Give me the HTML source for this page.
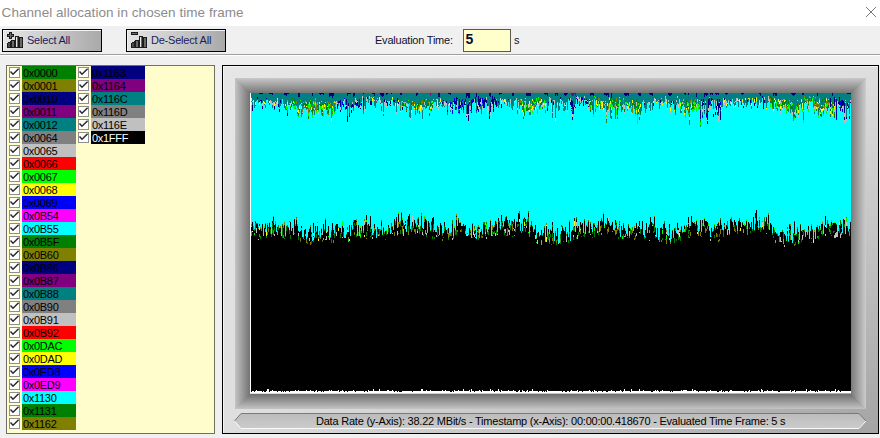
<!DOCTYPE html>
<html><head><meta charset="utf-8"><style>
*{margin:0;padding:0;box-sizing:border-box}
html,body{width:880px;height:438px;overflow:hidden;background:#f0f0f0;font-family:"Liberation Sans",sans-serif}
.abs{position:absolute}
#title{position:absolute;left:0;top:0;width:880px;height:26px;background:#fff}
#title span{position:absolute;left:1.6px;top:4.6px;font-size:13.5px;color:#8c8c8c;letter-spacing:0.05px;white-space:nowrap}
#sep{position:absolute;left:0;top:54px;width:880px;height:1px;background:#a0a0a0}
#sep2{position:absolute;left:0;top:55px;width:880px;height:1px;background:#fff}
.btn{position:absolute;top:29px;height:23px;border:1px solid #000;background:linear-gradient(90deg,#e4e4e4 0%,#d0d0d0 40%,#a9a9a9 100%);box-shadow:inset 1px 1px 0 #f4f4f4}
.btn span{position:absolute;top:4px;font-size:11px;color:#1c1c5c;letter-spacing:-0.22px;white-space:nowrap}
.lbl{position:absolute;font-size:11px;color:#101030;letter-spacing:-0.22px;white-space:nowrap}
#inp{position:absolute;left:463px;top:29px;width:48px;height:23px;border:1px solid #5a5a50;background:#ffffcc}
#inp span{position:absolute;left:1.5px;top:1px;font-size:14px;font-weight:bold;color:#0a0a30}
#list{position:absolute;left:6px;top:65px;width:209px;height:369px;background:#fffdcc;border:1px solid #707064}
.it{position:absolute;width:69px;height:13px}
.ck{position:absolute;left:2px;top:1px}
.cl{position:absolute;left:15px;top:0;width:54px;height:13px;font-size:11px;line-height:13px;letter-spacing:-0.3px;padding-left:1px;padding-top:1px;white-space:nowrap}
#panel{position:absolute;left:222px;top:65px;width:657px;height:369px;border:1px solid #000;box-shadow:inset 1px 1px 0 #f4f4f4;background:linear-gradient(to bottom right,#e6e6e6 0%,#dedede 50%,#a4a4a4 100%)}
#frame{position:absolute;left:235px;top:78px;width:631px;height:331px;border-style:solid;border-width:15px;border-color:#a0a0a0}
#status{position:absolute;left:234px;top:413px;width:633px;height:16px}
#status span{position:absolute;left:82px;top:2px;font-size:11px;color:#000;letter-spacing:-0.22px;white-space:nowrap}
</style></head><body>
<div id="title"><span>Channel allocation in chosen time frame</span>
<svg class="abs" style="left:866px;top:7px" width="10" height="10"><path d="M0 0L10 10M10 0L0 10" stroke="#777" stroke-width="1"/></svg></div>
<div id="sep"></div><div id="sep2"></div>
<div class="btn" style="left:2px;width:100px"><svg width="16" height="16" shape-rendering="crispEdges" style="position:absolute;left:4px;top:2px"><rect x="2" y="0" width="1" height="1" fill="#1c1c1c"/><rect x="3" y="0" width="1" height="1" fill="#1c1c1c"/><rect x="4" y="0" width="1" height="1" fill="#1c1c1c"/><rect x="2" y="1" width="1" height="1" fill="#1c1c1c"/><rect x="3" y="1" width="1" height="1" fill="#6a6a6a"/><rect x="4" y="1" width="1" height="1" fill="#1c1c1c"/><rect x="0" y="2" width="1" height="1" fill="#1c1c1c"/><rect x="1" y="2" width="1" height="1" fill="#1c1c1c"/><rect x="2" y="2" width="1" height="1" fill="#1c1c1c"/><rect x="3" y="2" width="1" height="1" fill="#6a6a6a"/><rect x="4" y="2" width="1" height="1" fill="#1c1c1c"/><rect x="5" y="2" width="1" height="1" fill="#1c1c1c"/><rect x="6" y="2" width="1" height="1" fill="#1c1c1c"/><rect x="0" y="3" width="1" height="1" fill="#1c1c1c"/><rect x="1" y="3" width="1" height="1" fill="#6a6a6a"/><rect x="2" y="3" width="1" height="1" fill="#6a6a6a"/><rect x="3" y="3" width="1" height="1" fill="#6a6a6a"/><rect x="4" y="3" width="1" height="1" fill="#6a6a6a"/><rect x="5" y="3" width="1" height="1" fill="#6a6a6a"/><rect x="6" y="3" width="1" height="1" fill="#1c1c1c"/><rect x="0" y="4" width="1" height="1" fill="#1c1c1c"/><rect x="1" y="4" width="1" height="1" fill="#1c1c1c"/><rect x="2" y="4" width="1" height="1" fill="#1c1c1c"/><rect x="3" y="4" width="1" height="1" fill="#6a6a6a"/><rect x="4" y="4" width="1" height="1" fill="#1c1c1c"/><rect x="5" y="4" width="1" height="1" fill="#1c1c1c"/><rect x="6" y="4" width="1" height="1" fill="#1c1c1c"/><rect x="2" y="5" width="1" height="1" fill="#1c1c1c"/><rect x="3" y="5" width="1" height="1" fill="#6a6a6a"/><rect x="4" y="5" width="1" height="1" fill="#1c1c1c"/><rect x="2" y="6" width="1" height="1" fill="#1c1c1c"/><rect x="3" y="6" width="1" height="1" fill="#1c1c1c"/><rect x="4" y="6" width="1" height="1" fill="#1c1c1c"/><rect x="0" y="11" width="1" height="1" fill="#1c1c1c"/><rect x="0" y="12" width="1" height="1" fill="#1c1c1c"/><rect x="0" y="13" width="1" height="1" fill="#1c1c1c"/><rect x="0" y="14" width="1" height="1" fill="#1c1c1c"/><rect x="0" y="15" width="1" height="1" fill="#1c1c1c"/><rect x="1" y="10" width="1" height="1" fill="#1c1c1c"/><rect x="1" y="11" width="1" height="1" fill="#4a4a4a"/><rect x="1" y="12" width="1" height="1" fill="#4a4a4a"/><rect x="1" y="13" width="1" height="1" fill="#4a4a4a"/><rect x="1" y="14" width="1" height="1" fill="#4a4a4a"/><rect x="1" y="15" width="1" height="1" fill="#1c1c1c"/><rect x="2" y="10" width="1" height="1" fill="#1c1c1c"/><rect x="2" y="11" width="1" height="1" fill="#4a4a4a"/><rect x="2" y="12" width="1" height="1" fill="#4a4a4a"/><rect x="2" y="13" width="1" height="1" fill="#4a4a4a"/><rect x="2" y="14" width="1" height="1" fill="#4a4a4a"/><rect x="2" y="15" width="1" height="1" fill="#1c1c1c"/><rect x="3" y="9" width="1" height="1" fill="#1c1c1c"/><rect x="3" y="10" width="1" height="1" fill="#1c1c1c"/><rect x="3" y="11" width="1" height="1" fill="#1c1c1c"/><rect x="3" y="12" width="1" height="1" fill="#1c1c1c"/><rect x="3" y="13" width="1" height="1" fill="#1c1c1c"/><rect x="3" y="14" width="1" height="1" fill="#1c1c1c"/><rect x="3" y="15" width="1" height="1" fill="#1c1c1c"/><rect x="4" y="8" width="1" height="1" fill="#1c1c1c"/><rect x="4" y="9" width="1" height="1" fill="#1c1c1c"/><rect x="4" y="10" width="1" height="1" fill="#1c1c1c"/><rect x="4" y="11" width="1" height="1" fill="#1c1c1c"/><rect x="4" y="12" width="1" height="1" fill="#1c1c1c"/><rect x="4" y="13" width="1" height="1" fill="#1c1c1c"/><rect x="4" y="14" width="1" height="1" fill="#1c1c1c"/><rect x="4" y="15" width="1" height="1" fill="#1c1c1c"/><rect x="5" y="8" width="1" height="1" fill="#1c1c1c"/><rect x="5" y="9" width="1" height="1" fill="#6a6a6a"/><rect x="5" y="10" width="1" height="1" fill="#6a6a6a"/><rect x="5" y="11" width="1" height="1" fill="#6a6a6a"/><rect x="5" y="12" width="1" height="1" fill="#6a6a6a"/><rect x="5" y="13" width="1" height="1" fill="#6a6a6a"/><rect x="5" y="14" width="1" height="1" fill="#6a6a6a"/><rect x="5" y="15" width="1" height="1" fill="#1c1c1c"/><rect x="6" y="8" width="1" height="1" fill="#1c1c1c"/><rect x="6" y="9" width="1" height="1" fill="#6a6a6a"/><rect x="6" y="10" width="1" height="1" fill="#6a6a6a"/><rect x="6" y="11" width="1" height="1" fill="#6a6a6a"/><rect x="6" y="12" width="1" height="1" fill="#6a6a6a"/><rect x="6" y="13" width="1" height="1" fill="#6a6a6a"/><rect x="6" y="14" width="1" height="1" fill="#6a6a6a"/><rect x="6" y="15" width="1" height="1" fill="#1c1c1c"/><rect x="7" y="8" width="1" height="1" fill="#1c1c1c"/><rect x="7" y="9" width="1" height="1" fill="#1c1c1c"/><rect x="7" y="10" width="1" height="1" fill="#1c1c1c"/><rect x="7" y="11" width="1" height="1" fill="#1c1c1c"/><rect x="7" y="12" width="1" height="1" fill="#1c1c1c"/><rect x="7" y="13" width="1" height="1" fill="#1c1c1c"/><rect x="7" y="14" width="1" height="1" fill="#1c1c1c"/><rect x="7" y="15" width="1" height="1" fill="#1c1c1c"/><rect x="8" y="4" width="1" height="1" fill="#1c1c1c"/><rect x="8" y="5" width="1" height="1" fill="#1c1c1c"/><rect x="8" y="6" width="1" height="1" fill="#1c1c1c"/><rect x="8" y="7" width="1" height="1" fill="#1c1c1c"/><rect x="8" y="8" width="1" height="1" fill="#1c1c1c"/><rect x="8" y="9" width="1" height="1" fill="#1c1c1c"/><rect x="8" y="10" width="1" height="1" fill="#1c1c1c"/><rect x="8" y="11" width="1" height="1" fill="#1c1c1c"/><rect x="8" y="12" width="1" height="1" fill="#1c1c1c"/><rect x="8" y="13" width="1" height="1" fill="#1c1c1c"/><rect x="8" y="14" width="1" height="1" fill="#1c1c1c"/><rect x="8" y="15" width="1" height="1" fill="#1c1c1c"/><rect x="9" y="4" width="1" height="1" fill="#1c1c1c"/><rect x="9" y="5" width="1" height="1" fill="#e8e8e8"/><rect x="9" y="6" width="1" height="1" fill="#e8e8e8"/><rect x="9" y="7" width="1" height="1" fill="#e8e8e8"/><rect x="9" y="8" width="1" height="1" fill="#e8e8e8"/><rect x="9" y="9" width="1" height="1" fill="#e8e8e8"/><rect x="9" y="10" width="1" height="1" fill="#e8e8e8"/><rect x="9" y="11" width="1" height="1" fill="#e8e8e8"/><rect x="9" y="12" width="1" height="1" fill="#e8e8e8"/><rect x="9" y="13" width="1" height="1" fill="#e8e8e8"/><rect x="9" y="14" width="1" height="1" fill="#e8e8e8"/><rect x="9" y="15" width="1" height="1" fill="#1c1c1c"/><rect x="10" y="4" width="1" height="1" fill="#1c1c1c"/><rect x="10" y="5" width="1" height="1" fill="#6a6a6a"/><rect x="10" y="6" width="1" height="1" fill="#6a6a6a"/><rect x="10" y="7" width="1" height="1" fill="#6a6a6a"/><rect x="10" y="8" width="1" height="1" fill="#6a6a6a"/><rect x="10" y="9" width="1" height="1" fill="#6a6a6a"/><rect x="10" y="10" width="1" height="1" fill="#6a6a6a"/><rect x="10" y="11" width="1" height="1" fill="#6a6a6a"/><rect x="10" y="12" width="1" height="1" fill="#6a6a6a"/><rect x="10" y="13" width="1" height="1" fill="#6a6a6a"/><rect x="10" y="14" width="1" height="1" fill="#6a6a6a"/><rect x="10" y="15" width="1" height="1" fill="#1c1c1c"/><rect x="11" y="4" width="1" height="1" fill="#1c1c1c"/><rect x="11" y="5" width="1" height="1" fill="#1c1c1c"/><rect x="11" y="6" width="1" height="1" fill="#1c1c1c"/><rect x="11" y="7" width="1" height="1" fill="#1c1c1c"/><rect x="11" y="8" width="1" height="1" fill="#1c1c1c"/><rect x="11" y="9" width="1" height="1" fill="#1c1c1c"/><rect x="11" y="10" width="1" height="1" fill="#1c1c1c"/><rect x="11" y="11" width="1" height="1" fill="#1c1c1c"/><rect x="11" y="12" width="1" height="1" fill="#1c1c1c"/><rect x="11" y="13" width="1" height="1" fill="#1c1c1c"/><rect x="11" y="14" width="1" height="1" fill="#1c1c1c"/><rect x="11" y="15" width="1" height="1" fill="#1c1c1c"/><rect x="12" y="5" width="1" height="1" fill="#1c1c1c"/><rect x="12" y="6" width="1" height="1" fill="#1c1c1c"/><rect x="12" y="7" width="1" height="1" fill="#1c1c1c"/><rect x="12" y="8" width="1" height="1" fill="#1c1c1c"/><rect x="12" y="9" width="1" height="1" fill="#1c1c1c"/><rect x="12" y="10" width="1" height="1" fill="#1c1c1c"/><rect x="12" y="11" width="1" height="1" fill="#1c1c1c"/><rect x="12" y="12" width="1" height="1" fill="#1c1c1c"/><rect x="12" y="13" width="1" height="1" fill="#1c1c1c"/><rect x="12" y="14" width="1" height="1" fill="#1c1c1c"/><rect x="12" y="15" width="1" height="1" fill="#1c1c1c"/><rect x="13" y="5" width="1" height="1" fill="#1c1c1c"/><rect x="13" y="6" width="1" height="1" fill="#6a6a6a"/><rect x="13" y="7" width="1" height="1" fill="#6a6a6a"/><rect x="13" y="8" width="1" height="1" fill="#6a6a6a"/><rect x="13" y="9" width="1" height="1" fill="#6a6a6a"/><rect x="13" y="10" width="1" height="1" fill="#6a6a6a"/><rect x="13" y="11" width="1" height="1" fill="#6a6a6a"/><rect x="13" y="12" width="1" height="1" fill="#6a6a6a"/><rect x="13" y="13" width="1" height="1" fill="#6a6a6a"/><rect x="13" y="14" width="1" height="1" fill="#6a6a6a"/><rect x="13" y="15" width="1" height="1" fill="#1c1c1c"/><rect x="14" y="5" width="1" height="1" fill="#1c1c1c"/><rect x="14" y="6" width="1" height="1" fill="#6a6a6a"/><rect x="14" y="7" width="1" height="1" fill="#6a6a6a"/><rect x="14" y="8" width="1" height="1" fill="#6a6a6a"/><rect x="14" y="9" width="1" height="1" fill="#6a6a6a"/><rect x="14" y="10" width="1" height="1" fill="#6a6a6a"/><rect x="14" y="11" width="1" height="1" fill="#6a6a6a"/><rect x="14" y="12" width="1" height="1" fill="#6a6a6a"/><rect x="14" y="13" width="1" height="1" fill="#6a6a6a"/><rect x="14" y="14" width="1" height="1" fill="#6a6a6a"/><rect x="14" y="15" width="1" height="1" fill="#1c1c1c"/><rect x="15" y="5" width="1" height="1" fill="#1c1c1c"/><rect x="15" y="6" width="1" height="1" fill="#1c1c1c"/><rect x="15" y="7" width="1" height="1" fill="#1c1c1c"/><rect x="15" y="8" width="1" height="1" fill="#1c1c1c"/><rect x="15" y="9" width="1" height="1" fill="#1c1c1c"/><rect x="15" y="10" width="1" height="1" fill="#1c1c1c"/><rect x="15" y="11" width="1" height="1" fill="#1c1c1c"/><rect x="15" y="12" width="1" height="1" fill="#1c1c1c"/><rect x="15" y="13" width="1" height="1" fill="#1c1c1c"/><rect x="15" y="14" width="1" height="1" fill="#1c1c1c"/><rect x="15" y="15" width="1" height="1" fill="#1c1c1c"/></svg><span style="left:24px">Select All</span></div>
<div class="btn" style="left:126px;width:100px"><svg width="16" height="16" shape-rendering="crispEdges" style="position:absolute;left:4px;top:2px"><rect x="0" y="0" width="1" height="1" fill="#1c1c1c"/><rect x="1" y="0" width="1" height="1" fill="#1c1c1c"/><rect x="2" y="0" width="1" height="1" fill="#1c1c1c"/><rect x="3" y="0" width="1" height="1" fill="#1c1c1c"/><rect x="4" y="0" width="1" height="1" fill="#1c1c1c"/><rect x="5" y="0" width="1" height="1" fill="#1c1c1c"/><rect x="6" y="0" width="1" height="1" fill="#1c1c1c"/><rect x="0" y="1" width="1" height="1" fill="#1c1c1c"/><rect x="1" y="1" width="1" height="1" fill="#6a6a6a"/><rect x="2" y="1" width="1" height="1" fill="#6a6a6a"/><rect x="3" y="1" width="1" height="1" fill="#6a6a6a"/><rect x="4" y="1" width="1" height="1" fill="#6a6a6a"/><rect x="5" y="1" width="1" height="1" fill="#6a6a6a"/><rect x="6" y="1" width="1" height="1" fill="#1c1c1c"/><rect x="0" y="2" width="1" height="1" fill="#1c1c1c"/><rect x="1" y="2" width="1" height="1" fill="#1c1c1c"/><rect x="2" y="2" width="1" height="1" fill="#1c1c1c"/><rect x="3" y="2" width="1" height="1" fill="#1c1c1c"/><rect x="4" y="2" width="1" height="1" fill="#1c1c1c"/><rect x="5" y="2" width="1" height="1" fill="#1c1c1c"/><rect x="6" y="2" width="1" height="1" fill="#1c1c1c"/><rect x="0" y="11" width="1" height="1" fill="#1c1c1c"/><rect x="0" y="12" width="1" height="1" fill="#1c1c1c"/><rect x="0" y="13" width="1" height="1" fill="#1c1c1c"/><rect x="0" y="14" width="1" height="1" fill="#1c1c1c"/><rect x="0" y="15" width="1" height="1" fill="#1c1c1c"/><rect x="1" y="10" width="1" height="1" fill="#1c1c1c"/><rect x="1" y="11" width="1" height="1" fill="#4a4a4a"/><rect x="1" y="12" width="1" height="1" fill="#4a4a4a"/><rect x="1" y="13" width="1" height="1" fill="#4a4a4a"/><rect x="1" y="14" width="1" height="1" fill="#4a4a4a"/><rect x="1" y="15" width="1" height="1" fill="#1c1c1c"/><rect x="2" y="10" width="1" height="1" fill="#1c1c1c"/><rect x="2" y="11" width="1" height="1" fill="#4a4a4a"/><rect x="2" y="12" width="1" height="1" fill="#4a4a4a"/><rect x="2" y="13" width="1" height="1" fill="#4a4a4a"/><rect x="2" y="14" width="1" height="1" fill="#4a4a4a"/><rect x="2" y="15" width="1" height="1" fill="#1c1c1c"/><rect x="3" y="9" width="1" height="1" fill="#1c1c1c"/><rect x="3" y="10" width="1" height="1" fill="#1c1c1c"/><rect x="3" y="11" width="1" height="1" fill="#1c1c1c"/><rect x="3" y="12" width="1" height="1" fill="#1c1c1c"/><rect x="3" y="13" width="1" height="1" fill="#1c1c1c"/><rect x="3" y="14" width="1" height="1" fill="#1c1c1c"/><rect x="3" y="15" width="1" height="1" fill="#1c1c1c"/><rect x="4" y="8" width="1" height="1" fill="#1c1c1c"/><rect x="4" y="9" width="1" height="1" fill="#1c1c1c"/><rect x="4" y="10" width="1" height="1" fill="#1c1c1c"/><rect x="4" y="11" width="1" height="1" fill="#1c1c1c"/><rect x="4" y="12" width="1" height="1" fill="#1c1c1c"/><rect x="4" y="13" width="1" height="1" fill="#1c1c1c"/><rect x="4" y="14" width="1" height="1" fill="#1c1c1c"/><rect x="4" y="15" width="1" height="1" fill="#1c1c1c"/><rect x="5" y="8" width="1" height="1" fill="#1c1c1c"/><rect x="5" y="9" width="1" height="1" fill="#6a6a6a"/><rect x="5" y="10" width="1" height="1" fill="#6a6a6a"/><rect x="5" y="11" width="1" height="1" fill="#6a6a6a"/><rect x="5" y="12" width="1" height="1" fill="#6a6a6a"/><rect x="5" y="13" width="1" height="1" fill="#6a6a6a"/><rect x="5" y="14" width="1" height="1" fill="#6a6a6a"/><rect x="5" y="15" width="1" height="1" fill="#1c1c1c"/><rect x="6" y="8" width="1" height="1" fill="#1c1c1c"/><rect x="6" y="9" width="1" height="1" fill="#6a6a6a"/><rect x="6" y="10" width="1" height="1" fill="#6a6a6a"/><rect x="6" y="11" width="1" height="1" fill="#6a6a6a"/><rect x="6" y="12" width="1" height="1" fill="#6a6a6a"/><rect x="6" y="13" width="1" height="1" fill="#6a6a6a"/><rect x="6" y="14" width="1" height="1" fill="#6a6a6a"/><rect x="6" y="15" width="1" height="1" fill="#1c1c1c"/><rect x="7" y="8" width="1" height="1" fill="#1c1c1c"/><rect x="7" y="9" width="1" height="1" fill="#1c1c1c"/><rect x="7" y="10" width="1" height="1" fill="#1c1c1c"/><rect x="7" y="11" width="1" height="1" fill="#1c1c1c"/><rect x="7" y="12" width="1" height="1" fill="#1c1c1c"/><rect x="7" y="13" width="1" height="1" fill="#1c1c1c"/><rect x="7" y="14" width="1" height="1" fill="#1c1c1c"/><rect x="7" y="15" width="1" height="1" fill="#1c1c1c"/><rect x="8" y="4" width="1" height="1" fill="#1c1c1c"/><rect x="8" y="5" width="1" height="1" fill="#1c1c1c"/><rect x="8" y="6" width="1" height="1" fill="#1c1c1c"/><rect x="8" y="7" width="1" height="1" fill="#1c1c1c"/><rect x="8" y="8" width="1" height="1" fill="#1c1c1c"/><rect x="8" y="9" width="1" height="1" fill="#1c1c1c"/><rect x="8" y="10" width="1" height="1" fill="#1c1c1c"/><rect x="8" y="11" width="1" height="1" fill="#1c1c1c"/><rect x="8" y="12" width="1" height="1" fill="#1c1c1c"/><rect x="8" y="13" width="1" height="1" fill="#1c1c1c"/><rect x="8" y="14" width="1" height="1" fill="#1c1c1c"/><rect x="8" y="15" width="1" height="1" fill="#1c1c1c"/><rect x="9" y="4" width="1" height="1" fill="#1c1c1c"/><rect x="9" y="5" width="1" height="1" fill="#e8e8e8"/><rect x="9" y="6" width="1" height="1" fill="#e8e8e8"/><rect x="9" y="7" width="1" height="1" fill="#e8e8e8"/><rect x="9" y="8" width="1" height="1" fill="#e8e8e8"/><rect x="9" y="9" width="1" height="1" fill="#e8e8e8"/><rect x="9" y="10" width="1" height="1" fill="#e8e8e8"/><rect x="9" y="11" width="1" height="1" fill="#e8e8e8"/><rect x="9" y="12" width="1" height="1" fill="#e8e8e8"/><rect x="9" y="13" width="1" height="1" fill="#e8e8e8"/><rect x="9" y="14" width="1" height="1" fill="#e8e8e8"/><rect x="9" y="15" width="1" height="1" fill="#1c1c1c"/><rect x="10" y="4" width="1" height="1" fill="#1c1c1c"/><rect x="10" y="5" width="1" height="1" fill="#6a6a6a"/><rect x="10" y="6" width="1" height="1" fill="#6a6a6a"/><rect x="10" y="7" width="1" height="1" fill="#6a6a6a"/><rect x="10" y="8" width="1" height="1" fill="#6a6a6a"/><rect x="10" y="9" width="1" height="1" fill="#6a6a6a"/><rect x="10" y="10" width="1" height="1" fill="#6a6a6a"/><rect x="10" y="11" width="1" height="1" fill="#6a6a6a"/><rect x="10" y="12" width="1" height="1" fill="#6a6a6a"/><rect x="10" y="13" width="1" height="1" fill="#6a6a6a"/><rect x="10" y="14" width="1" height="1" fill="#6a6a6a"/><rect x="10" y="15" width="1" height="1" fill="#1c1c1c"/><rect x="11" y="4" width="1" height="1" fill="#1c1c1c"/><rect x="11" y="5" width="1" height="1" fill="#1c1c1c"/><rect x="11" y="6" width="1" height="1" fill="#1c1c1c"/><rect x="11" y="7" width="1" height="1" fill="#1c1c1c"/><rect x="11" y="8" width="1" height="1" fill="#1c1c1c"/><rect x="11" y="9" width="1" height="1" fill="#1c1c1c"/><rect x="11" y="10" width="1" height="1" fill="#1c1c1c"/><rect x="11" y="11" width="1" height="1" fill="#1c1c1c"/><rect x="11" y="12" width="1" height="1" fill="#1c1c1c"/><rect x="11" y="13" width="1" height="1" fill="#1c1c1c"/><rect x="11" y="14" width="1" height="1" fill="#1c1c1c"/><rect x="11" y="15" width="1" height="1" fill="#1c1c1c"/><rect x="12" y="5" width="1" height="1" fill="#1c1c1c"/><rect x="12" y="6" width="1" height="1" fill="#1c1c1c"/><rect x="12" y="7" width="1" height="1" fill="#1c1c1c"/><rect x="12" y="8" width="1" height="1" fill="#1c1c1c"/><rect x="12" y="9" width="1" height="1" fill="#1c1c1c"/><rect x="12" y="10" width="1" height="1" fill="#1c1c1c"/><rect x="12" y="11" width="1" height="1" fill="#1c1c1c"/><rect x="12" y="12" width="1" height="1" fill="#1c1c1c"/><rect x="12" y="13" width="1" height="1" fill="#1c1c1c"/><rect x="12" y="14" width="1" height="1" fill="#1c1c1c"/><rect x="12" y="15" width="1" height="1" fill="#1c1c1c"/><rect x="13" y="5" width="1" height="1" fill="#1c1c1c"/><rect x="13" y="6" width="1" height="1" fill="#6a6a6a"/><rect x="13" y="7" width="1" height="1" fill="#6a6a6a"/><rect x="13" y="8" width="1" height="1" fill="#6a6a6a"/><rect x="13" y="9" width="1" height="1" fill="#6a6a6a"/><rect x="13" y="10" width="1" height="1" fill="#6a6a6a"/><rect x="13" y="11" width="1" height="1" fill="#6a6a6a"/><rect x="13" y="12" width="1" height="1" fill="#6a6a6a"/><rect x="13" y="13" width="1" height="1" fill="#6a6a6a"/><rect x="13" y="14" width="1" height="1" fill="#6a6a6a"/><rect x="13" y="15" width="1" height="1" fill="#1c1c1c"/><rect x="14" y="5" width="1" height="1" fill="#1c1c1c"/><rect x="14" y="6" width="1" height="1" fill="#6a6a6a"/><rect x="14" y="7" width="1" height="1" fill="#6a6a6a"/><rect x="14" y="8" width="1" height="1" fill="#6a6a6a"/><rect x="14" y="9" width="1" height="1" fill="#6a6a6a"/><rect x="14" y="10" width="1" height="1" fill="#6a6a6a"/><rect x="14" y="11" width="1" height="1" fill="#6a6a6a"/><rect x="14" y="12" width="1" height="1" fill="#6a6a6a"/><rect x="14" y="13" width="1" height="1" fill="#6a6a6a"/><rect x="14" y="14" width="1" height="1" fill="#6a6a6a"/><rect x="14" y="15" width="1" height="1" fill="#1c1c1c"/><rect x="15" y="5" width="1" height="1" fill="#1c1c1c"/><rect x="15" y="6" width="1" height="1" fill="#1c1c1c"/><rect x="15" y="7" width="1" height="1" fill="#1c1c1c"/><rect x="15" y="8" width="1" height="1" fill="#1c1c1c"/><rect x="15" y="9" width="1" height="1" fill="#1c1c1c"/><rect x="15" y="10" width="1" height="1" fill="#1c1c1c"/><rect x="15" y="11" width="1" height="1" fill="#1c1c1c"/><rect x="15" y="12" width="1" height="1" fill="#1c1c1c"/><rect x="15" y="13" width="1" height="1" fill="#1c1c1c"/><rect x="15" y="14" width="1" height="1" fill="#1c1c1c"/><rect x="15" y="15" width="1" height="1" fill="#1c1c1c"/></svg><span style="left:24px">De-Select All</span></div>
<div class="lbl" style="left:375px;top:34px">Evaluation Time:</div>
<div id="inp"><span>5</span></div>
<div class="lbl" style="left:514px;top:34px">s</div>
<div id="list"><div class="it" style="left:0px;top:0px"><svg class="ck" width="11" height="11" viewBox="0 0 11 11"><rect x="0.5" y="0.5" width="10" height="10" fill="#fff" stroke="#8f8f8f"/><path d="M1.5 4.5L4 7.2L9.6 1.8" fill="none" stroke="#2a2a2a" stroke-width="1.5"/></svg><div class="cl" style="background:#008000;color:#000">0x0000</div></div><div class="it" style="left:0px;top:13px"><svg class="ck" width="11" height="11" viewBox="0 0 11 11"><rect x="0.5" y="0.5" width="10" height="10" fill="#fff" stroke="#8f8f8f"/><path d="M1.5 4.5L4 7.2L9.6 1.8" fill="none" stroke="#2a2a2a" stroke-width="1.5"/></svg><div class="cl" style="background:#808000;color:#000">0x0001</div></div><div class="it" style="left:0px;top:26px"><svg class="ck" width="11" height="11" viewBox="0 0 11 11"><rect x="0.5" y="0.5" width="10" height="10" fill="#fff" stroke="#8f8f8f"/><path d="M1.5 4.5L4 7.2L9.6 1.8" fill="none" stroke="#2a2a2a" stroke-width="1.5"/></svg><div class="cl" style="background:#000080;color:#000">0x0010</div></div><div class="it" style="left:0px;top:39px"><svg class="ck" width="11" height="11" viewBox="0 0 11 11"><rect x="0.5" y="0.5" width="10" height="10" fill="#fff" stroke="#8f8f8f"/><path d="M1.5 4.5L4 7.2L9.6 1.8" fill="none" stroke="#2a2a2a" stroke-width="1.5"/></svg><div class="cl" style="background:#800080;color:#000">0x0011</div></div><div class="it" style="left:0px;top:52px"><svg class="ck" width="11" height="11" viewBox="0 0 11 11"><rect x="0.5" y="0.5" width="10" height="10" fill="#fff" stroke="#8f8f8f"/><path d="M1.5 4.5L4 7.2L9.6 1.8" fill="none" stroke="#2a2a2a" stroke-width="1.5"/></svg><div class="cl" style="background:#008080;color:#000">0x0012</div></div><div class="it" style="left:0px;top:65px"><svg class="ck" width="11" height="11" viewBox="0 0 11 11"><rect x="0.5" y="0.5" width="10" height="10" fill="#fff" stroke="#8f8f8f"/><path d="M1.5 4.5L4 7.2L9.6 1.8" fill="none" stroke="#2a2a2a" stroke-width="1.5"/></svg><div class="cl" style="background:#808080;color:#000">0x0064</div></div><div class="it" style="left:0px;top:78px"><svg class="ck" width="11" height="11" viewBox="0 0 11 11"><rect x="0.5" y="0.5" width="10" height="10" fill="#fff" stroke="#8f8f8f"/><path d="M1.5 4.5L4 7.2L9.6 1.8" fill="none" stroke="#2a2a2a" stroke-width="1.5"/></svg><div class="cl" style="background:#c0c0c0;color:#000">0x0065</div></div><div class="it" style="left:0px;top:91px"><svg class="ck" width="11" height="11" viewBox="0 0 11 11"><rect x="0.5" y="0.5" width="10" height="10" fill="#fff" stroke="#8f8f8f"/><path d="M1.5 4.5L4 7.2L9.6 1.8" fill="none" stroke="#2a2a2a" stroke-width="1.5"/></svg><div class="cl" style="background:#ff0000;color:#000">0x0066</div></div><div class="it" style="left:0px;top:104px"><svg class="ck" width="11" height="11" viewBox="0 0 11 11"><rect x="0.5" y="0.5" width="10" height="10" fill="#fff" stroke="#8f8f8f"/><path d="M1.5 4.5L4 7.2L9.6 1.8" fill="none" stroke="#2a2a2a" stroke-width="1.5"/></svg><div class="cl" style="background:#00ff00;color:#000">0x0067</div></div><div class="it" style="left:0px;top:117px"><svg class="ck" width="11" height="11" viewBox="0 0 11 11"><rect x="0.5" y="0.5" width="10" height="10" fill="#fff" stroke="#8f8f8f"/><path d="M1.5 4.5L4 7.2L9.6 1.8" fill="none" stroke="#2a2a2a" stroke-width="1.5"/></svg><div class="cl" style="background:#ffff00;color:#000">0x0068</div></div><div class="it" style="left:0px;top:130px"><svg class="ck" width="11" height="11" viewBox="0 0 11 11"><rect x="0.5" y="0.5" width="10" height="10" fill="#fff" stroke="#8f8f8f"/><path d="M1.5 4.5L4 7.2L9.6 1.8" fill="none" stroke="#2a2a2a" stroke-width="1.5"/></svg><div class="cl" style="background:#0000ff;color:#000">0x0069</div></div><div class="it" style="left:0px;top:143px"><svg class="ck" width="11" height="11" viewBox="0 0 11 11"><rect x="0.5" y="0.5" width="10" height="10" fill="#fff" stroke="#8f8f8f"/><path d="M1.5 4.5L4 7.2L9.6 1.8" fill="none" stroke="#2a2a2a" stroke-width="1.5"/></svg><div class="cl" style="background:#ff00ff;color:#000">0x0B54</div></div><div class="it" style="left:0px;top:156px"><svg class="ck" width="11" height="11" viewBox="0 0 11 11"><rect x="0.5" y="0.5" width="10" height="10" fill="#fff" stroke="#8f8f8f"/><path d="M1.5 4.5L4 7.2L9.6 1.8" fill="none" stroke="#2a2a2a" stroke-width="1.5"/></svg><div class="cl" style="background:#00ffff;color:#000">0x0B55</div></div><div class="it" style="left:0px;top:169px"><svg class="ck" width="11" height="11" viewBox="0 0 11 11"><rect x="0.5" y="0.5" width="10" height="10" fill="#fff" stroke="#8f8f8f"/><path d="M1.5 4.5L4 7.2L9.6 1.8" fill="none" stroke="#2a2a2a" stroke-width="1.5"/></svg><div class="cl" style="background:#008000;color:#000">0x0B5F</div></div><div class="it" style="left:0px;top:182px"><svg class="ck" width="11" height="11" viewBox="0 0 11 11"><rect x="0.5" y="0.5" width="10" height="10" fill="#fff" stroke="#8f8f8f"/><path d="M1.5 4.5L4 7.2L9.6 1.8" fill="none" stroke="#2a2a2a" stroke-width="1.5"/></svg><div class="cl" style="background:#808000;color:#000">0x0B60</div></div><div class="it" style="left:0px;top:195px"><svg class="ck" width="11" height="11" viewBox="0 0 11 11"><rect x="0.5" y="0.5" width="10" height="10" fill="#fff" stroke="#8f8f8f"/><path d="M1.5 4.5L4 7.2L9.6 1.8" fill="none" stroke="#2a2a2a" stroke-width="1.5"/></svg><div class="cl" style="background:#000080;color:#000">0x0B86</div></div><div class="it" style="left:0px;top:208px"><svg class="ck" width="11" height="11" viewBox="0 0 11 11"><rect x="0.5" y="0.5" width="10" height="10" fill="#fff" stroke="#8f8f8f"/><path d="M1.5 4.5L4 7.2L9.6 1.8" fill="none" stroke="#2a2a2a" stroke-width="1.5"/></svg><div class="cl" style="background:#800080;color:#000">0x0B87</div></div><div class="it" style="left:0px;top:221px"><svg class="ck" width="11" height="11" viewBox="0 0 11 11"><rect x="0.5" y="0.5" width="10" height="10" fill="#fff" stroke="#8f8f8f"/><path d="M1.5 4.5L4 7.2L9.6 1.8" fill="none" stroke="#2a2a2a" stroke-width="1.5"/></svg><div class="cl" style="background:#008080;color:#000">0x0B88</div></div><div class="it" style="left:0px;top:234px"><svg class="ck" width="11" height="11" viewBox="0 0 11 11"><rect x="0.5" y="0.5" width="10" height="10" fill="#fff" stroke="#8f8f8f"/><path d="M1.5 4.5L4 7.2L9.6 1.8" fill="none" stroke="#2a2a2a" stroke-width="1.5"/></svg><div class="cl" style="background:#808080;color:#000">0x0B90</div></div><div class="it" style="left:0px;top:247px"><svg class="ck" width="11" height="11" viewBox="0 0 11 11"><rect x="0.5" y="0.5" width="10" height="10" fill="#fff" stroke="#8f8f8f"/><path d="M1.5 4.5L4 7.2L9.6 1.8" fill="none" stroke="#2a2a2a" stroke-width="1.5"/></svg><div class="cl" style="background:#c0c0c0;color:#000">0x0B91</div></div><div class="it" style="left:0px;top:260px"><svg class="ck" width="11" height="11" viewBox="0 0 11 11"><rect x="0.5" y="0.5" width="10" height="10" fill="#fff" stroke="#8f8f8f"/><path d="M1.5 4.5L4 7.2L9.6 1.8" fill="none" stroke="#2a2a2a" stroke-width="1.5"/></svg><div class="cl" style="background:#ff0000;color:#000">0x0B92</div></div><div class="it" style="left:0px;top:273px"><svg class="ck" width="11" height="11" viewBox="0 0 11 11"><rect x="0.5" y="0.5" width="10" height="10" fill="#fff" stroke="#8f8f8f"/><path d="M1.5 4.5L4 7.2L9.6 1.8" fill="none" stroke="#2a2a2a" stroke-width="1.5"/></svg><div class="cl" style="background:#00ff00;color:#000">0x0DAC</div></div><div class="it" style="left:0px;top:286px"><svg class="ck" width="11" height="11" viewBox="0 0 11 11"><rect x="0.5" y="0.5" width="10" height="10" fill="#fff" stroke="#8f8f8f"/><path d="M1.5 4.5L4 7.2L9.6 1.8" fill="none" stroke="#2a2a2a" stroke-width="1.5"/></svg><div class="cl" style="background:#ffff00;color:#000">0x0DAD</div></div><div class="it" style="left:0px;top:299px"><svg class="ck" width="11" height="11" viewBox="0 0 11 11"><rect x="0.5" y="0.5" width="10" height="10" fill="#fff" stroke="#8f8f8f"/><path d="M1.5 4.5L4 7.2L9.6 1.8" fill="none" stroke="#2a2a2a" stroke-width="1.5"/></svg><div class="cl" style="background:#0000ff;color:#000">0x0ED8</div></div><div class="it" style="left:0px;top:312px"><svg class="ck" width="11" height="11" viewBox="0 0 11 11"><rect x="0.5" y="0.5" width="10" height="10" fill="#fff" stroke="#8f8f8f"/><path d="M1.5 4.5L4 7.2L9.6 1.8" fill="none" stroke="#2a2a2a" stroke-width="1.5"/></svg><div class="cl" style="background:#ff00ff;color:#000">0x0ED9</div></div><div class="it" style="left:0px;top:325px"><svg class="ck" width="11" height="11" viewBox="0 0 11 11"><rect x="0.5" y="0.5" width="10" height="10" fill="#fff" stroke="#8f8f8f"/><path d="M1.5 4.5L4 7.2L9.6 1.8" fill="none" stroke="#2a2a2a" stroke-width="1.5"/></svg><div class="cl" style="background:#00ffff;color:#000">0x1130</div></div><div class="it" style="left:0px;top:338px"><svg class="ck" width="11" height="11" viewBox="0 0 11 11"><rect x="0.5" y="0.5" width="10" height="10" fill="#fff" stroke="#8f8f8f"/><path d="M1.5 4.5L4 7.2L9.6 1.8" fill="none" stroke="#2a2a2a" stroke-width="1.5"/></svg><div class="cl" style="background:#008000;color:#000">0x1131</div></div><div class="it" style="left:0px;top:351px"><svg class="ck" width="11" height="11" viewBox="0 0 11 11"><rect x="0.5" y="0.5" width="10" height="10" fill="#fff" stroke="#8f8f8f"/><path d="M1.5 4.5L4 7.2L9.6 1.8" fill="none" stroke="#2a2a2a" stroke-width="1.5"/></svg><div class="cl" style="background:#808000;color:#000">0x1162</div></div><div class="it" style="left:69px;top:0px"><svg class="ck" width="11" height="11" viewBox="0 0 11 11"><rect x="0.5" y="0.5" width="10" height="10" fill="#fff" stroke="#8f8f8f"/><path d="M1.5 4.5L4 7.2L9.6 1.8" fill="none" stroke="#2a2a2a" stroke-width="1.5"/></svg><div class="cl" style="background:#000080;color:#000">0x1163</div></div><div class="it" style="left:69px;top:13px"><svg class="ck" width="11" height="11" viewBox="0 0 11 11"><rect x="0.5" y="0.5" width="10" height="10" fill="#fff" stroke="#8f8f8f"/><path d="M1.5 4.5L4 7.2L9.6 1.8" fill="none" stroke="#2a2a2a" stroke-width="1.5"/></svg><div class="cl" style="background:#800080;color:#000">0x1164</div></div><div class="it" style="left:69px;top:26px"><svg class="ck" width="11" height="11" viewBox="0 0 11 11"><rect x="0.5" y="0.5" width="10" height="10" fill="#fff" stroke="#8f8f8f"/><path d="M1.5 4.5L4 7.2L9.6 1.8" fill="none" stroke="#2a2a2a" stroke-width="1.5"/></svg><div class="cl" style="background:#008080;color:#000">0x116C</div></div><div class="it" style="left:69px;top:39px"><svg class="ck" width="11" height="11" viewBox="0 0 11 11"><rect x="0.5" y="0.5" width="10" height="10" fill="#fff" stroke="#8f8f8f"/><path d="M1.5 4.5L4 7.2L9.6 1.8" fill="none" stroke="#2a2a2a" stroke-width="1.5"/></svg><div class="cl" style="background:#808080;color:#000">0x116D</div></div><div class="it" style="left:69px;top:52px"><svg class="ck" width="11" height="11" viewBox="0 0 11 11"><rect x="0.5" y="0.5" width="10" height="10" fill="#fff" stroke="#8f8f8f"/><path d="M1.5 4.5L4 7.2L9.6 1.8" fill="none" stroke="#2a2a2a" stroke-width="1.5"/></svg><div class="cl" style="background:#c0c0c0;color:#000">0x116E</div></div><div class="it" style="left:69px;top:65px"><svg class="ck" width="11" height="11" viewBox="0 0 11 11"><rect x="0.5" y="0.5" width="10" height="10" fill="#fff" stroke="#8f8f8f"/><path d="M1.5 4.5L4 7.2L9.6 1.8" fill="none" stroke="#2a2a2a" stroke-width="1.5"/></svg><div class="cl" style="background:#000000;color:#fff">0x1FFF</div></div></div>
<div id="panel"></div>
<svg class="abs" style="left:235px;top:78px" width="631" height="331" shape-rendering="crispEdges">
<defs>
<linearGradient id="gt" x1="0" y1="0" x2="0" y2="1"><stop offset="0" stop-color="#c8c8c8"/><stop offset="1" stop-color="#767676"/></linearGradient>
<linearGradient id="gb" x1="0" y1="0" x2="0" y2="1"><stop offset="0" stop-color="#6e6e6e"/><stop offset="1" stop-color="#c4c4c4"/></linearGradient>
<linearGradient id="gl" x1="0" y1="0" x2="1" y2="0"><stop offset="0" stop-color="#c4c4c4"/><stop offset="1" stop-color="#727272"/></linearGradient>
<linearGradient id="gr" x1="0" y1="0" x2="1" y2="0"><stop offset="0" stop-color="#7a7a7a"/><stop offset="1" stop-color="#cccccc"/></linearGradient>
</defs>
<path d="M0 0H631L616 15H15Z" fill="url(#gt)"/>
<path d="M0 331H631L616 316H15Z" fill="url(#gb)"/>
<path d="M0 0L15 15V316L0 331Z" fill="url(#gl)"/>
<path d="M631 0L616 15V316L631 331Z" fill="url(#gr)"/>
</svg>
<svg width="880" height="438" style="position:absolute;left:0;top:0" shape-rendering="crispEdges"><rect x="251" y="93" width="600" height="300" fill="#00ffff"/><path fill="#000" d="M251 393V237H252V234H253V237H254V237H255V235H256V237H257V236H258V240H259V237H260V239H261V237H262V238H263V236H264V237H265V237H266V238H267V235H268V235H269V237H270V238H271V237H272V239H273V236H274V236H275V238H276V237H277V237H278V238H279V240H280V233H281V242H282V240H283V238H284V241H285V237H286V239H287V238H288V239H289V238H290V240H291V238H292V235H293V237H294V239H295V240H296V241H297V237H298V241H299V239H300V242H301V243H302V245H303V242H304V240H305V240H306V243H307V244H308V242H309V243H310V246H311V246H312V243H313V243H314V244H315V240H316V242H317V240H318V241H319V243H320V240H321V242H322V242H323V240H324V241H325V240H326V241H327V243H328V239H329V243H330V242H331V243H332V241H333V243H334V241H335V241H336V242H337V241H338V239H339V240H340V238H341V241H342V242H343V241H344V239H345V239H346V239H347V240H348V242H349V241H350V239H351V238H352V238H353V241H354V237H355V237H356V238H357V238H358V236H359V237H360V238H361V238H362V237H363V237H364V237H365V238H366V239H367V240H368V239H369V237H370V239H371V239H372V239H373V239H374V235H375V240H376V239H377V239H378V240H379V236H380V239H381V240H382V236H383V238H384V237H385V240H386V235H387V239H388V237H389V236H390V235H391V237H392V237H393V235H394V237H395V233H396V235H397V236H398V235H399V236H400V234H401V233H402V234H403V236H404V235H405V233H406V233H407V233H408V235H409V234H410V232H411V232H412V230H413V232H414V234H415V234H416V231H417V236H418V233H419V234H420V231H421V234H422V235H423V236H424V234H425V237H426V239H427V240H428V237H429V239H430V236H431V239H432V239H433V236H434V240H435V236H436V237H437V237H438V236H439V236H440V239H441V239H442V241H443V240H444V239H445V241H446V236H447V237H448V240H449V239H450V238H451V239H452V240H453V240H454V238H455V235H456V238H457V236H458V235H459V237H460V236H461V234H462V234H463V236H464V239H465V238H466V237H467V240H468V238H469V239H470V240H471V245H472V241H473V242H474V241H475V244H476V241H477V241H478V243H479V242H480V241H481V240H482V241H483V240H484V237H485V239H486V239H487V238H488V238H489V237H490V239H491V238H492V236H493V236H494V234H495V237H496V236H497V238H498V234H499V238H500V234H501V235H502V234H503V240H504V236H505V235H506V236H507V236H508V234H509V238H510V236H511V232H512V237H513V236H514V236H515V234H516V236H517V235H518V236H519V231H520V233H521V235H522V232H523V233H524V233H525V232H526V233H527V234H528V234H529V237H530V234H531V235H532V235H533V238H534V239H535V242H536V243H537V244H538V241H539V245H540V246H541V246H542V246H543V244H544V244H545V243H546V243H547V245H548V244H549V244H550V248H551V245H552V247H553V245H554V245H555V246H556V247H557V243H558V246H559V243H560V247H561V245H562V246H563V244H564V244H565V242H566V245H567V244H568V243H569V244H570V245H571V243H572V239H573V240H574V238H575V241H576V240H577V239H578V239H579V239H580V241H581V237H582V240H583V237H584V237H585V234H586V236H587V234H588V235H589V237H590V236H591V235H592V238H593V237H594V237H595V238H596V236H597V233H598V235H599V234H600V235H601V235H602V234H603V235H604V234H605V231H606V234H607V237H608V232H609V236H610V233H611V232H612V234H613V235H614V238H615V235H616V237H617V234H618V239H619V240H620V241H621V238H622V240H623V240H624V238H625V239H626V241H627V238H628V240H629V238H630V238H631V239H632V240H633V239H634V240H635V239H636V239H637V238H638V242H639V240H640V241H641V242H642V237H643V236H644V239H645V239H646V235H647V238H648V236H649V242H650V235H651V237H652V239H653V233H654V241H655V238H656V241H657V242H658V240H659V243H660V243H661V244H662V245H663V244H664V243H665V246H666V244H667V244H668V247H669V246H670V244H671V245H672V242H673V245H674V244H675V242H676V241H677V242H678V241H679V239H680V241H681V242H682V238H683V239H684V241H685V239H686V239H687V238H688V238H689V238H690V239H691V235H692V236H693V236H694V236H695V238H696V238H697V234H698V238H699V240H700V236H701V237H702V238H703V235H704V236H705V234H706V236H707V237H708V236H709V236H710V241H711V237H712V239H713V238H714V238H715V238H716V241H717V241H718V242H719V241H720V238H721V240H722V237H723V237H724V236H725V237H726V236H727V235H728V232H729V235H730V230H731V232H732V232H733V231H734V231H735V232H736V232H737V234H738V235H739V233H740V235H741V233H742V233H743V235H744V234H745V235H746V231H747V235H748V234H749V234H750V233H751V235H752V235H753V232H754V233H755V233H756V231H757V233H758V233H759V234H760V232H761V231H762V234H763V237H764V236H765V234H766V234H767V237H768V235H769V232H770V236H771V237H772V236H773V238H774V242H775V243H776V242H777V244H778V243H779V245H780V246H781V247H782V247H783V246H784V247H785V244H786V244H787V242H788V242H789V243H790V243H791V244H792V246H793V244H794V246H795V245H796V244H797V245H798V244H799V243H800V244H801V242H802V242H803V241H804V239H805V243H806V241H807V242H808V242H809V239H810V242H811V243H812V243H813V243H814V240H815V239H816V241H817V240H818V239H819V237H820V240H821V238H822V237H823V238H824V237H825V236H826V236H827V236H828V237H829V237H830V238H831V239H832V238H833V236H834V238H835V238H836V238H837V237H838V236H839V236H840V238H841V236H842V234H843V238H844V235H845V236H846V237H847V236H848V238H849V237H850V240H851V393Z"/><path fill="#008080" d="M251 93h1v5h-1zM251 101h1v1h-1zM252 93h1v8h-1zM252 102h1v3h-1zM253 93h1v7h-1zM254 93h1v7h-1zM254 100h1v2h-1zM254 102h1v6h-1zM255 93h1v9h-1zM255 105h1v1h-1zM256 93h1v3h-1zM256 96h1v3h-1zM256 99h1v2h-1zM257 93h1v4h-1zM257 99h1v1h-1zM258 93h1v9h-1zM258 102h1v1h-1zM259 94h1v7h-1zM260 94h1v5h-1zM260 99h1v1h-1zM261 94h1v6h-1zM261 103h1v1h-1zM262 94h1v9h-1zM263 93h1v8h-1zM264 93h1v8h-1zM264 101h1v1h-1zM264 104h1v1h-1zM265 93h1v10h-1zM265 105h1v3h-1zM266 93h1v5h-1zM266 99h1v1h-1zM267 93h1v7h-1zM268 93h1v9h-1zM268 102h1v1h-1zM269 94h1v7h-1zM269 103h1v2h-1zM270 94h1v6h-1zM271 94h1v6h-1zM271 100h1v1h-1zM272 95h1v8h-1zM272 105h1v3h-1zM273 93h1v8h-1zM273 101h1v1h-1zM274 93h1v9h-1zM274 109h1v1h-1zM275 93h1v8h-1zM275 102h1v2h-1zM276 93h1v8h-1zM276 101h1v1h-1zM277 93h1v5h-1zM278 93h1v9h-1zM278 102h1v2h-1zM279 93h1v15h-1zM280 93h1v7h-1zM280 103h1v3h-1zM281 93h1v7h-1zM281 100h1v3h-1zM281 103h1v1h-1zM282 93h1v6h-1zM283 93h1v8h-1zM283 101h1v3h-1zM284 95h1v7h-1zM284 102h1v2h-1zM284 104h1v1h-1zM284 105h1v3h-1zM285 95h1v8h-1zM285 107h1v3h-1zM286 96h1v9h-1zM286 105h1v1h-1zM287 94h1v6h-1zM287 110h1v3h-1zM288 94h1v8h-1zM288 102h1v1h-1zM288 103h1v1h-1zM288 104h1v1h-1zM289 93h1v9h-1zM289 104h1v1h-1zM290 93h1v10h-1zM290 108h1v1h-1zM291 93h1v6h-1zM291 99h1v2h-1zM292 93h1v5h-1zM292 99h1v3h-1zM293 93h1v8h-1zM293 104h1v2h-1zM294 93h1v6h-1zM294 104h1v2h-1zM295 93h1v6h-1zM295 99h1v3h-1zM295 102h1v3h-1zM295 108h1v1h-1zM296 93h1v8h-1zM296 104h1v1h-1zM296 105h1v1h-1zM297 93h1v15h-1zM297 112h1v2h-1zM298 97h1v10h-1zM298 113h1v3h-1zM299 97h1v8h-1zM300 93h1v5h-1zM300 98h1v2h-1zM300 101h1v2h-1zM301 93h1v10h-1zM301 104h1v2h-1zM301 109h1v2h-1zM301 114h1v3h-1zM302 93h1v15h-1zM302 108h1v1h-1zM303 93h1v8h-1zM304 93h1v10h-1zM305 93h1v8h-1zM305 103h1v1h-1zM306 93h1v9h-1zM306 107h1v2h-1zM307 93h1v9h-1zM307 104h1v2h-1zM307 107h1v2h-1zM308 93h1v11h-1zM309 93h1v7h-1zM309 100h1v2h-1zM309 110h1v2h-1zM310 93h1v6h-1zM310 99h1v1h-1zM311 93h1v8h-1zM311 101h1v3h-1zM311 104h1v3h-1zM311 110h1v2h-1zM312 96h1v9h-1zM312 113h1v2h-1zM313 93h1v8h-1zM313 106h1v2h-1zM313 109h1v2h-1zM314 93h1v8h-1zM314 105h1v3h-1zM314 110h1v3h-1zM314 113h1v2h-1zM315 93h1v5h-1zM315 109h1v1h-1zM316 93h1v10h-1zM317 93h1v9h-1zM317 105h1v3h-1zM318 93h1v14h-1zM318 107h1v2h-1zM319 94h1v8h-1zM319 104h1v1h-1zM320 95h1v9h-1zM321 94h1v7h-1zM321 102h1v3h-1zM322 94h1v9h-1zM323 95h1v10h-1zM324 93h1v10h-1zM325 93h1v8h-1zM326 93h1v9h-1zM326 102h1v3h-1zM326 105h1v1h-1zM327 93h1v8h-1zM327 107h1v3h-1zM328 93h1v9h-1zM328 107h1v1h-1zM329 97h1v6h-1zM329 103h1v1h-1zM329 106h1v3h-1zM330 96h1v7h-1zM331 96h1v21h-1zM331 117h1v1h-1zM332 98h1v8h-1zM333 96h1v6h-1zM333 106h1v1h-1zM334 93h1v8h-1zM334 103h1v1h-1zM334 104h1v3h-1zM334 107h1v2h-1zM334 109h1v3h-1zM335 93h1v9h-1zM336 93h1v8h-1zM337 93h1v10h-1zM338 93h1v8h-1zM338 103h1v3h-1zM339 93h1v8h-1zM340 93h1v7h-1zM341 93h1v7h-1zM341 100h1v8h-1zM341 108h1v2h-1zM342 93h1v9h-1zM343 93h1v8h-1zM344 93h1v5h-1zM345 93h1v12h-1zM345 109h1v1h-1zM346 93h1v6h-1zM347 96h1v20h-1zM348 94h1v9h-1zM349 94h1v9h-1zM349 103h1v10h-1zM350 94h1v7h-1zM350 101h1v3h-1zM350 104h1v3h-1zM351 93h1v12h-1zM352 93h1v9h-1zM353 97h1v7h-1zM353 104h1v1h-1zM353 107h1v3h-1zM353 110h1v1h-1zM354 96h1v9h-1zM355 93h1v5h-1zM356 93h1v7h-1zM357 93h1v7h-1zM358 93h1v6h-1zM358 99h1v3h-1zM358 102h1v3h-1zM359 93h1v6h-1zM360 93h1v5h-1zM360 98h1v6h-1zM361 93h1v9h-1zM362 93h1v3h-1zM363 94h1v4h-1zM363 110h1v1h-1zM363 111h1v3h-1zM364 93h1v5h-1zM364 98h1v8h-1zM365 93h1v8h-1zM365 101h1v5h-1zM365 106h1v3h-1zM366 93h1v4h-1zM366 101h1v1h-1zM367 93h1v4h-1zM368 93h1v6h-1zM368 99h1v3h-1zM368 102h1v1h-1zM369 93h1v3h-1zM369 99h1v1h-1zM370 93h1v5h-1zM370 98h1v3h-1zM371 93h1v4h-1zM371 98h1v3h-1zM372 94h1v4h-1zM373 94h1v3h-1zM373 98h1v1h-1zM374 96h1v4h-1zM374 101h1v3h-1zM374 104h1v2h-1zM375 93h1v12h-1zM375 105h1v3h-1zM376 93h1v7h-1zM376 101h1v2h-1zM377 93h1v5h-1zM377 99h1v2h-1zM378 93h1v5h-1zM378 98h1v2h-1zM379 93h1v4h-1zM380 95h1v5h-1zM380 103h1v1h-1zM381 96h1v7h-1zM381 106h1v3h-1zM381 109h1v2h-1zM382 97h1v3h-1zM382 100h1v3h-1zM383 96h1v16h-1zM383 114h1v2h-1zM384 93h1v6h-1zM385 93h1v5h-1zM385 98h1v2h-1zM386 95h1v6h-1zM387 94h1v7h-1zM388 93h1v5h-1zM388 98h1v3h-1zM389 93h1v6h-1zM389 99h1v2h-1zM390 93h1v8h-1zM391 94h1v6h-1zM392 93h1v4h-1zM393 93h1v7h-1zM393 102h1v3h-1zM394 93h1v7h-1zM394 102h1v2h-1zM394 104h1v2h-1zM395 93h1v8h-1zM395 101h1v2h-1zM396 93h1v19h-1zM397 93h1v5h-1zM397 101h1v2h-1zM398 93h1v7h-1zM399 93h1v7h-1zM399 100h1v1h-1zM399 101h1v1h-1zM400 95h1v10h-1zM400 108h1v3h-1zM401 95h1v6h-1zM402 93h1v8h-1zM402 102h1v1h-1zM403 93h1v8h-1zM404 93h1v9h-1zM405 93h1v9h-1zM405 103h1v1h-1zM406 93h1v10h-1zM406 106h1v3h-1zM407 93h1v10h-1zM408 93h1v7h-1zM408 101h1v1h-1zM408 102h1v2h-1zM409 93h1v10h-1zM409 109h1v2h-1zM409 112h1v3h-1zM410 93h1v19h-1zM410 112h1v3h-1zM410 115h1v3h-1zM411 93h1v10h-1zM411 106h1v1h-1zM411 107h1v3h-1zM412 93h1v8h-1zM412 103h1v1h-1zM413 93h1v9h-1zM414 93h1v9h-1zM414 106h1v1h-1zM414 107h1v1h-1zM415 93h1v9h-1zM415 102h1v3h-1zM415 105h1v2h-1zM415 107h1v3h-1zM415 112h1v3h-1zM416 96h1v9h-1zM417 95h1v9h-1zM417 107h1v1h-1zM417 110h1v3h-1zM418 93h1v10h-1zM419 93h1v9h-1zM419 102h1v2h-1zM420 93h1v9h-1zM421 93h1v9h-1zM421 103h1v2h-1zM422 93h1v7h-1zM422 103h1v3h-1zM422 106h1v1h-1zM422 110h1v9h-1zM423 93h1v7h-1zM423 100h1v3h-1zM423 103h1v3h-1zM423 106h1v1h-1zM424 93h1v6h-1zM424 105h1v2h-1zM425 93h1v6h-1zM426 93h1v6h-1zM426 100h1v3h-1zM426 103h1v2h-1zM427 93h1v7h-1zM427 102h1v2h-1zM428 93h1v6h-1zM428 105h1v1h-1zM429 93h1v9h-1zM430 95h1v8h-1zM430 105h1v2h-1zM431 93h1v8h-1zM431 103h1v2h-1zM432 93h1v8h-1zM433 93h1v6h-1zM433 100h1v3h-1zM434 93h1v7h-1zM434 100h1v2h-1zM435 93h1v8h-1zM435 101h1v1h-1zM436 93h1v6h-1zM436 100h1v3h-1zM436 103h1v3h-1zM437 93h1v6h-1zM438 97h1v8h-1zM438 106h1v1h-1zM439 97h1v5h-1zM439 103h1v3h-1zM440 93h1v5h-1zM440 102h1v2h-1zM441 93h1v9h-1zM441 105h1v1h-1zM442 93h1v9h-1zM442 104h1v3h-1zM443 93h1v7h-1zM443 101h1v3h-1zM443 104h1v2h-1zM444 93h1v8h-1zM444 106h1v1h-1zM445 93h1v8h-1zM445 101h1v1h-1zM446 93h1v8h-1zM447 93h1v15h-1zM447 108h1v2h-1zM447 112h1v3h-1zM448 94h1v10h-1zM449 94h1v9h-1zM450 95h1v7h-1zM450 110h1v2h-1zM451 93h1v6h-1zM451 99h1v3h-1zM452 93h1v11h-1zM452 104h1v3h-1zM453 93h1v8h-1zM453 105h1v1h-1zM454 93h1v5h-1zM455 93h1v8h-1zM455 104h1v3h-1zM456 93h1v4h-1zM456 108h1v2h-1zM457 93h1v5h-1zM457 99h1v2h-1zM458 93h1v8h-1zM458 101h1v5h-1zM458 109h1v3h-1zM459 93h1v6h-1zM459 113h1v1h-1zM460 93h1v9h-1zM461 93h1v8h-1zM461 105h1v3h-1zM461 108h1v2h-1zM462 93h1v6h-1zM462 101h1v2h-1zM463 93h1v6h-1zM463 99h1v8h-1zM463 110h1v3h-1zM464 93h1v7h-1zM464 100h1v1h-1zM465 93h1v6h-1zM466 98h1v6h-1zM466 104h1v10h-1zM467 96h1v9h-1zM468 98h1v6h-1zM469 98h1v3h-1zM469 104h1v2h-1zM470 93h1v13h-1zM471 93h1v7h-1zM471 110h1v2h-1zM472 93h1v6h-1zM473 93h1v4h-1zM473 97h1v2h-1zM474 93h1v3h-1zM474 96h1v3h-1zM475 93h1v4h-1zM476 97h1v5h-1zM476 102h1v8h-1zM476 111h1v2h-1zM477 93h1v6h-1zM477 99h1v3h-1zM478 93h1v3h-1zM479 93h1v6h-1zM480 93h1v5h-1zM480 106h1v3h-1zM481 93h1v6h-1zM481 105h1v9h-1zM482 93h1v5h-1zM482 103h1v3h-1zM483 93h1v7h-1zM484 93h1v6h-1zM485 93h1v5h-1zM486 93h1v4h-1zM487 93h1v11h-1zM488 93h1v7h-1zM488 100h1v5h-1zM488 105h1v1h-1zM489 96h1v7h-1zM489 103h1v6h-1zM489 109h1v2h-1zM489 114h1v2h-1zM490 97h1v6h-1zM491 93h1v7h-1zM491 106h1v1h-1zM492 93h1v3h-1zM493 93h1v6h-1zM493 108h1v1h-1zM494 93h1v4h-1zM494 100h1v1h-1zM494 101h1v1h-1zM495 93h1v6h-1zM496 93h1v6h-1zM496 100h1v1h-1zM497 93h1v6h-1zM497 99h1v3h-1zM497 102h1v2h-1zM497 104h1v2h-1zM498 93h1v8h-1zM498 103h1v2h-1zM498 105h1v3h-1zM499 95h1v7h-1zM499 102h1v3h-1zM500 94h1v4h-1zM501 94h1v6h-1zM502 93h1v6h-1zM503 93h1v4h-1zM503 97h1v2h-1zM503 99h1v1h-1zM504 93h1v4h-1zM504 97h1v2h-1zM504 102h1v2h-1zM505 93h1v6h-1zM506 93h1v7h-1zM506 100h1v2h-1zM507 93h1v7h-1zM507 100h1v3h-1zM507 103h1v3h-1zM508 93h1v3h-1zM508 96h1v3h-1zM508 100h1v2h-1zM509 93h1v12h-1zM509 105h1v2h-1zM510 93h1v6h-1zM511 93h1v7h-1zM511 100h1v3h-1zM511 103h1v3h-1zM511 106h1v2h-1zM512 96h1v12h-1zM512 108h1v1h-1zM512 109h1v1h-1zM513 96h1v7h-1zM513 103h1v3h-1zM514 93h1v8h-1zM515 93h1v6h-1zM515 99h1v1h-1zM516 93h1v5h-1zM517 93h1v15h-1zM517 110h1v2h-1zM517 112h1v2h-1zM518 93h1v7h-1zM518 101h1v1h-1zM519 93h1v16h-1zM520 93h1v4h-1zM520 97h1v2h-1zM521 93h1v6h-1zM521 102h1v3h-1zM522 93h1v5h-1zM522 98h1v3h-1zM522 106h1v1h-1zM522 107h1v3h-1zM523 93h1v18h-1zM524 93h1v8h-1zM524 102h1v3h-1zM525 93h1v5h-1zM525 99h1v1h-1zM525 100h1v1h-1zM526 96h1v7h-1zM527 96h1v6h-1zM527 102h1v3h-1zM527 106h1v2h-1zM527 108h1v2h-1zM527 110h1v1h-1zM528 96h1v8h-1zM529 96h1v5h-1zM530 96h1v7h-1zM530 112h1v3h-1zM531 93h1v8h-1zM532 93h1v6h-1zM532 103h1v3h-1zM533 93h1v8h-1zM534 93h1v6h-1zM534 104h1v1h-1zM534 108h1v2h-1zM535 93h1v9h-1zM535 103h1v1h-1zM535 105h1v2h-1zM536 93h1v5h-1zM536 102h1v3h-1zM537 93h1v8h-1zM538 93h1v4h-1zM539 93h1v8h-1zM539 106h1v3h-1zM540 93h1v5h-1zM540 103h1v2h-1zM540 105h1v2h-1zM541 93h1v5h-1zM542 93h1v9h-1zM542 102h1v1h-1zM542 107h1v2h-1zM543 93h1v7h-1zM544 94h1v6h-1zM545 95h1v6h-1zM546 94h1v8h-1zM546 102h1v1h-1zM547 96h1v8h-1zM547 104h1v1h-1zM547 105h1v3h-1zM548 93h1v8h-1zM548 101h1v1h-1zM548 103h1v3h-1zM549 93h1v4h-1zM550 93h1v5h-1zM551 93h1v7h-1zM552 93h1v19h-1zM552 113h1v3h-1zM552 116h1v2h-1zM553 93h1v7h-1zM553 101h1v1h-1zM554 93h1v7h-1zM555 96h1v17h-1zM555 113h1v2h-1zM555 115h1v3h-1zM556 94h1v7h-1zM556 101h1v1h-1zM556 102h1v3h-1zM556 105h1v3h-1zM557 96h1v5h-1zM557 101h1v1h-1zM558 93h1v15h-1zM558 108h1v3h-1zM559 93h1v10h-1zM559 106h1v3h-1zM559 109h1v1h-1zM560 93h1v4h-1zM561 93h1v7h-1zM561 101h1v3h-1zM562 93h1v8h-1zM563 93h1v14h-1zM563 108h1v1h-1zM563 109h1v2h-1zM564 95h1v8h-1zM564 106h1v3h-1zM564 109h1v2h-1zM565 96h1v9h-1zM565 106h1v2h-1zM565 108h1v2h-1zM566 95h1v3h-1zM566 98h1v1h-1zM566 99h1v3h-1zM567 94h1v16h-1zM568 93h1v4h-1zM568 97h1v2h-1zM569 93h1v5h-1zM569 100h1v1h-1zM570 93h1v5h-1zM571 95h1v5h-1zM572 96h1v5h-1zM572 109h1v2h-1zM573 96h1v4h-1zM573 100h1v7h-1zM574 94h1v11h-1zM575 96h1v8h-1zM576 93h1v3h-1zM577 93h1v3h-1zM578 93h1v4h-1zM579 93h1v6h-1zM579 101h1v3h-1zM580 93h1v4h-1zM580 103h1v1h-1zM581 93h1v4h-1zM581 101h1v2h-1zM582 93h1v4h-1zM583 93h1v5h-1zM583 98h1v3h-1zM584 93h1v3h-1zM584 98h1v1h-1zM585 93h1v7h-1zM585 103h1v2h-1zM586 93h1v6h-1zM587 93h1v7h-1zM588 93h1v11h-1zM589 93h1v6h-1zM589 104h1v3h-1zM590 96h1v5h-1zM591 95h1v3h-1zM591 98h1v3h-1zM591 101h1v1h-1zM591 102h1v2h-1zM592 95h1v5h-1zM592 102h1v3h-1zM592 107h1v2h-1zM593 96h1v13h-1zM594 93h1v3h-1zM594 97h1v2h-1zM595 93h1v4h-1zM595 99h1v2h-1zM595 109h1v3h-1zM596 93h1v7h-1zM597 93h1v4h-1zM598 93h1v5h-1zM598 100h1v1h-1zM599 93h1v5h-1zM600 93h1v8h-1zM601 93h1v6h-1zM602 93h1v8h-1zM603 93h1v8h-1zM603 103h1v3h-1zM604 95h1v6h-1zM604 101h1v3h-1zM604 106h1v2h-1zM605 95h1v6h-1zM605 102h1v1h-1zM606 96h1v16h-1zM606 120h1v2h-1zM607 95h1v7h-1zM607 102h1v1h-1zM608 97h1v6h-1zM609 93h1v4h-1zM610 93h1v5h-1zM610 107h1v1h-1zM610 108h1v3h-1zM610 111h1v7h-1zM611 98h1v5h-1zM611 110h1v3h-1zM612 93h1v7h-1zM612 104h1v1h-1zM613 93h1v9h-1zM613 102h1v1h-1zM613 103h1v2h-1zM614 93h1v5h-1zM614 98h1v1h-1zM614 102h1v3h-1zM615 93h1v3h-1zM615 96h1v3h-1zM615 99h1v3h-1zM615 103h1v1h-1zM615 107h1v3h-1zM615 110h1v9h-1zM616 93h1v5h-1zM616 101h1v3h-1zM617 93h1v14h-1zM617 111h1v1h-1zM617 117h1v2h-1zM618 93h1v8h-1zM619 93h1v4h-1zM620 93h1v6h-1zM620 102h1v1h-1zM621 93h1v9h-1zM621 102h1v2h-1zM621 104h1v2h-1zM622 93h1v9h-1zM622 102h1v3h-1zM623 93h1v5h-1zM624 95h1v10h-1zM625 96h1v6h-1zM626 96h1v6h-1zM626 104h1v1h-1zM627 95h1v8h-1zM627 105h1v1h-1zM628 96h1v8h-1zM629 93h1v9h-1zM630 93h1v8h-1zM630 101h1v3h-1zM630 104h1v3h-1zM631 93h1v10h-1zM632 93h1v7h-1zM632 105h1v2h-1zM633 93h1v7h-1zM633 102h1v2h-1zM633 104h1v1h-1zM634 93h1v10h-1zM634 107h1v2h-1zM635 93h1v18h-1zM636 93h1v7h-1zM636 106h1v2h-1zM637 93h1v22h-1zM638 95h1v7h-1zM639 96h1v8h-1zM639 104h1v2h-1zM639 109h1v3h-1zM640 96h1v6h-1zM640 102h1v2h-1zM640 107h1v1h-1zM640 108h1v3h-1zM640 113h1v2h-1zM641 93h1v17h-1zM641 110h1v1h-1zM642 93h1v8h-1zM642 101h1v1h-1zM643 93h1v6h-1zM643 99h1v1h-1zM644 93h1v9h-1zM644 105h1v3h-1zM645 93h1v20h-1zM646 93h1v8h-1zM646 101h1v1h-1zM646 102h1v7h-1zM647 93h1v8h-1zM647 101h1v2h-1zM648 93h1v9h-1zM649 94h1v8h-1zM649 105h1v3h-1zM650 95h1v13h-1zM650 108h1v3h-1zM651 95h1v8h-1zM652 96h1v11h-1zM652 107h1v3h-1zM653 93h1v8h-1zM654 93h1v5h-1zM655 93h1v6h-1zM656 93h1v5h-1zM656 98h1v3h-1zM656 101h1v1h-1zM657 93h1v6h-1zM657 99h1v2h-1zM658 93h1v7h-1zM658 101h1v1h-1zM659 93h1v15h-1zM659 108h1v1h-1zM660 93h1v7h-1zM660 104h1v1h-1zM661 93h1v5h-1zM661 99h1v3h-1zM662 93h1v8h-1zM663 93h1v7h-1zM663 100h1v2h-1zM663 102h1v1h-1zM664 93h1v4h-1zM664 97h1v3h-1zM664 100h1v2h-1zM665 93h1v3h-1zM666 93h1v6h-1zM667 93h1v12h-1zM667 105h1v3h-1zM668 95h1v5h-1zM668 102h1v1h-1zM669 96h1v8h-1zM670 96h1v11h-1zM671 95h1v6h-1zM672 93h1v6h-1zM672 99h1v2h-1zM673 93h1v8h-1zM674 93h1v15h-1zM674 108h1v2h-1zM675 93h1v12h-1zM675 109h1v6h-1zM676 93h1v7h-1zM676 102h1v3h-1zM677 93h1v3h-1zM677 98h1v5h-1zM678 93h1v11h-1zM679 93h1v4h-1zM679 97h1v2h-1zM680 93h1v9h-1zM680 109h1v3h-1zM680 112h1v1h-1zM681 93h1v7h-1zM681 100h1v3h-1zM681 104h1v2h-1zM681 111h1v2h-1zM682 93h1v8h-1zM682 101h1v1h-1zM682 105h1v1h-1zM683 93h1v6h-1zM684 94h1v9h-1zM684 104h1v3h-1zM685 95h1v13h-1zM685 111h1v2h-1zM686 93h1v7h-1zM686 106h1v1h-1zM687 93h1v9h-1zM687 107h1v3h-1zM688 95h1v8h-1zM688 111h1v2h-1zM689 93h1v19h-1zM689 115h1v1h-1zM689 122h1v3h-1zM690 93h1v7h-1zM690 104h1v3h-1zM691 93h1v5h-1zM692 93h1v8h-1zM692 101h1v1h-1zM692 102h1v1h-1zM693 93h1v9h-1zM693 104h1v3h-1zM693 107h1v2h-1zM694 93h1v7h-1zM694 105h1v1h-1zM695 93h1v6h-1zM695 104h1v3h-1zM696 97h1v7h-1zM697 93h1v4h-1zM698 93h1v11h-1zM699 93h1v7h-1zM699 107h1v2h-1zM700 93h1v17h-1zM700 125h1v2h-1zM701 93h1v6h-1zM701 105h1v1h-1zM702 93h1v9h-1zM702 106h1v3h-1zM702 112h1v3h-1zM703 93h1v6h-1zM704 97h1v8h-1zM704 105h1v4h-1zM704 111h1v3h-1zM705 95h1v6h-1zM706 96h1v7h-1zM706 103h1v10h-1zM706 117h1v1h-1zM707 95h1v15h-1zM708 93h1v6h-1zM709 93h1v4h-1zM710 95h1v7h-1zM710 104h1v2h-1zM711 94h1v4h-1zM712 95h1v4h-1zM713 93h1v16h-1zM714 93h1v7h-1zM715 94h1v14h-1zM716 95h1v6h-1zM717 94h1v5h-1zM718 95h1v8h-1zM718 113h1v3h-1zM719 93h1v6h-1zM720 93h1v9h-1zM720 110h1v1h-1zM721 93h1v14h-1zM722 93h1v11h-1zM722 104h1v2h-1zM722 106h1v1h-1zM723 93h1v5h-1zM724 93h1v5h-1zM725 94h1v5h-1zM726 95h1v6h-1zM726 106h1v2h-1zM727 94h1v7h-1zM727 101h1v2h-1zM727 104h1v2h-1zM728 93h1v7h-1zM729 93h1v8h-1zM729 101h1v1h-1zM729 102h1v3h-1zM730 93h1v7h-1zM730 104h1v2h-1zM731 93h1v5h-1zM731 98h1v3h-1zM731 101h1v1h-1zM732 93h1v6h-1zM733 93h1v11h-1zM734 93h1v9h-1zM734 103h1v3h-1zM735 93h1v8h-1zM735 102h1v3h-1zM736 93h1v5h-1zM737 93h1v5h-1zM737 101h1v1h-1zM738 93h1v7h-1zM738 101h1v3h-1zM738 104h1v3h-1zM739 93h1v6h-1zM740 93h1v7h-1zM741 94h1v9h-1zM742 95h1v4h-1zM743 94h1v6h-1zM743 100h1v3h-1zM744 93h1v7h-1zM744 100h1v2h-1zM744 102h1v3h-1zM745 93h1v5h-1zM745 100h1v3h-1zM746 93h1v10h-1zM746 103h1v3h-1zM746 106h1v1h-1zM747 93h1v7h-1zM747 102h1v3h-1zM748 93h1v5h-1zM748 99h1v3h-1zM749 93h1v5h-1zM750 93h1v5h-1zM750 98h1v2h-1zM750 103h1v2h-1zM751 93h1v10h-1zM751 106h1v3h-1zM752 93h1v5h-1zM753 93h1v3h-1zM753 96h1v2h-1zM753 98h1v1h-1zM753 99h1v3h-1zM754 93h1v6h-1zM755 93h1v5h-1zM755 101h1v3h-1zM756 93h1v4h-1zM757 93h1v13h-1zM758 93h1v9h-1zM758 102h1v3h-1zM759 94h1v6h-1zM760 96h1v5h-1zM760 101h1v2h-1zM761 93h1v6h-1zM761 99h1v3h-1zM762 93h1v3h-1zM763 93h1v5h-1zM764 93h1v3h-1zM764 96h1v1h-1zM765 93h1v5h-1zM765 98h1v2h-1zM765 100h1v3h-1zM766 93h1v15h-1zM767 93h1v4h-1zM767 97h1v3h-1zM767 100h1v3h-1zM768 93h1v3h-1zM768 101h1v1h-1zM769 93h1v4h-1zM769 97h1v1h-1zM769 98h1v1h-1zM770 93h1v3h-1zM770 101h1v2h-1zM771 93h1v4h-1zM771 100h1v2h-1zM772 93h1v5h-1zM773 96h1v4h-1zM773 100h1v1h-1zM773 101h1v2h-1zM773 103h1v2h-1zM773 105h1v3h-1zM773 108h1v1h-1zM774 94h1v4h-1zM775 96h1v4h-1zM776 96h1v6h-1zM776 108h1v1h-1zM777 93h1v6h-1zM777 108h1v3h-1zM778 93h1v6h-1zM778 102h1v1h-1zM778 105h1v2h-1zM779 93h1v6h-1zM779 99h1v1h-1zM779 104h1v3h-1zM780 93h1v6h-1zM780 109h1v2h-1zM781 93h1v6h-1zM782 93h1v7h-1zM782 106h1v2h-1zM783 93h1v6h-1zM783 100h1v2h-1zM783 102h1v3h-1zM784 93h1v6h-1zM785 93h1v7h-1zM785 102h1v2h-1zM786 93h1v7h-1zM786 102h1v3h-1zM787 93h1v12h-1zM788 93h1v8h-1zM788 109h1v3h-1zM789 93h1v7h-1zM789 104h1v1h-1zM790 93h1v10h-1zM790 104h1v2h-1zM790 108h1v3h-1zM790 111h1v2h-1zM791 94h1v8h-1zM792 95h1v8h-1zM792 105h1v2h-1zM792 109h1v2h-1zM792 111h1v1h-1zM793 96h1v16h-1zM793 112h1v3h-1zM793 116h1v1h-1zM794 95h1v17h-1zM794 114h1v1h-1zM795 94h1v15h-1zM796 93h1v10h-1zM796 103h1v3h-1zM797 93h1v7h-1zM797 101h1v2h-1zM797 103h1v1h-1zM798 93h1v8h-1zM798 101h1v3h-1zM798 113h1v2h-1zM799 93h1v8h-1zM800 93h1v8h-1zM800 102h1v1h-1zM801 93h1v6h-1zM801 102h1v2h-1zM801 107h1v1h-1zM802 95h1v8h-1zM803 95h1v12h-1zM803 112h1v3h-1zM803 115h1v2h-1zM803 117h1v3h-1zM804 93h1v3h-1zM804 99h1v3h-1zM805 93h1v5h-1zM805 98h1v1h-1zM806 93h1v5h-1zM806 102h1v1h-1zM807 93h1v6h-1zM808 93h1v6h-1zM809 93h1v3h-1zM809 99h1v2h-1zM810 93h1v4h-1zM810 98h1v1h-1zM811 93h1v3h-1zM811 96h1v2h-1zM812 93h1v5h-1zM813 93h1v3h-1zM813 99h1v3h-1zM813 102h1v2h-1zM813 104h1v3h-1zM814 93h1v8h-1zM814 112h1v2h-1zM815 93h1v4h-1zM816 93h1v8h-1zM816 109h1v2h-1zM817 96h1v6h-1zM817 104h1v3h-1zM818 93h1v10h-1zM818 108h1v1h-1zM818 112h1v3h-1zM819 93h1v5h-1zM819 107h1v3h-1zM820 93h1v15h-1zM820 110h1v1h-1zM820 111h1v1h-1zM821 93h1v5h-1zM821 98h1v7h-1zM822 93h1v6h-1zM822 102h1v3h-1zM823 93h1v5h-1zM823 98h1v7h-1zM823 107h1v1h-1zM823 111h1v3h-1zM824 93h1v4h-1zM824 99h1v3h-1zM824 102h1v1h-1zM825 93h1v6h-1zM826 93h1v5h-1zM827 93h1v7h-1zM827 100h1v3h-1zM827 109h1v2h-1zM828 93h1v6h-1zM829 93h1v7h-1zM829 102h1v1h-1zM830 93h1v5h-1zM830 114h1v1h-1zM831 93h1v6h-1zM831 99h1v3h-1zM832 96h1v6h-1zM832 105h1v3h-1zM833 93h1v6h-1zM833 99h1v2h-1zM833 101h1v3h-1zM834 93h1v4h-1zM834 112h1v2h-1zM835 93h1v5h-1zM836 93h1v6h-1zM837 93h1v8h-1zM838 93h1v9h-1zM839 93h1v4h-1zM840 93h1v8h-1zM840 105h1v2h-1zM841 93h1v7h-1zM842 93h1v7h-1zM843 93h1v8h-1zM843 105h1v1h-1zM844 93h1v10h-1zM845 93h1v7h-1zM845 101h1v1h-1zM845 103h1v3h-1zM846 93h1v16h-1zM846 109h1v8h-1zM847 94h1v9h-1zM848 94h1v9h-1zM848 104h1v2h-1zM849 94h1v20h-1zM850 94h1v6h-1z"/><path fill="#ffff00" d="M251 98h1v3h-1zM251 102h1v3h-1zM252 231h1v1h-1zM253 100h1v2h-1zM255 102h1v3h-1zM259 102h1v2h-1zM259 104h1v1h-1zM259 226h1v4h-1zM263 101h1v2h-1zM264 102h1v2h-1zM266 231h1v5h-1zM267 100h1v1h-1zM269 101h1v2h-1zM274 103h1v3h-1zM277 98h1v1h-1zM277 101h1v3h-1zM283 104h1v1h-1zM285 104h1v2h-1zM287 102h1v2h-1zM291 107h1v2h-1zM293 102h1v1h-1zM297 110h1v2h-1zM298 110h1v1h-1zM298 111h1v2h-1zM299 106h1v3h-1zM301 103h1v1h-1zM301 106h1v3h-1zM306 106h1v1h-1zM311 107h1v3h-1zM318 239h1v2h-1zM319 102h1v2h-1zM322 105h1v3h-1zM324 104h1v3h-1zM324 109h1v1h-1zM326 231h1v2h-1zM327 106h1v1h-1zM331 118h1v3h-1zM332 106h1v2h-1zM334 102h1v1h-1zM338 228h1v3h-1zM347 230h1v2h-1zM349 239h1v2h-1zM364 235h1v2h-1zM372 98h1v3h-1zM379 97h1v2h-1zM379 99h1v2h-1zM392 97h1v2h-1zM395 103h1v3h-1zM397 103h1v3h-1zM398 100h1v2h-1zM400 111h1v1h-1zM405 223h1v1h-1zM411 110h1v3h-1zM414 104h1v2h-1zM414 108h1v1h-1zM416 107h1v2h-1zM417 231h1v2h-1zM420 105h1v1h-1zM420 106h1v3h-1zM420 109h1v3h-1zM421 105h1v3h-1zM430 107h1v2h-1zM437 101h1v3h-1zM437 104h1v3h-1zM440 99h1v3h-1zM449 103h1v2h-1zM467 234h1v2h-1zM473 232h1v3h-1zM500 99h1v1h-1zM501 101h1v3h-1zM504 99h1v3h-1zM505 100h1v3h-1zM514 101h1v1h-1zM517 108h1v2h-1zM519 109h1v3h-1zM519 219h1v3h-1zM522 104h1v2h-1zM522 110h1v2h-1zM523 113h1v3h-1zM524 222h1v4h-1zM529 101h1v3h-1zM529 110h1v2h-1zM531 104h1v1h-1zM531 109h1v1h-1zM532 99h1v2h-1zM532 106h1v3h-1zM535 107h1v3h-1zM537 102h1v2h-1zM539 110h1v1h-1zM540 101h1v2h-1zM541 99h1v3h-1zM543 103h1v2h-1zM545 103h1v3h-1zM546 225h1v1h-1zM546 237h1v5h-1zM551 103h1v3h-1zM551 106h1v3h-1zM555 118h1v3h-1zM557 103h1v2h-1zM560 99h1v1h-1zM565 105h1v1h-1zM574 221h1v5h-1zM580 229h1v1h-1zM590 101h1v1h-1zM596 100h1v3h-1zM596 103h1v2h-1zM597 104h1v2h-1zM599 104h1v3h-1zM599 107h1v3h-1zM601 101h1v3h-1zM602 102h1v3h-1zM602 105h1v3h-1zM603 108h1v2h-1zM603 111h1v1h-1zM607 103h1v3h-1zM609 98h1v1h-1zM609 99h1v1h-1zM610 101h1v3h-1zM611 107h1v3h-1zM627 103h1v2h-1zM627 106h1v3h-1zM628 106h1v2h-1zM631 106h1v1h-1zM632 100h1v3h-1zM636 110h1v3h-1zM638 109h1v3h-1zM640 104h1v3h-1zM649 108h1v1h-1zM653 101h1v2h-1zM655 99h1v1h-1zM656 102h1v1h-1zM661 102h1v1h-1zM662 104h1v1h-1zM666 102h1v2h-1zM667 108h1v2h-1zM670 108h1v3h-1zM674 110h1v1h-1zM679 233h1v4h-1zM680 103h1v3h-1zM681 109h1v2h-1zM684 113h1v2h-1zM686 108h1v1h-1zM688 107h1v2h-1zM689 117h1v3h-1zM691 105h1v3h-1zM694 106h1v1h-1zM697 232h1v2h-1zM699 100h1v1h-1zM721 110h1v1h-1zM723 101h1v2h-1zM724 100h1v2h-1zM726 104h1v2h-1zM727 103h1v1h-1zM731 102h1v3h-1zM733 105h1v3h-1zM735 105h1v2h-1zM737 99h1v2h-1zM739 99h1v1h-1zM739 100h1v2h-1zM740 228h1v3h-1zM742 100h1v2h-1zM745 98h1v2h-1zM748 98h1v1h-1zM751 103h1v3h-1zM752 98h1v1h-1zM754 99h1v3h-1zM756 98h1v1h-1zM756 99h1v2h-1zM759 103h1v2h-1zM762 226h1v1h-1zM766 108h1v1h-1zM773 109h1v3h-1zM774 99h1v1h-1zM775 100h1v3h-1zM778 99h1v3h-1zM779 101h1v3h-1zM780 106h1v3h-1zM783 105h1v1h-1zM784 100h1v2h-1zM787 111h1v1h-1zM798 110h1v3h-1zM799 105h1v1h-1zM801 100h1v2h-1zM802 103h1v2h-1zM802 105h1v1h-1zM802 106h1v3h-1zM805 102h1v1h-1zM813 240h1v3h-1zM816 107h1v2h-1zM817 102h1v1h-1zM819 100h1v3h-1zM820 113h1v1h-1zM821 105h1v1h-1zM821 109h1v3h-1zM822 109h1v2h-1zM823 108h1v2h-1zM825 225h1v2h-1zM826 99h1v2h-1zM830 111h1v3h-1zM831 109h1v2h-1zM832 114h1v2h-1zM834 106h1v3h-1zM839 222h1v3h-1z"/><path fill="#808000" d="M251 224h1v2h-1zM251 231h1v5h-1zM253 226h1v4h-1zM258 227h1v2h-1zM259 234h1v3h-1zM260 227h1v2h-1zM261 229h1v2h-1zM265 223h1v1h-1zM267 223h1v2h-1zM267 232h1v3h-1zM268 228h1v4h-1zM273 216h1v1h-1zM273 230h1v5h-1zM275 221h1v3h-1zM280 226h1v2h-1zM283 226h1v2h-1zM283 235h1v3h-1zM284 222h1v3h-1zM285 106h1v1h-1zM295 224h1v2h-1zM296 101h1v3h-1zM296 218h1v2h-1zM297 224h1v2h-1zM298 107h1v3h-1zM299 110h1v1h-1zM299 111h1v1h-1zM300 238h1v3h-1zM302 109h1v3h-1zM303 106h1v3h-1zM303 237h1v2h-1zM304 107h1v1h-1zM306 109h1v1h-1zM306 239h1v4h-1zM308 108h1v2h-1zM308 110h1v3h-1zM310 107h1v3h-1zM310 225h1v2h-1zM310 242h1v3h-1zM311 234h1v3h-1zM312 105h1v3h-1zM313 104h1v2h-1zM314 101h1v2h-1zM314 237h1v1h-1zM315 100h1v2h-1zM315 107h1v2h-1zM316 103h1v3h-1zM316 106h1v2h-1zM316 108h1v3h-1zM316 231h1v1h-1zM317 108h1v1h-1zM317 222h1v1h-1zM318 237h1v2h-1zM320 237h1v2h-1zM321 112h1v3h-1zM321 228h1v1h-1zM321 233h1v2h-1zM322 240h1v1h-1zM324 107h1v2h-1zM325 218h1v2h-1zM327 101h1v2h-1zM328 102h1v2h-1zM328 113h1v2h-1zM330 104h1v3h-1zM330 237h1v1h-1zM332 111h1v3h-1zM333 102h1v3h-1zM333 105h1v1h-1zM333 240h1v3h-1zM335 103h1v2h-1zM335 108h1v3h-1zM335 225h1v1h-1zM338 227h1v1h-1zM339 227h1v1h-1zM348 237h1v2h-1zM348 239h1v1h-1zM352 229h1v1h-1zM353 220h1v2h-1zM354 232h1v3h-1zM356 219h1v2h-1zM356 222h1v3h-1zM360 237h1v1h-1zM361 231h1v2h-1zM363 231h1v2h-1zM364 219h1v2h-1zM366 238h1v1h-1zM367 230h1v1h-1zM374 228h1v3h-1zM378 234h1v1h-1zM379 234h1v2h-1zM380 229h1v2h-1zM381 226h1v4h-1zM384 232h1v2h-1zM391 230h1v3h-1zM392 226h1v1h-1zM394 232h1v4h-1zM395 221h1v1h-1zM398 222h1v5h-1zM399 222h1v2h-1zM400 105h1v3h-1zM400 221h1v2h-1zM401 212h1v1h-1zM402 226h1v5h-1zM406 110h1v1h-1zM407 219h1v1h-1zM408 231h1v4h-1zM411 226h1v5h-1zM411 231h1v1h-1zM412 102h1v1h-1zM412 104h1v2h-1zM413 226h1v2h-1zM414 102h1v2h-1zM414 229h1v3h-1zM415 229h1v1h-1zM415 230h1v4h-1zM417 229h1v2h-1zM418 106h1v3h-1zM419 104h1v3h-1zM421 214h1v2h-1zM422 100h1v3h-1zM424 218h1v4h-1zM425 99h1v3h-1zM425 106h1v3h-1zM428 101h1v2h-1zM431 221h1v1h-1zM433 228h1v4h-1zM437 225h1v1h-1zM442 233h1v2h-1zM442 239h1v2h-1zM447 229h1v5h-1zM448 233h1v5h-1zM449 233h1v2h-1zM450 233h1v3h-1zM453 236h1v2h-1zM455 230h1v1h-1zM456 214h1v2h-1zM456 217h1v3h-1zM457 230h1v2h-1zM460 222h1v1h-1zM460 230h1v2h-1zM470 230h1v1h-1zM470 233h1v2h-1zM472 223h1v1h-1zM474 228h1v1h-1zM475 233h1v2h-1zM478 225h1v2h-1zM478 229h1v4h-1zM478 235h1v2h-1zM479 227h1v1h-1zM482 234h1v1h-1zM482 236h1v2h-1zM485 227h1v5h-1zM490 220h1v1h-1zM492 225h1v1h-1zM492 226h1v4h-1zM493 232h1v2h-1zM494 225h1v2h-1zM496 222h1v2h-1zM500 229h1v1h-1zM501 225h1v1h-1zM503 226h1v1h-1zM507 232h1v4h-1zM508 223h1v1h-1zM508 224h1v2h-1zM512 224h1v5h-1zM512 229h1v2h-1zM516 221h1v1h-1zM520 100h1v3h-1zM521 101h1v1h-1zM521 223h1v1h-1zM521 231h1v2h-1zM523 111h1v1h-1zM524 217h1v1h-1zM525 224h1v2h-1zM527 105h1v1h-1zM529 107h1v3h-1zM529 233h1v4h-1zM530 103h1v2h-1zM530 107h1v2h-1zM530 225h1v2h-1zM531 101h1v3h-1zM534 105h1v3h-1zM536 238h1v1h-1zM538 99h1v1h-1zM540 98h1v3h-1zM545 101h1v2h-1zM545 110h1v3h-1zM546 223h1v2h-1zM549 237h1v2h-1zM550 229h1v1h-1zM552 238h1v3h-1zM556 240h1v3h-1zM560 239h1v3h-1zM563 228h1v2h-1zM566 234h1v2h-1zM569 220h1v2h-1zM571 231h1v1h-1zM580 230h1v4h-1zM581 224h1v1h-1zM586 225h1v1h-1zM588 220h1v1h-1zM590 107h1v3h-1zM592 101h1v1h-1zM594 223h1v2h-1zM597 100h1v1h-1zM597 225h1v2h-1zM598 98h1v2h-1zM599 98h1v3h-1zM600 103h1v3h-1zM600 226h1v5h-1zM601 100h1v1h-1zM602 108h1v1h-1zM604 105h1v1h-1zM606 224h1v1h-1zM607 229h1v2h-1zM608 104h1v2h-1zM608 106h1v3h-1zM608 227h1v3h-1zM608 230h1v2h-1zM614 105h1v3h-1zM614 230h1v1h-1zM615 230h1v5h-1zM616 98h1v3h-1zM616 230h1v4h-1zM618 227h1v3h-1zM619 98h1v1h-1zM619 99h1v1h-1zM619 223h1v1h-1zM619 225h1v1h-1zM619 227h1v4h-1zM623 100h1v3h-1zM623 103h1v1h-1zM625 104h1v1h-1zM626 105h1v1h-1zM627 109h1v2h-1zM629 236h1v2h-1zM630 107h1v1h-1zM631 103h1v3h-1zM631 109h1v3h-1zM632 107h1v3h-1zM632 110h1v3h-1zM632 229h1v4h-1zM634 103h1v1h-1zM634 226h1v2h-1zM634 238h1v2h-1zM635 111h1v1h-1zM635 235h1v2h-1zM637 227h1v2h-1zM645 236h1v2h-1zM649 224h1v1h-1zM654 216h1v1h-1zM655 227h1v1h-1zM659 237h1v5h-1zM661 227h1v1h-1zM661 240h1v2h-1zM666 230h1v2h-1zM666 239h1v5h-1zM670 242h1v2h-1zM675 228h1v3h-1zM680 230h1v2h-1zM682 232h1v1h-1zM683 102h1v3h-1zM684 111h1v2h-1zM684 225h1v1h-1zM685 108h1v3h-1zM685 227h1v5h-1zM686 105h1v1h-1zM688 109h1v2h-1zM689 112h1v3h-1zM689 226h1v2h-1zM689 230h1v1h-1zM689 237h1v1h-1zM690 100h1v3h-1zM690 232h1v4h-1zM691 98h1v3h-1zM694 100h1v2h-1zM695 99h1v2h-1zM695 102h1v1h-1zM697 102h1v1h-1zM697 228h1v3h-1zM698 232h1v4h-1zM699 102h1v3h-1zM700 119h1v1h-1zM700 232h1v4h-1zM705 228h1v5h-1zM706 229h1v2h-1zM707 226h1v3h-1zM711 236h1v1h-1zM712 231h1v1h-1zM713 229h1v2h-1zM716 233h1v4h-1zM717 227h1v2h-1zM718 222h1v1h-1zM718 240h1v2h-1zM719 225h1v1h-1zM719 239h1v2h-1zM720 229h1v5h-1zM723 230h1v1h-1zM724 225h1v2h-1zM731 217h1v1h-1zM733 225h1v2h-1zM734 228h1v3h-1zM735 231h1v1h-1zM743 229h1v1h-1zM747 229h1v2h-1zM747 231h1v4h-1zM749 223h1v1h-1zM755 223h1v1h-1zM758 228h1v2h-1zM759 217h1v2h-1zM762 221h1v1h-1zM764 217h1v1h-1zM765 221h1v1h-1zM768 213h1v2h-1zM770 98h1v3h-1zM771 224h1v1h-1zM772 107h1v2h-1zM772 233h1v2h-1zM775 103h1v1h-1zM776 233h1v1h-1zM777 99h1v2h-1zM777 101h1v3h-1zM777 233h1v1h-1zM778 103h1v2h-1zM779 100h1v1h-1zM779 237h1v5h-1zM781 99h1v3h-1zM784 106h1v1h-1zM785 235h1v1h-1zM786 106h1v3h-1zM787 109h1v1h-1zM787 234h1v2h-1zM788 105h1v1h-1zM788 241h1v1h-1zM789 101h1v3h-1zM789 233h1v3h-1zM790 224h1v2h-1zM790 235h1v5h-1zM793 117h1v1h-1zM793 118h1v3h-1zM794 244h1v2h-1zM798 104h1v3h-1zM799 101h1v2h-1zM803 107h1v3h-1zM804 96h1v2h-1zM804 229h1v2h-1zM806 99h1v2h-1zM806 101h1v1h-1zM807 100h1v1h-1zM808 102h1v2h-1zM810 99h1v3h-1zM811 224h1v2h-1zM811 238h1v1h-1zM813 97h1v2h-1zM814 103h1v3h-1zM814 230h1v2h-1zM815 98h1v1h-1zM816 101h1v3h-1zM816 104h1v3h-1zM817 225h1v2h-1zM817 236h1v2h-1zM818 104h1v3h-1zM819 103h1v3h-1zM819 106h1v1h-1zM821 106h1v1h-1zM821 231h1v3h-1zM822 105h1v1h-1zM822 108h1v1h-1zM822 222h1v2h-1zM824 103h1v1h-1zM824 106h1v3h-1zM824 225h1v1h-1zM826 101h1v3h-1zM828 102h1v3h-1zM829 229h1v3h-1zM830 233h1v1h-1zM832 104h1v1h-1zM832 223h1v2h-1zM841 228h1v1h-1zM849 231h1v5h-1z"/><path fill="#c0c0c0" d="M251 226h1v1h-1zM252 101h1v1h-1zM256 228h1v5h-1zM257 100h1v1h-1zM258 239h1v1h-1zM262 103h1v3h-1zM265 103h1v2h-1zM265 108h1v3h-1zM270 100h1v2h-1zM270 102h1v2h-1zM272 103h1v1h-1zM272 104h1v1h-1zM274 102h1v1h-1zM274 234h1v2h-1zM275 101h1v1h-1zM275 104h1v1h-1zM276 102h1v3h-1zM277 99h1v2h-1zM279 108h1v1h-1zM281 104h1v2h-1zM282 99h1v1h-1zM287 104h1v3h-1zM289 222h1v4h-1zM289 226h1v4h-1zM290 103h1v3h-1zM291 102h1v2h-1zM293 101h1v1h-1zM298 233h1v3h-1zM299 105h1v1h-1zM302 112h1v1h-1zM304 105h1v2h-1zM306 102h1v2h-1zM306 110h1v1h-1zM309 102h1v3h-1zM309 238h1v3h-1zM313 102h1v2h-1zM313 233h1v3h-1zM313 237h1v3h-1zM314 108h1v2h-1zM315 102h1v3h-1zM317 223h1v3h-1zM318 112h1v2h-1zM319 105h1v2h-1zM321 101h1v1h-1zM322 112h1v1h-1zM322 231h1v4h-1zM323 108h1v3h-1zM325 102h1v1h-1zM325 239h1v1h-1zM326 236h1v4h-1zM331 121h1v2h-1zM334 101h1v1h-1zM335 102h1v1h-1zM336 101h1v3h-1zM336 104h1v1h-1zM336 105h1v1h-1zM336 232h1v4h-1zM337 103h1v1h-1zM337 109h1v2h-1zM340 107h1v3h-1zM341 110h1v2h-1zM342 105h1v1h-1zM342 237h1v1h-1zM343 101h1v1h-1zM343 102h1v2h-1zM343 107h1v1h-1zM344 99h1v2h-1zM345 105h1v2h-1zM346 105h1v1h-1zM347 122h1v3h-1zM347 125h1v1h-1zM348 106h1v1h-1zM351 108h1v2h-1zM352 102h1v2h-1zM354 105h1v1h-1zM354 106h1v2h-1zM355 98h1v2h-1zM355 100h1v2h-1zM356 100h1v3h-1zM357 101h1v1h-1zM360 105h1v3h-1zM361 102h1v1h-1zM362 96h1v1h-1zM362 97h1v1h-1zM362 98h1v1h-1zM364 106h1v3h-1zM364 109h1v3h-1zM364 221h1v4h-1zM365 109h1v1h-1zM366 97h1v2h-1zM366 99h1v2h-1zM368 103h1v1h-1zM369 96h1v3h-1zM371 97h1v1h-1zM372 237h1v2h-1zM373 97h1v1h-1zM374 100h1v1h-1zM375 108h1v3h-1zM376 100h1v1h-1zM377 98h1v1h-1zM378 235h1v1h-1zM380 100h1v3h-1zM381 103h1v3h-1zM383 112h1v2h-1zM384 102h1v3h-1zM386 103h1v1h-1zM386 104h1v3h-1zM387 101h1v1h-1zM389 101h1v3h-1zM390 104h1v1h-1zM391 100h1v3h-1zM392 233h1v1h-1zM395 106h1v3h-1zM396 112h1v2h-1zM397 231h1v4h-1zM398 104h1v2h-1zM402 101h1v1h-1zM402 106h1v1h-1zM403 229h1v4h-1zM403 233h1v3h-1zM404 102h1v1h-1zM405 102h1v1h-1zM405 226h1v3h-1zM406 103h1v3h-1zM407 104h1v3h-1zM409 210h1v4h-1zM410 118h1v2h-1zM412 101h1v1h-1zM412 216h1v3h-1zM412 219h1v3h-1zM417 104h1v1h-1zM418 225h1v2h-1zM419 107h1v1h-1zM419 108h1v3h-1zM422 107h1v3h-1zM422 232h1v3h-1zM424 102h1v3h-1zM425 105h1v1h-1zM426 99h1v1h-1zM426 233h1v2h-1zM429 110h1v2h-1zM429 112h1v1h-1zM429 222h1v1h-1zM431 106h1v3h-1zM432 101h1v1h-1zM432 104h1v1h-1zM432 108h1v2h-1zM433 99h1v1h-1zM436 99h1v1h-1zM436 106h1v1h-1zM436 235h1v1h-1zM436 236h1v1h-1zM437 99h1v1h-1zM437 100h1v1h-1zM438 105h1v1h-1zM438 107h1v1h-1zM438 108h1v2h-1zM438 226h1v1h-1zM439 102h1v1h-1zM440 98h1v1h-1zM441 102h1v3h-1zM444 101h1v2h-1zM444 103h1v3h-1zM445 102h1v2h-1zM446 103h1v2h-1zM448 104h1v2h-1zM450 107h1v3h-1zM451 104h1v3h-1zM451 108h1v1h-1zM452 109h1v1h-1zM452 238h1v2h-1zM453 102h1v3h-1zM453 106h1v2h-1zM455 110h1v2h-1zM456 105h1v2h-1zM459 109h1v1h-1zM460 102h1v3h-1zM465 102h1v2h-1zM466 114h1v1h-1zM466 115h1v1h-1zM467 114h1v1h-1zM467 115h1v3h-1zM468 114h1v1h-1zM469 101h1v1h-1zM470 106h1v1h-1zM470 107h1v3h-1zM474 99h1v2h-1zM474 234h1v3h-1zM475 103h1v2h-1zM475 105h1v3h-1zM475 237h1v1h-1zM477 102h1v1h-1zM477 103h1v3h-1zM478 105h1v2h-1zM478 107h1v2h-1zM479 107h1v3h-1zM479 110h1v3h-1zM479 113h1v1h-1zM479 229h1v4h-1zM480 102h1v2h-1zM480 231h1v1h-1zM481 99h1v3h-1zM481 102h1v3h-1zM482 106h1v3h-1zM483 108h1v3h-1zM485 232h1v2h-1zM486 97h1v2h-1zM486 99h1v1h-1zM486 237h1v2h-1zM487 106h1v3h-1zM487 109h1v3h-1zM487 112h1v3h-1zM488 106h1v3h-1zM488 109h1v3h-1zM490 112h1v1h-1zM490 113h1v3h-1zM491 102h1v3h-1zM491 105h1v1h-1zM492 104h1v2h-1zM492 106h1v3h-1zM494 102h1v2h-1zM495 233h1v3h-1zM496 99h1v1h-1zM497 234h1v1h-1zM500 98h1v1h-1zM501 100h1v1h-1zM502 99h1v3h-1zM504 230h1v1h-1zM505 99h1v1h-1zM505 229h1v4h-1zM506 102h1v3h-1zM508 230h1v2h-1zM509 107h1v2h-1zM509 230h1v5h-1zM510 99h1v3h-1zM510 102h1v1h-1zM514 229h1v2h-1zM515 100h1v2h-1zM516 98h1v2h-1zM518 100h1v1h-1zM518 102h1v1h-1zM518 103h1v3h-1zM519 112h1v2h-1zM521 99h1v2h-1zM523 112h1v1h-1zM524 101h1v1h-1zM524 105h1v3h-1zM525 98h1v1h-1zM526 226h1v2h-1zM528 104h1v1h-1zM528 105h1v3h-1zM528 110h1v1h-1zM529 104h1v3h-1zM532 109h1v2h-1zM533 107h1v1h-1zM535 102h1v1h-1zM535 235h1v4h-1zM537 104h1v2h-1zM537 106h1v3h-1zM537 240h1v4h-1zM538 103h1v3h-1zM539 101h1v2h-1zM541 105h1v1h-1zM542 104h1v3h-1zM544 103h1v2h-1zM545 106h1v3h-1zM545 109h1v1h-1zM549 97h1v1h-1zM550 98h1v2h-1zM550 100h1v2h-1zM552 112h1v1h-1zM553 100h1v1h-1zM554 100h1v1h-1zM554 101h1v2h-1zM557 102h1v1h-1zM559 103h1v3h-1zM561 100h1v1h-1zM561 104h1v3h-1zM561 227h1v1h-1zM561 228h1v3h-1zM562 101h1v3h-1zM563 107h1v1h-1zM564 103h1v3h-1zM566 236h1v2h-1zM566 238h1v4h-1zM567 110h1v2h-1zM567 112h1v1h-1zM569 101h1v1h-1zM570 98h1v1h-1zM570 99h1v1h-1zM570 100h1v2h-1zM571 107h1v1h-1zM571 109h1v1h-1zM572 114h1v3h-1zM573 235h1v2h-1zM574 107h1v2h-1zM574 109h1v1h-1zM575 104h1v3h-1zM575 229h1v3h-1zM576 97h1v1h-1zM576 222h1v4h-1zM577 96h1v1h-1zM577 97h1v2h-1zM577 235h1v4h-1zM578 97h1v2h-1zM578 99h1v2h-1zM579 99h1v1h-1zM579 100h1v1h-1zM580 97h1v3h-1zM580 100h1v3h-1zM580 221h1v1h-1zM582 100h1v2h-1zM584 96h1v2h-1zM585 100h1v1h-1zM585 105h1v3h-1zM586 100h1v1h-1zM587 101h1v1h-1zM588 104h1v2h-1zM588 107h1v1h-1zM588 108h1v2h-1zM589 99h1v1h-1zM589 101h1v3h-1zM590 234h1v1h-1zM591 228h1v1h-1zM592 100h1v1h-1zM597 231h1v2h-1zM598 101h1v2h-1zM601 104h1v2h-1zM603 101h1v1h-1zM603 110h1v1h-1zM604 104h1v1h-1zM605 101h1v1h-1zM605 103h1v1h-1zM606 112h1v3h-1zM606 117h1v2h-1zM608 109h1v2h-1zM608 217h1v4h-1zM611 113h1v3h-1zM613 107h1v2h-1zM615 102h1v1h-1zM616 106h1v3h-1zM617 227h1v2h-1zM619 97h1v1h-1zM622 105h1v2h-1zM624 105h1v1h-1zM624 106h1v2h-1zM624 108h1v1h-1zM624 112h1v1h-1zM624 236h1v1h-1zM628 108h1v2h-1zM629 102h1v1h-1zM629 103h1v3h-1zM629 231h1v5h-1zM631 112h1v2h-1zM636 102h1v2h-1zM636 104h1v2h-1zM636 234h1v2h-1zM639 106h1v3h-1zM639 115h1v2h-1zM639 226h1v1h-1zM639 232h1v1h-1zM644 102h1v1h-1zM645 113h1v2h-1zM645 225h1v5h-1zM648 102h1v1h-1zM649 102h1v3h-1zM649 240h1v1h-1zM650 111h1v1h-1zM651 103h1v2h-1zM652 225h1v1h-1zM654 98h1v1h-1zM654 99h1v2h-1zM654 101h1v1h-1zM655 235h1v1h-1zM657 101h1v1h-1zM657 102h1v1h-1zM658 100h1v1h-1zM659 109h1v1h-1zM660 103h1v1h-1zM661 98h1v1h-1zM662 101h1v1h-1zM662 102h1v2h-1zM665 96h1v1h-1zM666 99h1v3h-1zM666 232h1v2h-1zM668 100h1v2h-1zM669 104h1v1h-1zM669 238h1v2h-1zM670 107h1v1h-1zM670 111h1v2h-1zM671 103h1v1h-1zM674 111h1v1h-1zM676 100h1v2h-1zM677 96h1v2h-1zM677 230h1v4h-1zM678 104h1v1h-1zM678 105h1v3h-1zM678 230h1v5h-1zM679 99h1v3h-1zM682 102h1v2h-1zM683 100h1v1h-1zM684 107h1v3h-1zM687 104h1v1h-1zM691 103h1v2h-1zM696 104h1v3h-1zM697 99h1v3h-1zM701 101h1v3h-1zM701 104h1v1h-1zM702 109h1v3h-1zM703 102h1v1h-1zM704 109h1v1h-1zM705 101h1v2h-1zM706 118h1v1h-1zM707 120h1v1h-1zM708 108h1v2h-1zM708 110h1v1h-1zM709 97h1v1h-1zM710 106h1v3h-1zM710 239h1v2h-1zM711 101h1v3h-1zM712 100h1v1h-1zM713 109h1v3h-1zM713 112h1v2h-1zM714 100h1v1h-1zM714 101h1v2h-1zM715 108h1v1h-1zM715 109h1v3h-1zM716 101h1v3h-1zM716 104h1v2h-1zM717 106h1v3h-1zM717 109h1v3h-1zM718 116h1v3h-1zM718 119h1v3h-1zM719 102h1v1h-1zM720 105h1v2h-1zM721 107h1v3h-1zM723 98h1v3h-1zM723 103h1v2h-1zM724 102h1v3h-1zM725 99h1v2h-1zM726 101h1v3h-1zM727 230h1v5h-1zM728 100h1v2h-1zM729 229h1v5h-1zM730 101h1v3h-1zM732 99h1v1h-1zM733 104h1v1h-1zM734 102h1v1h-1zM735 101h1v1h-1zM736 98h1v3h-1zM737 98h1v1h-1zM738 100h1v1h-1zM741 105h1v3h-1zM741 108h1v2h-1zM742 99h1v1h-1zM742 102h1v2h-1zM743 103h1v3h-1zM749 98h1v1h-1zM751 109h1v3h-1zM754 102h1v1h-1zM755 104h1v2h-1zM756 97h1v1h-1zM757 108h1v3h-1zM759 100h1v3h-1zM759 219h1v1h-1zM762 222h1v4h-1zM764 97h1v3h-1zM766 109h1v1h-1zM768 96h1v2h-1zM768 98h1v3h-1zM774 98h1v1h-1zM777 106h1v2h-1zM780 100h1v3h-1zM780 111h1v2h-1zM780 237h1v5h-1zM781 106h1v3h-1zM781 241h1v1h-1zM782 100h1v1h-1zM782 108h1v2h-1zM784 245h1v2h-1zM785 100h1v1h-1zM785 104h1v2h-1zM787 105h1v1h-1zM787 229h1v2h-1zM790 103h1v1h-1zM791 102h1v1h-1zM792 112h1v3h-1zM794 112h1v2h-1zM795 110h1v2h-1zM795 112h1v3h-1zM797 100h1v1h-1zM798 115h1v2h-1zM798 240h1v2h-1zM801 99h1v1h-1zM802 235h1v4h-1zM803 110h1v2h-1zM804 103h1v1h-1zM805 104h1v2h-1zM807 99h1v1h-1zM807 101h1v3h-1zM808 106h1v3h-1zM809 101h1v3h-1zM812 99h1v1h-1zM813 96h1v1h-1zM814 106h1v3h-1zM818 103h1v1h-1zM818 107h1v1h-1zM820 108h1v2h-1zM825 103h1v3h-1zM825 234h1v2h-1zM826 98h1v1h-1zM826 108h1v3h-1zM827 111h1v3h-1zM828 99h1v1h-1zM830 107h1v2h-1zM831 102h1v2h-1zM833 104h1v2h-1zM834 109h1v3h-1zM834 235h1v3h-1zM835 102h1v2h-1zM835 233h1v5h-1zM836 232h1v5h-1zM837 101h1v3h-1zM837 104h1v1h-1zM837 105h1v2h-1zM837 232h1v5h-1zM838 104h1v1h-1zM839 105h1v2h-1zM839 108h1v3h-1zM840 234h1v4h-1zM842 106h1v3h-1zM844 113h1v1h-1zM844 114h1v3h-1zM844 120h1v3h-1zM844 217h1v3h-1zM845 100h1v1h-1zM845 102h1v1h-1zM846 119h1v2h-1zM846 222h1v4h-1zM847 106h1v2h-1zM848 103h1v1h-1zM849 114h1v2h-1zM850 100h1v1h-1zM850 101h1v1h-1z"/><path fill="#000000" d="M251 227h1v4h-1zM251 236h1v1h-1zM252 222h1v1h-1zM252 223h1v3h-1zM252 226h1v5h-1zM252 232h1v2h-1zM253 230h1v4h-1zM253 234h1v3h-1zM254 231h1v2h-1zM254 235h1v2h-1zM255 222h1v1h-1zM255 230h1v1h-1zM255 231h1v2h-1zM255 233h1v2h-1zM256 224h1v4h-1zM256 233h1v1h-1zM256 234h1v1h-1zM256 235h1v2h-1zM257 224h1v1h-1zM257 225h1v4h-1zM257 229h1v1h-1zM257 230h1v3h-1zM257 233h1v2h-1zM257 235h1v1h-1zM258 229h1v3h-1zM258 232h1v1h-1zM258 233h1v5h-1zM258 238h1v1h-1zM259 224h1v1h-1zM259 225h1v1h-1zM259 230h1v4h-1zM260 229h1v5h-1zM260 234h1v2h-1zM261 231h1v4h-1zM261 235h1v1h-1zM261 236h1v1h-1zM262 224h1v5h-1zM262 229h1v3h-1zM262 232h1v3h-1zM262 235h1v3h-1zM264 228h1v5h-1zM264 233h1v2h-1zM264 235h1v2h-1zM265 224h1v1h-1zM265 225h1v4h-1zM265 232h1v3h-1zM265 235h1v1h-1zM265 236h1v1h-1zM267 225h1v5h-1zM267 230h1v2h-1zM268 227h1v1h-1zM268 232h1v3h-1zM269 223h1v2h-1zM269 225h1v3h-1zM269 228h1v3h-1zM269 231h1v4h-1zM269 235h1v2h-1zM270 227h1v2h-1zM270 234h1v2h-1zM270 236h1v2h-1zM272 221h1v2h-1zM272 227h1v1h-1zM272 233h1v5h-1zM272 238h1v1h-1zM273 217h1v2h-1zM273 219h1v1h-1zM273 220h1v1h-1zM273 223h1v3h-1zM273 226h1v4h-1zM273 235h1v1h-1zM274 225h1v2h-1zM274 231h1v3h-1zM275 224h1v4h-1zM275 228h1v5h-1zM275 233h1v5h-1zM276 232h1v3h-1zM276 235h1v2h-1zM277 227h1v4h-1zM277 235h1v2h-1zM278 230h1v2h-1zM278 232h1v4h-1zM278 236h1v2h-1zM279 228h1v4h-1zM279 232h1v2h-1zM279 234h1v1h-1zM279 235h1v4h-1zM279 239h1v1h-1zM280 228h1v1h-1zM280 229h1v3h-1zM281 236h1v1h-1zM281 237h1v3h-1zM281 240h1v2h-1zM282 226h1v1h-1zM282 238h1v2h-1zM283 228h1v4h-1zM283 232h1v1h-1zM283 233h1v2h-1zM284 225h1v3h-1zM284 228h1v2h-1zM284 230h1v5h-1zM284 235h1v3h-1zM284 239h1v2h-1zM286 231h1v3h-1zM286 234h1v4h-1zM286 238h1v1h-1zM287 227h1v4h-1zM287 231h1v3h-1zM287 234h1v1h-1zM287 235h1v1h-1zM287 236h1v2h-1zM288 228h1v3h-1zM288 231h1v5h-1zM288 236h1v3h-1zM289 234h1v2h-1zM289 236h1v2h-1zM290 222h1v5h-1zM290 227h1v5h-1zM290 232h1v2h-1zM290 234h1v1h-1zM290 239h1v1h-1zM291 231h1v4h-1zM291 235h1v3h-1zM292 228h1v1h-1zM292 229h1v2h-1zM292 231h1v1h-1zM292 232h1v3h-1zM293 235h1v2h-1zM294 219h1v1h-1zM294 220h1v2h-1zM294 222h1v4h-1zM294 226h1v4h-1zM294 230h1v3h-1zM294 234h1v2h-1zM294 236h1v3h-1zM295 226h1v1h-1zM295 227h1v2h-1zM295 229h1v5h-1zM295 234h1v5h-1zM295 239h1v1h-1zM296 220h1v4h-1zM296 224h1v1h-1zM296 225h1v4h-1zM296 229h1v2h-1zM296 231h1v1h-1zM296 232h1v2h-1zM296 234h1v2h-1zM296 236h1v5h-1zM297 226h1v5h-1zM297 231h1v5h-1zM297 236h1v1h-1zM298 231h1v2h-1zM298 240h1v1h-1zM299 232h1v3h-1zM299 235h1v2h-1zM299 237h1v1h-1zM299 238h1v1h-1zM300 231h1v1h-1zM300 232h1v3h-1zM300 235h1v3h-1zM301 226h1v2h-1zM301 230h1v3h-1zM301 233h1v1h-1zM301 234h1v1h-1zM301 235h1v5h-1zM301 240h1v1h-1zM301 241h1v2h-1zM302 237h1v4h-1zM302 241h1v1h-1zM302 242h1v3h-1zM303 239h1v3h-1zM304 230h1v2h-1zM304 232h1v4h-1zM304 236h1v3h-1zM305 229h1v5h-1zM305 236h1v4h-1zM307 238h1v4h-1zM308 232h1v2h-1zM308 234h1v3h-1zM308 237h1v2h-1zM308 239h1v1h-1zM308 240h1v2h-1zM309 229h1v3h-1zM309 232h1v4h-1zM309 236h1v2h-1zM309 241h1v2h-1zM310 227h1v3h-1zM310 230h1v4h-1zM310 234h1v4h-1zM310 238h1v4h-1zM310 245h1v1h-1zM311 233h1v1h-1zM311 237h1v4h-1zM311 244h1v2h-1zM312 241h1v2h-1zM313 223h1v5h-1zM313 228h1v5h-1zM313 236h1v1h-1zM313 242h1v1h-1zM314 238h1v4h-1zM314 242h1v2h-1zM315 226h1v2h-1zM315 228h1v3h-1zM315 233h1v5h-1zM315 238h1v2h-1zM316 232h1v1h-1zM316 233h1v1h-1zM316 238h1v1h-1zM316 239h1v3h-1zM317 226h1v2h-1zM317 228h1v4h-1zM317 232h1v2h-1zM317 234h1v2h-1zM317 236h1v3h-1zM317 239h1v1h-1zM318 235h1v2h-1zM319 238h1v5h-1zM320 239h1v1h-1zM321 229h1v1h-1zM321 230h1v3h-1zM321 235h1v2h-1zM321 237h1v5h-1zM322 235h1v5h-1zM323 224h1v4h-1zM323 228h1v3h-1zM323 231h1v3h-1zM323 234h1v4h-1zM324 231h1v4h-1zM324 235h1v2h-1zM324 237h1v4h-1zM325 220h1v5h-1zM325 225h1v5h-1zM325 230h1v4h-1zM325 234h1v2h-1zM325 236h1v3h-1zM326 233h1v3h-1zM326 240h1v1h-1zM327 232h1v4h-1zM327 236h1v4h-1zM327 240h1v3h-1zM328 226h1v1h-1zM328 227h1v2h-1zM328 229h1v3h-1zM328 232h1v1h-1zM328 233h1v3h-1zM328 237h1v2h-1zM329 240h1v2h-1zM329 242h1v1h-1zM330 238h1v4h-1zM331 232h1v5h-1zM331 237h1v2h-1zM332 223h1v4h-1zM332 227h1v2h-1zM332 229h1v1h-1zM332 230h1v4h-1zM332 234h1v4h-1zM332 238h1v3h-1zM333 230h1v4h-1zM333 235h1v1h-1zM333 236h1v4h-1zM334 238h1v3h-1zM335 226h1v1h-1zM335 227h1v2h-1zM335 229h1v1h-1zM335 234h1v1h-1zM335 235h1v1h-1zM335 236h1v2h-1zM335 238h1v3h-1zM336 224h1v3h-1zM336 227h1v1h-1zM336 228h1v3h-1zM336 231h1v1h-1zM336 236h1v4h-1zM336 240h1v2h-1zM337 224h1v5h-1zM337 229h1v4h-1zM337 233h1v4h-1zM337 237h1v3h-1zM337 240h1v1h-1zM338 231h1v5h-1zM338 236h1v3h-1zM339 228h1v3h-1zM339 231h1v3h-1zM339 234h1v3h-1zM339 237h1v3h-1zM340 228h1v5h-1zM341 234h1v1h-1zM341 235h1v1h-1zM341 236h1v5h-1zM342 226h1v4h-1zM342 230h1v2h-1zM342 232h1v3h-1zM342 235h1v2h-1zM342 238h1v4h-1zM343 228h1v4h-1zM343 237h1v4h-1zM344 238h1v1h-1zM345 238h1v1h-1zM346 235h1v2h-1zM346 237h1v2h-1zM347 232h1v3h-1zM347 235h1v1h-1zM347 236h1v1h-1zM347 237h1v1h-1zM347 238h1v1h-1zM347 239h1v1h-1zM348 232h1v4h-1zM348 236h1v1h-1zM349 225h1v3h-1zM349 228h1v1h-1zM349 229h1v5h-1zM349 234h1v5h-1zM350 236h1v3h-1zM351 227h1v4h-1zM351 231h1v4h-1zM351 235h1v3h-1zM352 230h1v5h-1zM352 235h1v3h-1zM353 222h1v4h-1zM353 229h1v5h-1zM353 234h1v3h-1zM353 237h1v1h-1zM353 238h1v3h-1zM354 220h1v3h-1zM354 225h1v4h-1zM354 229h1v2h-1zM354 231h1v1h-1zM354 235h1v2h-1zM355 220h1v1h-1zM355 221h1v4h-1zM355 226h1v4h-1zM355 230h1v4h-1zM355 234h1v3h-1zM356 221h1v1h-1zM356 225h1v5h-1zM356 230h1v4h-1zM356 237h1v1h-1zM357 236h1v2h-1zM358 225h1v1h-1zM358 226h1v1h-1zM358 227h1v2h-1zM358 229h1v3h-1zM359 236h1v1h-1zM360 228h1v2h-1zM361 233h1v1h-1zM361 234h1v3h-1zM361 237h1v1h-1zM362 226h1v2h-1zM362 228h1v1h-1zM362 229h1v3h-1zM362 232h1v4h-1zM362 236h1v1h-1zM363 233h1v4h-1zM364 225h1v1h-1zM364 226h1v4h-1zM364 230h1v5h-1zM365 224h1v5h-1zM365 229h1v2h-1zM365 231h1v1h-1zM365 232h1v1h-1zM365 233h1v3h-1zM365 236h1v1h-1zM365 237h1v1h-1zM366 215h1v5h-1zM366 222h1v5h-1zM366 227h1v2h-1zM366 229h1v3h-1zM366 236h1v2h-1zM367 231h1v1h-1zM367 232h1v4h-1zM367 236h1v4h-1zM368 224h1v3h-1zM368 227h1v3h-1zM368 230h1v1h-1zM368 231h1v3h-1zM368 234h1v2h-1zM368 236h1v1h-1zM368 237h1v1h-1zM368 238h1v1h-1zM369 226h1v2h-1zM369 228h1v3h-1zM369 231h1v1h-1zM369 232h1v1h-1zM369 233h1v3h-1zM369 236h1v1h-1zM370 216h1v2h-1zM370 218h1v3h-1zM370 221h1v5h-1zM370 226h1v1h-1zM370 232h1v1h-1zM370 233h1v1h-1zM370 234h1v2h-1zM370 237h1v2h-1zM371 229h1v2h-1zM371 231h1v2h-1zM371 236h1v3h-1zM372 235h1v2h-1zM373 235h1v1h-1zM373 236h1v3h-1zM374 224h1v4h-1zM374 231h1v1h-1zM374 232h1v3h-1zM375 230h1v1h-1zM375 231h1v4h-1zM375 235h1v4h-1zM375 239h1v1h-1zM376 238h1v1h-1zM377 227h1v5h-1zM377 236h1v3h-1zM378 229h1v2h-1zM378 231h1v3h-1zM378 236h1v3h-1zM378 239h1v1h-1zM380 231h1v2h-1zM380 233h1v3h-1zM380 236h1v3h-1zM381 222h1v4h-1zM381 230h1v5h-1zM381 235h1v3h-1zM381 238h1v2h-1zM382 235h1v1h-1zM383 228h1v1h-1zM383 229h1v3h-1zM383 232h1v5h-1zM383 237h1v1h-1zM384 234h1v3h-1zM385 231h1v4h-1zM385 235h1v4h-1zM387 234h1v2h-1zM387 236h1v3h-1zM388 225h1v2h-1zM388 232h1v4h-1zM388 236h1v1h-1zM389 228h1v3h-1zM389 231h1v5h-1zM390 234h1v1h-1zM391 227h1v3h-1zM391 233h1v3h-1zM391 236h1v1h-1zM392 227h1v1h-1zM392 228h1v5h-1zM392 234h1v3h-1zM393 230h1v1h-1zM393 231h1v1h-1zM393 232h1v3h-1zM394 219h1v2h-1zM394 221h1v1h-1zM394 222h1v2h-1zM394 224h1v2h-1zM394 226h1v3h-1zM394 229h1v3h-1zM394 236h1v1h-1zM395 225h1v2h-1zM395 227h1v5h-1zM395 232h1v1h-1zM396 217h1v2h-1zM396 219h1v1h-1zM396 220h1v4h-1zM396 224h1v2h-1zM396 226h1v5h-1zM396 231h1v4h-1zM397 228h1v2h-1zM397 230h1v1h-1zM398 214h1v5h-1zM398 219h1v3h-1zM398 227h1v4h-1zM398 231h1v2h-1zM398 234h1v1h-1zM399 224h1v3h-1zM399 227h1v1h-1zM399 228h1v3h-1zM399 231h1v4h-1zM399 235h1v1h-1zM400 226h1v4h-1zM401 213h1v5h-1zM401 218h1v3h-1zM401 221h1v1h-1zM401 222h1v4h-1zM401 227h1v1h-1zM401 228h1v3h-1zM401 231h1v2h-1zM402 220h1v2h-1zM402 222h1v4h-1zM403 227h1v2h-1zM404 225h1v5h-1zM404 230h1v3h-1zM404 233h1v2h-1zM405 221h1v2h-1zM405 224h1v1h-1zM405 225h1v1h-1zM405 229h1v4h-1zM406 232h1v1h-1zM407 220h1v1h-1zM407 225h1v4h-1zM407 229h1v2h-1zM407 231h1v2h-1zM408 216h1v2h-1zM408 218h1v5h-1zM408 223h1v1h-1zM408 224h1v1h-1zM408 225h1v1h-1zM409 214h1v5h-1zM409 219h1v3h-1zM409 222h1v5h-1zM409 227h1v3h-1zM409 230h1v1h-1zM409 231h1v3h-1zM410 229h1v3h-1zM412 222h1v5h-1zM413 228h1v2h-1zM413 230h1v2h-1zM414 220h1v5h-1zM414 225h1v4h-1zM414 232h1v1h-1zM414 233h1v1h-1zM415 224h1v5h-1zM416 227h1v2h-1zM416 229h1v2h-1zM417 225h1v4h-1zM417 233h1v1h-1zM417 234h1v2h-1zM418 219h1v2h-1zM418 221h1v4h-1zM418 229h1v2h-1zM418 231h1v2h-1zM421 216h1v2h-1zM421 218h1v1h-1zM421 219h1v4h-1zM421 223h1v1h-1zM421 224h1v3h-1zM421 227h1v5h-1zM421 232h1v2h-1zM422 228h1v2h-1zM423 229h1v3h-1zM423 232h1v2h-1zM424 222h1v5h-1zM424 227h1v2h-1zM424 229h1v2h-1zM424 231h1v1h-1zM424 232h1v2h-1zM425 219h1v4h-1zM425 223h1v5h-1zM425 228h1v2h-1zM425 234h1v3h-1zM426 221h1v4h-1zM426 225h1v4h-1zM426 229h1v3h-1zM426 232h1v1h-1zM426 237h1v2h-1zM427 233h1v3h-1zM427 236h1v4h-1zM428 221h1v2h-1zM428 223h1v5h-1zM428 228h1v3h-1zM428 231h1v4h-1zM428 235h1v2h-1zM429 227h1v4h-1zM429 231h1v2h-1zM429 233h1v1h-1zM429 234h1v4h-1zM429 238h1v1h-1zM430 231h1v5h-1zM431 222h1v3h-1zM431 230h1v2h-1zM431 232h1v5h-1zM431 237h1v2h-1zM432 218h1v1h-1zM432 219h1v4h-1zM432 223h1v4h-1zM432 227h1v3h-1zM432 230h1v3h-1zM432 233h1v3h-1zM433 217h1v4h-1zM433 221h1v3h-1zM433 232h1v3h-1zM433 235h1v1h-1zM434 230h1v2h-1zM434 232h1v5h-1zM434 239h1v1h-1zM435 232h1v4h-1zM436 232h1v3h-1zM437 226h1v5h-1zM437 235h1v1h-1zM438 229h1v3h-1zM438 232h1v2h-1zM438 234h1v1h-1zM439 235h1v1h-1zM440 223h1v3h-1zM440 226h1v4h-1zM440 230h1v5h-1zM440 235h1v4h-1zM441 226h1v3h-1zM441 229h1v2h-1zM441 231h1v1h-1zM441 232h1v3h-1zM441 235h1v2h-1zM441 237h1v2h-1zM442 236h1v1h-1zM442 237h1v2h-1zM443 233h1v4h-1zM443 238h1v2h-1zM444 222h1v4h-1zM444 231h1v3h-1zM444 234h1v1h-1zM444 235h1v1h-1zM444 236h1v1h-1zM444 237h1v2h-1zM445 229h1v5h-1zM445 234h1v4h-1zM445 238h1v3h-1zM446 230h1v1h-1zM446 231h1v5h-1zM447 234h1v3h-1zM448 228h1v4h-1zM448 232h1v1h-1zM449 237h1v2h-1zM450 236h1v2h-1zM451 236h1v2h-1zM451 238h1v1h-1zM452 224h1v1h-1zM452 225h1v4h-1zM452 229h1v3h-1zM452 232h1v2h-1zM452 234h1v4h-1zM453 239h1v1h-1zM454 228h1v5h-1zM454 233h1v3h-1zM454 236h1v2h-1zM456 216h1v1h-1zM456 220h1v5h-1zM456 225h1v1h-1zM456 226h1v4h-1zM456 235h1v3h-1zM457 226h1v4h-1zM457 232h1v4h-1zM458 220h1v5h-1zM458 225h1v3h-1zM458 228h1v5h-1zM458 233h1v2h-1zM459 223h1v5h-1zM459 228h1v2h-1zM459 230h1v1h-1zM459 231h1v2h-1zM459 233h1v4h-1zM460 223h1v5h-1zM460 228h1v2h-1zM460 232h1v4h-1zM461 226h1v3h-1zM461 232h1v2h-1zM462 226h1v5h-1zM462 231h1v3h-1zM463 224h1v4h-1zM463 228h1v5h-1zM463 233h1v3h-1zM464 226h1v1h-1zM464 227h1v1h-1zM464 228h1v5h-1zM464 233h1v4h-1zM464 237h1v2h-1zM465 225h1v4h-1zM465 234h1v1h-1zM465 235h1v3h-1zM466 236h1v1h-1zM467 236h1v3h-1zM467 239h1v1h-1zM468 235h1v3h-1zM469 228h1v4h-1zM469 232h1v3h-1zM469 235h1v4h-1zM470 232h1v1h-1zM470 235h1v1h-1zM470 236h1v4h-1zM471 238h1v2h-1zM471 240h1v4h-1zM471 244h1v1h-1zM472 224h1v5h-1zM472 229h1v1h-1zM472 230h1v1h-1zM472 231h1v2h-1zM472 233h1v3h-1zM472 236h1v1h-1zM472 238h1v3h-1zM473 235h1v5h-1zM473 240h1v2h-1zM474 231h1v2h-1zM474 233h1v1h-1zM474 237h1v3h-1zM474 240h1v1h-1zM475 230h1v1h-1zM475 231h1v1h-1zM475 232h1v1h-1zM475 235h1v2h-1zM475 238h1v3h-1zM475 241h1v1h-1zM475 242h1v2h-1zM476 239h1v2h-1zM477 229h1v2h-1zM477 232h1v5h-1zM477 237h1v4h-1zM478 227h1v2h-1zM478 233h1v2h-1zM478 240h1v3h-1zM479 228h1v1h-1zM479 238h1v4h-1zM480 232h1v4h-1zM480 236h1v5h-1zM481 231h1v4h-1zM481 238h1v1h-1zM481 239h1v1h-1zM482 235h1v1h-1zM482 238h1v3h-1zM483 224h1v5h-1zM483 229h1v1h-1zM483 230h1v1h-1zM483 231h1v5h-1zM483 236h1v1h-1zM483 237h1v3h-1zM484 225h1v5h-1zM484 230h1v4h-1zM484 234h1v3h-1zM485 236h1v3h-1zM486 229h1v3h-1zM486 232h1v5h-1zM487 234h1v3h-1zM487 237h1v1h-1zM488 230h1v1h-1zM488 235h1v3h-1zM489 227h1v3h-1zM489 230h1v4h-1zM489 234h1v1h-1zM489 235h1v2h-1zM490 221h1v5h-1zM490 226h1v2h-1zM490 228h1v4h-1zM490 232h1v2h-1zM490 234h1v5h-1zM491 236h1v2h-1zM492 230h1v1h-1zM493 228h1v4h-1zM493 234h1v2h-1zM494 227h1v1h-1zM494 228h1v3h-1zM495 221h1v2h-1zM495 223h1v3h-1zM495 226h1v4h-1zM495 230h1v3h-1zM495 236h1v1h-1zM496 224h1v1h-1zM496 225h1v3h-1zM496 228h1v2h-1zM496 235h1v1h-1zM497 235h1v3h-1zM498 218h1v3h-1zM498 222h1v4h-1zM498 226h1v4h-1zM498 230h1v3h-1zM498 233h1v1h-1zM499 223h1v1h-1zM499 228h1v3h-1zM499 231h1v3h-1zM499 234h1v3h-1zM499 237h1v1h-1zM500 230h1v1h-1zM500 231h1v3h-1zM501 215h1v1h-1zM501 216h1v4h-1zM501 220h1v2h-1zM501 226h1v2h-1zM501 228h1v4h-1zM501 232h1v3h-1zM502 223h1v1h-1zM502 224h1v1h-1zM502 228h1v2h-1zM502 230h1v4h-1zM503 227h1v2h-1zM503 229h1v2h-1zM503 231h1v4h-1zM503 235h1v2h-1zM503 237h1v3h-1zM504 221h1v4h-1zM504 225h1v4h-1zM504 235h1v1h-1zM505 219h1v4h-1zM505 223h1v3h-1zM505 226h1v3h-1zM505 233h1v2h-1zM506 217h1v5h-1zM506 222h1v5h-1zM506 227h1v3h-1zM506 230h1v1h-1zM506 231h1v4h-1zM507 220h1v1h-1zM507 221h1v4h-1zM507 225h1v2h-1zM507 227h1v1h-1zM508 226h1v3h-1zM508 232h1v2h-1zM509 220h1v1h-1zM509 221h1v2h-1zM509 228h1v2h-1zM509 235h1v3h-1zM510 230h1v3h-1zM510 233h1v3h-1zM511 226h1v3h-1zM511 229h1v3h-1zM512 221h1v1h-1zM512 222h1v2h-1zM512 231h1v5h-1zM513 224h1v3h-1zM513 227h1v1h-1zM513 229h1v2h-1zM513 231h1v3h-1zM513 234h1v2h-1zM514 219h1v3h-1zM514 222h1v3h-1zM514 225h1v4h-1zM514 231h1v4h-1zM515 232h1v2h-1zM516 222h1v5h-1zM516 227h1v3h-1zM516 230h1v4h-1zM516 234h1v2h-1zM517 222h1v2h-1zM517 227h1v4h-1zM517 231h1v1h-1zM517 232h1v1h-1zM517 233h1v2h-1zM518 213h1v3h-1zM518 216h1v2h-1zM518 218h1v1h-1zM518 219h1v3h-1zM518 222h1v2h-1zM518 226h1v1h-1zM518 227h1v5h-1zM518 232h1v1h-1zM518 233h1v3h-1zM519 214h1v5h-1zM519 222h1v4h-1zM519 226h1v1h-1zM519 227h1v2h-1zM519 229h1v2h-1zM520 231h1v2h-1zM521 224h1v1h-1zM521 225h1v4h-1zM521 229h1v2h-1zM521 233h1v2h-1zM522 231h1v1h-1zM523 219h1v4h-1zM523 223h1v4h-1zM523 227h1v1h-1zM523 228h1v4h-1zM523 232h1v1h-1zM524 218h1v1h-1zM524 226h1v1h-1zM524 228h1v3h-1zM524 231h1v2h-1zM525 219h1v5h-1zM525 226h1v2h-1zM526 228h1v5h-1zM527 221h1v2h-1zM527 223h1v2h-1zM527 225h1v2h-1zM527 227h1v2h-1zM527 229h1v3h-1zM527 232h1v2h-1zM528 213h1v1h-1zM528 214h1v3h-1zM528 222h1v1h-1zM528 223h1v1h-1zM528 224h1v4h-1zM528 228h1v4h-1zM528 233h1v1h-1zM530 227h1v3h-1zM530 230h1v1h-1zM530 232h1v2h-1zM531 225h1v5h-1zM531 230h1v5h-1zM532 227h1v3h-1zM532 230h1v5h-1zM533 232h1v4h-1zM533 236h1v2h-1zM534 230h1v2h-1zM534 232h1v5h-1zM534 237h1v2h-1zM535 225h1v3h-1zM535 228h1v2h-1zM535 230h1v5h-1zM535 239h1v3h-1zM536 239h1v3h-1zM537 233h1v1h-1zM537 234h1v2h-1zM537 236h1v4h-1zM538 232h1v5h-1zM538 237h1v4h-1zM539 237h1v4h-1zM539 241h1v4h-1zM540 235h1v4h-1zM540 239h1v4h-1zM540 243h1v3h-1zM541 230h1v1h-1zM541 231h1v4h-1zM541 235h1v5h-1zM541 245h1v1h-1zM542 236h1v1h-1zM542 237h1v4h-1zM542 241h1v2h-1zM542 243h1v3h-1zM543 233h1v3h-1zM543 236h1v5h-1zM543 241h1v2h-1zM543 243h1v1h-1zM544 228h1v4h-1zM544 232h1v1h-1zM544 233h1v5h-1zM544 238h1v4h-1zM544 242h1v2h-1zM545 242h1v1h-1zM546 226h1v2h-1zM546 228h1v2h-1zM546 230h1v2h-1zM546 232h1v5h-1zM546 242h1v1h-1zM547 239h1v1h-1zM547 240h1v5h-1zM548 229h1v1h-1zM548 230h1v2h-1zM548 240h1v4h-1zM549 234h1v2h-1zM549 236h1v1h-1zM550 230h1v4h-1zM550 237h1v5h-1zM550 242h1v3h-1zM550 245h1v3h-1zM551 231h1v4h-1zM551 235h1v1h-1zM551 236h1v4h-1zM551 240h1v4h-1zM552 222h1v3h-1zM552 227h1v3h-1zM552 230h1v3h-1zM552 237h1v1h-1zM552 241h1v2h-1zM552 243h1v3h-1zM552 246h1v1h-1zM553 233h1v4h-1zM553 244h1v1h-1zM554 241h1v1h-1zM554 242h1v3h-1zM555 233h1v3h-1zM555 236h1v5h-1zM555 241h1v2h-1zM555 243h1v1h-1zM555 244h1v1h-1zM555 245h1v1h-1zM556 236h1v4h-1zM556 245h1v2h-1zM557 228h1v5h-1zM557 233h1v1h-1zM557 234h1v4h-1zM557 238h1v1h-1zM557 241h1v2h-1zM558 244h1v2h-1zM560 244h1v3h-1zM561 231h1v4h-1zM561 235h1v4h-1zM561 239h1v4h-1zM561 243h1v2h-1zM562 228h1v1h-1zM562 229h1v5h-1zM562 234h1v2h-1zM562 236h1v3h-1zM562 239h1v3h-1zM562 242h1v4h-1zM563 230h1v5h-1zM563 235h1v2h-1zM563 237h1v4h-1zM563 242h1v2h-1zM564 231h1v3h-1zM564 234h1v1h-1zM564 235h1v5h-1zM564 240h1v4h-1zM565 227h1v4h-1zM565 231h1v3h-1zM565 234h1v4h-1zM565 238h1v1h-1zM565 239h1v3h-1zM566 242h1v3h-1zM567 234h1v2h-1zM567 236h1v5h-1zM567 241h1v3h-1zM568 237h1v3h-1zM569 222h1v2h-1zM569 224h1v3h-1zM569 227h1v3h-1zM569 230h1v2h-1zM569 234h1v4h-1zM569 238h1v5h-1zM569 243h1v1h-1zM570 241h1v4h-1zM571 232h1v3h-1zM571 235h1v4h-1zM571 239h1v4h-1zM572 230h1v4h-1zM572 234h1v2h-1zM572 236h1v3h-1zM573 231h1v2h-1zM573 233h1v2h-1zM574 218h1v3h-1zM574 226h1v1h-1zM574 231h1v3h-1zM574 234h1v1h-1zM574 235h1v3h-1zM575 232h1v2h-1zM575 234h1v3h-1zM575 237h1v1h-1zM575 238h1v3h-1zM576 219h1v3h-1zM576 226h1v4h-1zM576 230h1v2h-1zM576 232h1v5h-1zM576 239h1v1h-1zM577 228h1v2h-1zM577 230h1v5h-1zM578 226h1v2h-1zM578 228h1v2h-1zM578 230h1v2h-1zM578 236h1v3h-1zM579 232h1v2h-1zM579 234h1v1h-1zM579 235h1v2h-1zM579 237h1v2h-1zM580 222h1v2h-1zM580 224h1v3h-1zM580 234h1v5h-1zM580 239h1v2h-1zM581 225h1v3h-1zM581 228h1v2h-1zM581 230h1v2h-1zM581 232h1v4h-1zM582 223h1v5h-1zM582 228h1v1h-1zM582 229h1v1h-1zM582 230h1v1h-1zM582 231h1v5h-1zM582 236h1v4h-1zM583 233h1v2h-1zM583 236h1v1h-1zM584 221h1v3h-1zM584 224h1v1h-1zM584 225h1v5h-1zM584 230h1v2h-1zM586 226h1v4h-1zM586 230h1v4h-1zM586 234h1v2h-1zM587 227h1v5h-1zM587 232h1v2h-1zM588 222h1v5h-1zM588 227h1v4h-1zM588 233h1v2h-1zM589 233h1v1h-1zM589 234h1v2h-1zM589 236h1v1h-1zM590 224h1v5h-1zM590 229h1v1h-1zM590 230h1v4h-1zM590 235h1v1h-1zM591 229h1v3h-1zM591 232h1v3h-1zM592 234h1v3h-1zM593 224h1v1h-1zM593 225h1v4h-1zM593 229h1v1h-1zM593 230h1v1h-1zM593 231h1v5h-1zM593 236h1v1h-1zM594 225h1v2h-1zM594 231h1v1h-1zM595 227h1v2h-1zM595 229h1v5h-1zM595 234h1v4h-1zM596 228h1v1h-1zM596 229h1v4h-1zM596 233h1v1h-1zM596 234h1v2h-1zM598 221h1v5h-1zM598 226h1v3h-1zM598 229h1v2h-1zM599 232h1v2h-1zM600 221h1v5h-1zM600 231h1v4h-1zM601 220h1v4h-1zM601 224h1v1h-1zM601 228h1v5h-1zM602 222h1v3h-1zM602 225h1v1h-1zM602 226h1v3h-1zM602 229h1v2h-1zM602 231h1v3h-1zM603 214h1v4h-1zM603 218h1v3h-1zM603 221h1v2h-1zM603 223h1v2h-1zM603 225h1v5h-1zM603 230h1v4h-1zM603 234h1v1h-1zM604 228h1v4h-1zM604 232h1v2h-1zM605 224h1v4h-1zM605 228h1v3h-1zM606 225h1v2h-1zM606 227h1v5h-1zM606 232h1v1h-1zM606 233h1v1h-1zM607 218h1v1h-1zM607 219h1v4h-1zM607 223h1v5h-1zM607 228h1v1h-1zM607 234h1v1h-1zM607 235h1v2h-1zM608 221h1v2h-1zM608 223h1v4h-1zM609 225h1v5h-1zM609 230h1v1h-1zM609 231h1v1h-1zM609 232h1v4h-1zM610 226h1v1h-1zM610 227h1v3h-1zM610 230h1v3h-1zM611 225h1v4h-1zM611 229h1v3h-1zM612 222h1v2h-1zM612 224h1v2h-1zM612 226h1v5h-1zM612 232h1v2h-1zM613 230h1v3h-1zM613 233h1v2h-1zM614 231h1v1h-1zM614 232h1v4h-1zM614 236h1v2h-1zM615 220h1v5h-1zM615 228h1v2h-1zM616 223h1v1h-1zM616 226h1v2h-1zM616 228h1v2h-1zM616 234h1v2h-1zM616 236h1v1h-1zM617 231h1v1h-1zM617 232h1v2h-1zM618 230h1v1h-1zM618 231h1v3h-1zM618 234h1v3h-1zM619 224h1v1h-1zM619 226h1v1h-1zM619 233h1v2h-1zM619 235h1v3h-1zM619 238h1v2h-1zM620 237h1v1h-1zM620 238h1v2h-1zM620 240h1v1h-1zM621 226h1v3h-1zM621 229h1v4h-1zM621 233h1v3h-1zM621 236h1v2h-1zM622 230h1v2h-1zM622 232h1v4h-1zM622 239h1v1h-1zM623 225h1v5h-1zM623 230h1v4h-1zM623 239h1v1h-1zM624 228h1v3h-1zM624 231h1v4h-1zM624 235h1v1h-1zM624 237h1v1h-1zM625 231h1v2h-1zM625 233h1v1h-1zM625 237h1v2h-1zM626 234h1v1h-1zM626 235h1v4h-1zM626 239h1v2h-1zM627 236h1v1h-1zM628 226h1v1h-1zM628 227h1v5h-1zM628 232h1v3h-1zM628 235h1v3h-1zM628 238h1v2h-1zM629 228h1v3h-1zM630 234h1v4h-1zM631 235h1v3h-1zM631 238h1v1h-1zM632 233h1v4h-1zM632 237h1v3h-1zM633 231h1v5h-1zM633 236h1v1h-1zM633 237h1v2h-1zM634 228h1v2h-1zM634 230h1v1h-1zM634 231h1v1h-1zM634 232h1v1h-1zM634 234h1v3h-1zM634 237h1v1h-1zM635 228h1v5h-1zM635 233h1v2h-1zM636 223h1v5h-1zM636 228h1v2h-1zM636 230h1v3h-1zM636 236h1v3h-1zM637 229h1v4h-1zM637 233h1v4h-1zM637 237h1v1h-1zM638 226h1v1h-1zM638 227h1v3h-1zM638 230h1v3h-1zM638 233h1v1h-1zM638 234h1v1h-1zM638 235h1v3h-1zM638 238h1v4h-1zM639 221h1v5h-1zM639 227h1v5h-1zM639 233h1v3h-1zM639 236h1v4h-1zM640 234h1v4h-1zM640 238h1v1h-1zM640 239h1v2h-1zM641 229h1v2h-1zM641 231h1v2h-1zM641 233h1v1h-1zM641 234h1v4h-1zM641 238h1v2h-1zM641 240h1v2h-1zM642 221h1v3h-1zM642 224h1v4h-1zM642 228h1v2h-1zM642 230h1v1h-1zM642 231h1v1h-1zM642 232h1v4h-1zM642 236h1v1h-1zM643 235h1v1h-1zM645 230h1v5h-1zM645 235h1v1h-1zM645 238h1v1h-1zM646 223h1v2h-1zM646 225h1v4h-1zM646 229h1v1h-1zM646 230h1v4h-1zM646 234h1v1h-1zM647 233h1v5h-1zM648 227h1v1h-1zM648 228h1v3h-1zM648 231h1v3h-1zM648 234h1v2h-1zM649 225h1v3h-1zM649 228h1v2h-1zM649 233h1v4h-1zM649 237h1v3h-1zM649 241h1v1h-1zM650 217h1v5h-1zM650 222h1v1h-1zM650 223h1v1h-1zM650 224h1v5h-1zM650 229h1v3h-1zM650 232h1v3h-1zM651 222h1v3h-1zM651 225h1v4h-1zM651 229h1v1h-1zM651 230h1v4h-1zM651 234h1v1h-1zM651 235h1v1h-1zM651 236h1v1h-1zM652 226h1v3h-1zM652 229h1v5h-1zM652 234h1v5h-1zM653 226h1v5h-1zM654 217h1v4h-1zM654 221h1v5h-1zM654 232h1v4h-1zM654 236h1v3h-1zM654 239h1v2h-1zM655 228h1v2h-1zM655 230h1v5h-1zM656 237h1v2h-1zM656 239h1v1h-1zM656 240h1v1h-1zM657 228h1v4h-1zM657 232h1v2h-1zM657 234h1v5h-1zM657 239h1v3h-1zM659 242h1v1h-1zM660 228h1v2h-1zM660 230h1v2h-1zM660 232h1v4h-1zM660 236h1v2h-1zM660 238h1v5h-1zM661 228h1v4h-1zM661 232h1v2h-1zM661 234h1v4h-1zM661 238h1v2h-1zM661 242h1v1h-1zM661 243h1v1h-1zM662 229h1v1h-1zM662 234h1v4h-1zM662 240h1v5h-1zM663 224h1v5h-1zM663 229h1v3h-1zM663 232h1v2h-1zM663 234h1v2h-1zM663 236h1v2h-1zM663 238h1v2h-1zM663 240h1v4h-1zM664 223h1v4h-1zM664 227h1v4h-1zM664 231h1v5h-1zM664 236h1v3h-1zM664 239h1v3h-1zM664 242h1v1h-1zM665 228h1v4h-1zM665 232h1v3h-1zM665 235h1v4h-1zM665 240h1v2h-1zM665 242h1v2h-1zM665 244h1v2h-1zM666 234h1v1h-1zM667 235h1v4h-1zM667 239h1v3h-1zM667 242h1v2h-1zM668 236h1v5h-1zM668 241h1v2h-1zM668 243h1v4h-1zM669 224h1v4h-1zM669 229h1v4h-1zM669 235h1v3h-1zM669 240h1v4h-1zM669 244h1v2h-1zM671 239h1v5h-1zM671 244h1v1h-1zM672 231h1v1h-1zM672 232h1v2h-1zM672 234h1v4h-1zM672 238h1v1h-1zM672 239h1v2h-1zM672 241h1v1h-1zM673 238h1v5h-1zM673 243h1v2h-1zM674 229h1v4h-1zM674 233h1v5h-1zM674 243h1v1h-1zM675 231h1v5h-1zM675 236h1v2h-1zM675 238h1v4h-1zM676 233h1v5h-1zM676 238h1v1h-1zM677 223h1v4h-1zM677 227h1v3h-1zM677 234h1v2h-1zM677 236h1v4h-1zM677 240h1v2h-1zM678 228h1v2h-1zM678 240h1v1h-1zM679 232h1v1h-1zM680 232h1v1h-1zM680 233h1v1h-1zM680 234h1v2h-1zM681 227h1v3h-1zM681 230h1v2h-1zM681 232h1v2h-1zM681 234h1v4h-1zM681 238h1v4h-1zM682 233h1v5h-1zM683 232h1v5h-1zM683 237h1v1h-1zM683 238h1v1h-1zM684 226h1v1h-1zM684 227h1v2h-1zM684 232h1v2h-1zM684 234h1v3h-1zM684 237h1v3h-1zM684 240h1v1h-1zM685 232h1v2h-1zM685 234h1v1h-1zM685 235h1v1h-1zM685 236h1v3h-1zM686 230h1v4h-1zM686 234h1v4h-1zM686 238h1v1h-1zM687 227h1v1h-1zM687 228h1v4h-1zM687 232h1v5h-1zM687 237h1v1h-1zM688 217h1v1h-1zM688 218h1v5h-1zM688 224h1v2h-1zM688 226h1v4h-1zM688 234h1v1h-1zM689 228h1v2h-1zM689 231h1v3h-1zM689 234h1v3h-1zM690 226h1v5h-1zM690 231h1v1h-1zM690 236h1v1h-1zM690 237h1v2h-1zM691 216h1v1h-1zM691 217h1v1h-1zM691 218h1v4h-1zM691 222h1v2h-1zM691 224h1v4h-1zM691 228h1v3h-1zM691 231h1v2h-1zM691 233h1v1h-1zM691 234h1v1h-1zM692 222h1v2h-1zM692 224h1v1h-1zM692 225h1v2h-1zM692 227h1v5h-1zM692 232h1v4h-1zM693 223h1v5h-1zM693 228h1v1h-1zM693 229h1v5h-1zM693 234h1v2h-1zM694 224h1v2h-1zM694 226h1v5h-1zM694 231h1v2h-1zM694 233h1v3h-1zM695 226h1v4h-1zM695 230h1v4h-1zM695 234h1v1h-1zM695 235h1v3h-1zM696 221h1v2h-1zM696 223h1v4h-1zM696 227h1v3h-1zM696 230h1v4h-1zM696 234h1v4h-1zM697 231h1v1h-1zM698 236h1v2h-1zM699 231h1v5h-1zM699 236h1v4h-1zM700 220h1v5h-1zM700 225h1v4h-1zM700 229h1v3h-1zM701 232h1v2h-1zM701 234h1v2h-1zM702 220h1v2h-1zM702 222h1v1h-1zM702 226h1v2h-1zM702 228h1v4h-1zM702 232h1v2h-1zM702 234h1v4h-1zM703 226h1v5h-1zM703 231h1v4h-1zM704 219h1v2h-1zM704 221h1v3h-1zM704 224h1v1h-1zM704 227h1v4h-1zM704 231h1v1h-1zM704 232h1v1h-1zM704 233h1v3h-1zM705 221h1v5h-1zM705 226h1v2h-1zM705 233h1v1h-1zM706 221h1v4h-1zM706 225h1v4h-1zM706 231h1v5h-1zM707 222h1v4h-1zM707 229h1v5h-1zM707 234h1v1h-1zM707 235h1v2h-1zM708 226h1v3h-1zM708 229h1v2h-1zM708 231h1v5h-1zM709 231h1v3h-1zM709 234h1v1h-1zM709 235h1v1h-1zM710 237h1v2h-1zM711 228h1v1h-1zM711 229h1v2h-1zM711 231h1v2h-1zM711 233h1v3h-1zM712 232h1v3h-1zM712 235h1v2h-1zM712 237h1v2h-1zM713 231h1v4h-1zM713 235h1v3h-1zM714 227h1v5h-1zM714 232h1v3h-1zM715 230h1v4h-1zM715 234h1v4h-1zM716 226h1v5h-1zM716 231h1v2h-1zM716 237h1v1h-1zM716 238h1v3h-1zM717 224h1v1h-1zM717 226h1v1h-1zM717 229h1v5h-1zM717 237h1v4h-1zM718 223h1v5h-1zM718 228h1v5h-1zM718 233h1v3h-1zM718 236h1v4h-1zM719 226h1v3h-1zM719 229h1v5h-1zM719 237h1v2h-1zM720 220h1v5h-1zM720 225h1v4h-1zM720 234h1v2h-1zM720 236h1v2h-1zM721 225h1v4h-1zM721 230h1v1h-1zM721 231h1v4h-1zM721 235h1v1h-1zM721 236h1v4h-1zM722 230h1v3h-1zM722 233h1v2h-1zM722 235h1v2h-1zM724 223h1v2h-1zM724 227h1v3h-1zM724 230h1v2h-1zM724 232h1v2h-1zM724 234h1v1h-1zM724 235h1v1h-1zM725 229h1v2h-1zM725 231h1v4h-1zM725 235h1v2h-1zM726 225h1v3h-1zM726 228h1v1h-1zM726 229h1v2h-1zM726 231h1v2h-1zM726 233h1v1h-1zM726 234h1v1h-1zM726 235h1v1h-1zM727 227h1v1h-1zM727 228h1v1h-1zM728 230h1v2h-1zM730 219h1v5h-1zM730 224h1v5h-1zM730 229h1v1h-1zM731 221h1v3h-1zM731 224h1v5h-1zM731 229h1v3h-1zM732 222h1v2h-1zM732 224h1v5h-1zM732 229h1v1h-1zM732 230h1v2h-1zM733 227h1v2h-1zM733 229h1v2h-1zM734 220h1v5h-1zM735 222h1v1h-1zM735 223h1v2h-1zM735 225h1v4h-1zM736 226h1v3h-1zM736 229h1v1h-1zM736 230h1v1h-1zM736 231h1v1h-1zM738 221h1v3h-1zM738 224h1v2h-1zM738 226h1v3h-1zM738 229h1v3h-1zM738 232h1v3h-1zM739 220h1v3h-1zM739 223h1v4h-1zM739 227h1v1h-1zM739 228h1v2h-1zM739 231h1v2h-1zM740 222h1v1h-1zM740 223h1v5h-1zM740 231h1v2h-1zM740 233h1v2h-1zM741 227h1v5h-1zM741 232h1v1h-1zM742 223h1v4h-1zM742 227h1v3h-1zM742 230h1v3h-1zM743 225h1v2h-1zM743 227h1v2h-1zM743 233h1v2h-1zM744 226h1v4h-1zM744 230h1v3h-1zM744 233h1v1h-1zM745 226h1v4h-1zM745 230h1v5h-1zM746 221h1v5h-1zM746 229h1v2h-1zM748 222h1v2h-1zM748 224h1v4h-1zM748 228h1v3h-1zM748 231h1v2h-1zM748 233h1v1h-1zM749 224h1v3h-1zM749 229h1v5h-1zM750 227h1v4h-1zM751 222h1v4h-1zM751 226h1v3h-1zM751 229h1v4h-1zM751 233h1v2h-1zM752 231h1v2h-1zM752 233h1v2h-1zM753 217h1v5h-1zM753 222h1v1h-1zM753 223h1v3h-1zM753 226h1v3h-1zM753 229h1v2h-1zM753 231h1v1h-1zM754 231h1v2h-1zM755 213h1v5h-1zM755 224h1v2h-1zM755 226h1v4h-1zM755 230h1v3h-1zM756 210h1v1h-1zM756 211h1v4h-1zM756 215h1v3h-1zM756 218h1v5h-1zM756 223h1v3h-1zM756 226h1v4h-1zM756 230h1v1h-1zM757 221h1v5h-1zM757 227h1v5h-1zM757 232h1v1h-1zM758 230h1v3h-1zM759 220h1v1h-1zM759 221h1v5h-1zM759 228h1v3h-1zM759 231h1v3h-1zM761 230h1v1h-1zM762 227h1v1h-1zM762 228h1v1h-1zM762 229h1v3h-1zM762 232h1v2h-1zM763 230h1v4h-1zM763 234h1v2h-1zM763 236h1v1h-1zM764 226h1v4h-1zM764 230h1v5h-1zM764 235h1v1h-1zM765 222h1v1h-1zM765 223h1v3h-1zM765 226h1v1h-1zM765 227h1v3h-1zM765 230h1v2h-1zM765 232h1v2h-1zM766 217h1v3h-1zM766 220h1v5h-1zM766 225h1v3h-1zM766 228h1v4h-1zM766 232h1v1h-1zM767 226h1v5h-1zM767 231h1v5h-1zM767 236h1v1h-1zM768 215h1v5h-1zM768 220h1v1h-1zM768 221h1v2h-1zM768 229h1v5h-1zM768 234h1v1h-1zM769 230h1v2h-1zM770 223h1v4h-1zM770 227h1v1h-1zM770 228h1v2h-1zM770 230h1v4h-1zM770 234h1v1h-1zM770 235h1v1h-1zM771 225h1v4h-1zM771 229h1v2h-1zM771 231h1v2h-1zM771 233h1v3h-1zM771 236h1v1h-1zM772 235h1v1h-1zM773 227h1v1h-1zM773 228h1v4h-1zM773 232h1v4h-1zM774 233h1v5h-1zM774 238h1v4h-1zM775 232h1v3h-1zM775 235h1v3h-1zM775 238h1v2h-1zM776 234h1v2h-1zM776 236h1v1h-1zM776 237h1v2h-1zM776 239h1v3h-1zM777 236h1v5h-1zM777 241h1v2h-1zM777 243h1v1h-1zM778 236h1v5h-1zM778 241h1v2h-1zM779 242h1v3h-1zM780 232h1v3h-1zM780 235h1v2h-1zM780 242h1v2h-1zM780 244h1v2h-1zM781 232h1v4h-1zM781 236h1v5h-1zM781 242h1v3h-1zM781 245h1v2h-1zM782 232h1v3h-1zM782 235h1v4h-1zM782 239h1v4h-1zM782 243h1v4h-1zM783 244h1v2h-1zM784 234h1v4h-1zM784 238h1v5h-1zM784 243h1v2h-1zM785 236h1v3h-1zM785 239h1v1h-1zM785 240h1v4h-1zM786 241h1v3h-1zM787 231h1v3h-1zM787 236h1v2h-1zM787 238h1v1h-1zM787 239h1v3h-1zM789 225h1v4h-1zM789 230h1v3h-1zM789 236h1v1h-1zM789 237h1v3h-1zM789 240h1v3h-1zM790 226h1v4h-1zM790 234h1v1h-1zM790 240h1v3h-1zM791 240h1v4h-1zM792 243h1v1h-1zM792 244h1v2h-1zM793 234h1v3h-1zM793 241h1v3h-1zM794 222h1v3h-1zM794 225h1v5h-1zM794 230h1v4h-1zM794 235h1v4h-1zM794 239h1v5h-1zM795 235h1v3h-1zM795 238h1v1h-1zM795 239h1v3h-1zM796 236h1v5h-1zM796 241h1v3h-1zM797 229h1v5h-1zM797 234h1v5h-1zM797 239h1v4h-1zM797 243h1v2h-1zM798 232h1v1h-1zM798 233h1v1h-1zM799 240h1v1h-1zM800 225h1v5h-1zM800 230h1v2h-1zM800 232h1v4h-1zM800 236h1v5h-1zM800 241h1v1h-1zM800 242h1v2h-1zM801 231h1v2h-1zM801 233h1v4h-1zM801 237h1v2h-1zM802 232h1v3h-1zM802 240h1v1h-1zM802 241h1v1h-1zM803 230h1v2h-1zM803 236h1v5h-1zM804 232h1v2h-1zM804 234h1v3h-1zM804 237h1v2h-1zM805 237h1v4h-1zM805 241h1v2h-1zM806 232h1v2h-1zM806 234h1v3h-1zM806 237h1v3h-1zM806 240h1v1h-1zM807 235h1v3h-1zM807 238h1v4h-1zM808 226h1v4h-1zM808 232h1v1h-1zM808 233h1v5h-1zM808 238h1v1h-1zM808 239h1v3h-1zM810 231h1v3h-1zM810 234h1v4h-1zM810 238h1v3h-1zM810 241h1v1h-1zM811 226h1v4h-1zM811 230h1v2h-1zM811 232h1v3h-1zM811 235h1v3h-1zM811 239h1v1h-1zM811 240h1v2h-1zM812 230h1v4h-1zM812 234h1v5h-1zM812 239h1v4h-1zM814 232h1v1h-1zM814 233h1v5h-1zM814 238h1v2h-1zM816 227h1v1h-1zM816 228h1v1h-1zM816 229h1v2h-1zM816 231h1v1h-1zM816 232h1v4h-1zM816 236h1v1h-1zM816 237h1v4h-1zM817 227h1v4h-1zM817 231h1v5h-1zM817 238h1v2h-1zM818 232h1v4h-1zM819 226h1v3h-1zM819 231h1v2h-1zM819 233h1v4h-1zM820 230h1v5h-1zM820 235h1v5h-1zM821 224h1v5h-1zM821 229h1v2h-1zM821 234h1v1h-1zM821 235h1v3h-1zM822 224h1v2h-1zM822 226h1v4h-1zM822 235h1v1h-1zM822 236h1v1h-1zM823 234h1v4h-1zM824 226h1v4h-1zM824 230h1v2h-1zM824 232h1v4h-1zM824 236h1v1h-1zM825 216h1v2h-1zM825 218h1v5h-1zM825 223h1v2h-1zM825 227h1v5h-1zM825 232h1v2h-1zM826 228h1v2h-1zM826 230h1v1h-1zM826 231h1v2h-1zM826 233h1v3h-1zM827 224h1v5h-1zM827 229h1v3h-1zM827 232h1v1h-1zM827 233h1v3h-1zM828 224h1v4h-1zM828 229h1v1h-1zM828 230h1v2h-1zM828 232h1v2h-1zM828 234h1v3h-1zM829 228h1v1h-1zM829 232h1v4h-1zM829 236h1v1h-1zM830 228h1v2h-1zM830 234h1v1h-1zM830 235h1v1h-1zM830 236h1v2h-1zM831 222h1v3h-1zM831 226h1v5h-1zM831 231h1v4h-1zM831 236h1v3h-1zM832 225h1v4h-1zM832 229h1v2h-1zM832 231h1v1h-1zM832 232h1v3h-1zM832 235h1v3h-1zM833 223h1v3h-1zM833 226h1v3h-1zM833 229h1v2h-1zM833 233h1v3h-1zM834 223h1v2h-1zM834 225h1v1h-1zM834 226h1v5h-1zM834 232h1v3h-1zM835 223h1v3h-1zM835 226h1v1h-1zM835 227h1v5h-1zM835 232h1v1h-1zM836 225h1v1h-1zM836 226h1v5h-1zM836 231h1v1h-1zM836 237h1v1h-1zM838 231h1v4h-1zM838 235h1v1h-1zM839 225h1v3h-1zM839 233h1v3h-1zM840 226h1v3h-1zM840 229h1v4h-1zM841 224h1v4h-1zM841 229h1v3h-1zM841 235h1v1h-1zM842 233h1v1h-1zM843 219h1v3h-1zM843 222h1v4h-1zM843 226h1v1h-1zM843 227h1v3h-1zM843 230h1v4h-1zM843 234h1v4h-1zM844 220h1v4h-1zM844 227h1v3h-1zM844 230h1v5h-1zM845 234h1v2h-1zM846 226h1v1h-1zM846 227h1v2h-1zM846 229h1v3h-1zM846 232h1v4h-1zM846 236h1v1h-1zM847 228h1v1h-1zM847 229h1v5h-1zM847 234h1v2h-1zM848 232h1v3h-1zM848 235h1v3h-1zM849 229h1v2h-1zM849 236h1v1h-1zM850 222h1v1h-1zM850 223h1v3h-1zM850 226h1v5h-1zM850 231h1v5h-1zM850 236h1v3h-1zM850 239h1v1h-1z"/><path fill="#ffffff" d="M251 392h1v1h-1zM252 391h1v2h-1zM253 391h1v2h-1zM254 392h1v1h-1zM255 391h1v2h-1zM256 390h1v3h-1zM257 391h1v2h-1zM258 391h1v2h-1zM259 391h1v2h-1zM260 391h1v2h-1zM261 391h1v2h-1zM262 392h1v1h-1zM263 391h1v2h-1zM264 392h1v1h-1zM265 392h1v1h-1zM266 391h1v2h-1zM267 389h1v4h-1zM268 389h1v4h-1zM269 392h1v1h-1zM270 391h1v2h-1zM271 391h1v2h-1zM272 390h1v3h-1zM273 391h1v2h-1zM274 391h1v2h-1zM275 391h1v2h-1zM276 391h1v2h-1zM277 392h1v1h-1zM278 391h1v2h-1zM279 391h1v2h-1zM280 391h1v2h-1zM281 392h1v1h-1zM282 391h1v2h-1zM283 392h1v1h-1zM284 391h1v2h-1zM285 392h1v1h-1zM286 391h1v2h-1zM287 391h1v2h-1zM288 391h1v2h-1zM289 392h1v1h-1zM290 391h1v2h-1zM291 391h1v2h-1zM292 391h1v2h-1zM293 391h1v2h-1zM294 391h1v2h-1zM295 390h1v3h-1zM296 391h1v2h-1zM297 391h1v2h-1zM298 390h1v3h-1zM299 391h1v2h-1zM300 391h1v2h-1zM301 391h1v2h-1zM302 391h1v2h-1zM303 391h1v2h-1zM304 391h1v2h-1zM305 391h1v2h-1zM306 390h1v3h-1zM307 391h1v2h-1zM308 391h1v2h-1zM309 391h1v2h-1zM310 390h1v3h-1zM311 391h1v2h-1zM312 391h1v2h-1zM313 391h1v2h-1zM314 392h1v1h-1zM315 391h1v2h-1zM316 390h1v3h-1zM317 392h1v1h-1zM318 391h1v2h-1zM319 391h1v2h-1zM320 391h1v2h-1zM321 392h1v1h-1zM322 391h1v2h-1zM323 392h1v1h-1zM324 391h1v2h-1zM325 391h1v2h-1zM326 391h1v2h-1zM327 391h1v2h-1zM328 391h1v2h-1zM329 390h1v3h-1zM330 391h1v2h-1zM331 390h1v3h-1zM332 391h1v2h-1zM333 391h1v2h-1zM334 391h1v2h-1zM335 391h1v2h-1zM336 391h1v2h-1zM337 391h1v2h-1zM338 390h1v3h-1zM339 392h1v1h-1zM340 391h1v2h-1zM341 391h1v2h-1zM342 390h1v3h-1zM343 391h1v2h-1zM344 392h1v1h-1zM345 391h1v2h-1zM346 391h1v2h-1zM347 392h1v1h-1zM348 391h1v2h-1zM349 391h1v2h-1zM350 391h1v2h-1zM351 391h1v2h-1zM352 391h1v2h-1zM353 390h1v3h-1zM354 391h1v2h-1zM355 392h1v1h-1zM356 391h1v2h-1zM357 391h1v2h-1zM358 391h1v2h-1zM359 391h1v2h-1zM360 391h1v2h-1zM361 391h1v2h-1zM362 391h1v2h-1zM363 391h1v2h-1zM364 392h1v1h-1zM365 391h1v2h-1zM366 391h1v2h-1zM367 392h1v1h-1zM368 390h1v3h-1zM369 391h1v2h-1zM370 391h1v2h-1zM371 391h1v2h-1zM372 391h1v2h-1zM373 389h1v4h-1zM374 391h1v2h-1zM375 391h1v2h-1zM376 391h1v2h-1zM377 391h1v2h-1zM378 391h1v2h-1zM379 389h1v4h-1zM380 391h1v2h-1zM381 391h1v2h-1zM382 391h1v2h-1zM383 391h1v2h-1zM384 391h1v2h-1zM385 391h1v2h-1zM386 391h1v2h-1zM387 390h1v3h-1zM388 390h1v3h-1zM389 391h1v2h-1zM390 391h1v2h-1zM391 391h1v2h-1zM392 390h1v3h-1zM393 391h1v2h-1zM394 392h1v1h-1zM395 391h1v2h-1zM396 391h1v2h-1zM397 392h1v1h-1zM398 391h1v2h-1zM399 392h1v1h-1zM400 392h1v1h-1zM401 392h1v1h-1zM402 391h1v2h-1zM403 391h1v2h-1zM404 391h1v2h-1zM405 391h1v2h-1zM406 391h1v2h-1zM407 391h1v2h-1zM408 391h1v2h-1zM409 391h1v2h-1zM410 391h1v2h-1zM411 391h1v2h-1zM412 392h1v1h-1zM413 391h1v2h-1zM414 391h1v2h-1zM415 391h1v2h-1zM416 391h1v2h-1zM417 391h1v2h-1zM418 391h1v2h-1zM419 391h1v2h-1zM420 391h1v2h-1zM421 389h1v4h-1zM422 389h1v4h-1zM423 391h1v2h-1zM424 391h1v2h-1zM425 391h1v2h-1zM426 390h1v3h-1zM427 391h1v2h-1zM428 391h1v2h-1zM429 391h1v2h-1zM430 390h1v3h-1zM431 391h1v2h-1zM432 391h1v2h-1zM433 391h1v2h-1zM434 391h1v2h-1zM435 391h1v2h-1zM436 391h1v2h-1zM437 391h1v2h-1zM438 391h1v2h-1zM439 391h1v2h-1zM440 391h1v2h-1zM441 391h1v2h-1zM442 390h1v3h-1zM443 391h1v2h-1zM444 391h1v2h-1zM445 390h1v3h-1zM446 391h1v2h-1zM447 391h1v2h-1zM448 391h1v2h-1zM449 391h1v2h-1zM450 392h1v1h-1zM451 392h1v1h-1zM452 391h1v2h-1zM453 392h1v1h-1zM454 390h1v3h-1zM455 391h1v2h-1zM456 391h1v2h-1zM457 391h1v2h-1zM458 390h1v3h-1zM459 391h1v2h-1zM460 391h1v2h-1zM461 391h1v2h-1zM462 391h1v2h-1zM463 389h1v4h-1zM464 391h1v2h-1zM465 391h1v2h-1zM466 391h1v2h-1zM467 391h1v2h-1zM468 391h1v2h-1zM469 390h1v3h-1zM470 392h1v1h-1zM471 389h1v4h-1zM472 391h1v2h-1zM473 391h1v2h-1zM474 392h1v1h-1zM475 391h1v2h-1zM476 391h1v2h-1zM477 391h1v2h-1zM478 391h1v2h-1zM479 390h1v3h-1zM480 391h1v2h-1zM481 392h1v1h-1zM482 390h1v3h-1zM483 391h1v2h-1zM484 391h1v2h-1zM485 391h1v2h-1zM486 391h1v2h-1zM487 391h1v2h-1zM488 391h1v2h-1zM489 391h1v2h-1zM490 389h1v4h-1zM491 391h1v2h-1zM492 390h1v3h-1zM493 391h1v2h-1zM494 392h1v1h-1zM495 391h1v2h-1zM496 391h1v2h-1zM497 391h1v2h-1zM498 389h1v4h-1zM499 391h1v2h-1zM500 392h1v1h-1zM501 390h1v3h-1zM502 391h1v2h-1zM503 391h1v2h-1zM504 391h1v2h-1zM505 391h1v2h-1zM506 391h1v2h-1zM507 391h1v2h-1zM508 390h1v3h-1zM509 391h1v2h-1zM510 391h1v2h-1zM511 391h1v2h-1zM512 391h1v2h-1zM513 390h1v3h-1zM514 391h1v2h-1zM515 391h1v2h-1zM516 392h1v1h-1zM517 392h1v1h-1zM518 391h1v2h-1zM519 390h1v3h-1zM520 392h1v1h-1zM521 392h1v1h-1zM522 390h1v3h-1zM523 391h1v2h-1zM524 391h1v2h-1zM525 392h1v1h-1zM526 391h1v2h-1zM527 390h1v3h-1zM528 392h1v1h-1zM529 391h1v2h-1zM530 391h1v2h-1zM531 391h1v2h-1zM532 389h1v4h-1zM533 391h1v2h-1zM534 391h1v2h-1zM535 391h1v2h-1zM536 391h1v2h-1zM537 391h1v2h-1zM538 392h1v1h-1zM539 391h1v2h-1zM540 391h1v2h-1zM541 391h1v2h-1zM542 392h1v1h-1zM543 391h1v2h-1zM544 392h1v1h-1zM545 391h1v2h-1zM546 392h1v1h-1zM547 390h1v3h-1zM548 391h1v2h-1zM549 391h1v2h-1zM550 391h1v2h-1zM551 391h1v2h-1zM552 391h1v2h-1zM553 391h1v2h-1zM554 391h1v2h-1zM555 391h1v2h-1zM556 391h1v2h-1zM557 391h1v2h-1zM558 391h1v2h-1zM559 391h1v2h-1zM560 391h1v2h-1zM561 391h1v2h-1zM562 392h1v1h-1zM563 391h1v2h-1zM564 391h1v2h-1zM565 392h1v1h-1zM566 392h1v1h-1zM567 391h1v2h-1zM568 391h1v2h-1zM569 392h1v1h-1zM570 391h1v2h-1zM571 390h1v3h-1zM572 391h1v2h-1zM573 391h1v2h-1zM574 391h1v2h-1zM575 391h1v2h-1zM576 391h1v2h-1zM577 390h1v3h-1zM578 392h1v1h-1zM579 391h1v2h-1zM580 391h1v2h-1zM581 391h1v2h-1zM582 392h1v1h-1zM583 391h1v2h-1zM584 391h1v2h-1zM585 391h1v2h-1zM586 391h1v2h-1zM587 391h1v2h-1zM588 391h1v2h-1zM589 390h1v3h-1zM590 391h1v2h-1zM591 392h1v1h-1zM592 391h1v2h-1zM593 392h1v1h-1zM594 390h1v3h-1zM595 391h1v2h-1zM596 391h1v2h-1zM597 392h1v1h-1zM598 391h1v2h-1zM599 391h1v2h-1zM600 391h1v2h-1zM601 391h1v2h-1zM602 392h1v1h-1zM603 391h1v2h-1zM604 391h1v2h-1zM605 391h1v2h-1zM606 392h1v1h-1zM607 392h1v1h-1zM608 391h1v2h-1zM609 391h1v2h-1zM610 391h1v2h-1zM611 390h1v3h-1zM612 391h1v2h-1zM613 391h1v2h-1zM614 391h1v2h-1zM615 392h1v1h-1zM616 391h1v2h-1zM617 391h1v2h-1zM618 391h1v2h-1zM619 391h1v2h-1zM620 390h1v3h-1zM621 391h1v2h-1zM622 392h1v1h-1zM623 391h1v2h-1zM624 389h1v4h-1zM625 391h1v2h-1zM626 391h1v2h-1zM627 391h1v2h-1zM628 391h1v2h-1zM629 391h1v2h-1zM630 392h1v1h-1zM631 389h1v4h-1zM632 391h1v2h-1zM633 391h1v2h-1zM634 391h1v2h-1zM635 391h1v2h-1zM636 391h1v2h-1zM637 391h1v2h-1zM638 391h1v2h-1zM639 389h1v4h-1zM640 391h1v2h-1zM641 391h1v2h-1zM642 391h1v2h-1zM643 390h1v3h-1zM644 391h1v2h-1zM645 391h1v2h-1zM646 391h1v2h-1zM647 391h1v2h-1zM648 391h1v2h-1zM649 391h1v2h-1zM650 391h1v2h-1zM651 392h1v1h-1zM652 392h1v1h-1zM653 391h1v2h-1zM654 391h1v2h-1zM655 390h1v3h-1zM656 391h1v2h-1zM657 390h1v3h-1zM658 391h1v2h-1zM659 392h1v1h-1zM660 391h1v2h-1zM661 391h1v2h-1zM662 390h1v3h-1zM663 391h1v2h-1zM664 391h1v2h-1zM665 391h1v2h-1zM666 391h1v2h-1zM667 391h1v2h-1zM668 391h1v2h-1zM669 391h1v2h-1zM670 392h1v1h-1zM671 391h1v2h-1zM672 392h1v1h-1zM673 391h1v2h-1zM674 391h1v2h-1zM675 391h1v2h-1zM676 391h1v2h-1zM677 391h1v2h-1zM678 391h1v2h-1zM679 391h1v2h-1zM680 391h1v2h-1zM681 390h1v3h-1zM682 391h1v2h-1zM683 390h1v3h-1zM684 390h1v3h-1zM685 390h1v3h-1zM686 390h1v3h-1zM687 391h1v2h-1zM688 391h1v2h-1zM689 391h1v2h-1zM690 391h1v2h-1zM691 391h1v2h-1zM692 389h1v4h-1zM693 391h1v2h-1zM694 390h1v3h-1zM695 390h1v3h-1zM696 391h1v2h-1zM697 391h1v2h-1zM698 392h1v1h-1zM699 391h1v2h-1zM700 391h1v2h-1zM701 391h1v2h-1zM702 391h1v2h-1zM703 391h1v2h-1zM704 391h1v2h-1zM705 391h1v2h-1zM706 392h1v1h-1zM707 391h1v2h-1zM708 391h1v2h-1zM709 391h1v2h-1zM710 390h1v3h-1zM711 391h1v2h-1zM712 391h1v2h-1zM713 391h1v2h-1zM714 391h1v2h-1zM715 391h1v2h-1zM716 391h1v2h-1zM717 392h1v1h-1zM718 392h1v1h-1zM719 391h1v2h-1zM720 391h1v2h-1zM721 390h1v3h-1zM722 392h1v1h-1zM723 391h1v2h-1zM724 392h1v1h-1zM725 391h1v2h-1zM726 391h1v2h-1zM727 391h1v2h-1zM728 392h1v1h-1zM729 391h1v2h-1zM730 390h1v3h-1zM731 390h1v3h-1zM732 391h1v2h-1zM733 391h1v2h-1zM734 391h1v2h-1zM735 391h1v2h-1zM736 391h1v2h-1zM737 391h1v2h-1zM738 391h1v2h-1zM739 391h1v2h-1zM740 391h1v2h-1zM741 391h1v2h-1zM742 391h1v2h-1zM743 391h1v2h-1zM744 392h1v1h-1zM745 391h1v2h-1zM746 391h1v2h-1zM747 392h1v1h-1zM748 391h1v2h-1zM749 390h1v3h-1zM750 392h1v1h-1zM751 391h1v2h-1zM752 391h1v2h-1zM753 391h1v2h-1zM754 391h1v2h-1zM755 391h1v2h-1zM756 391h1v2h-1zM757 391h1v2h-1zM758 390h1v3h-1zM759 391h1v2h-1zM760 392h1v1h-1zM761 389h1v4h-1zM762 390h1v3h-1zM763 392h1v1h-1zM764 391h1v2h-1zM765 391h1v2h-1zM766 391h1v2h-1zM767 390h1v3h-1zM768 391h1v2h-1zM769 391h1v2h-1zM770 391h1v2h-1zM771 391h1v2h-1zM772 390h1v3h-1zM773 391h1v2h-1zM774 391h1v2h-1zM775 391h1v2h-1zM776 391h1v2h-1zM777 391h1v2h-1zM778 392h1v1h-1zM779 392h1v1h-1zM780 391h1v2h-1zM781 391h1v2h-1zM782 391h1v2h-1zM783 391h1v2h-1zM784 391h1v2h-1zM785 391h1v2h-1zM786 391h1v2h-1zM787 391h1v2h-1zM788 391h1v2h-1zM789 391h1v2h-1zM790 390h1v3h-1zM791 392h1v1h-1zM792 391h1v2h-1zM793 391h1v2h-1zM794 390h1v3h-1zM795 392h1v1h-1zM796 391h1v2h-1zM797 391h1v2h-1zM798 391h1v2h-1zM799 391h1v2h-1zM800 391h1v2h-1zM801 391h1v2h-1zM802 391h1v2h-1zM803 391h1v2h-1zM804 391h1v2h-1zM805 391h1v2h-1zM806 389h1v4h-1zM807 392h1v1h-1zM808 391h1v2h-1zM809 391h1v2h-1zM810 390h1v3h-1zM811 391h1v2h-1zM812 391h1v2h-1zM813 391h1v2h-1zM814 391h1v2h-1zM815 392h1v1h-1zM816 391h1v2h-1zM817 392h1v1h-1zM818 390h1v3h-1zM819 391h1v2h-1zM820 391h1v2h-1zM821 391h1v2h-1zM822 391h1v2h-1zM823 391h1v2h-1zM824 391h1v2h-1zM825 390h1v3h-1zM826 391h1v2h-1zM827 391h1v2h-1zM828 391h1v2h-1zM829 391h1v2h-1zM830 392h1v1h-1zM831 391h1v2h-1zM832 391h1v2h-1zM833 391h1v2h-1zM834 391h1v2h-1zM835 389h1v4h-1zM836 392h1v1h-1zM837 391h1v2h-1zM838 390h1v3h-1zM839 391h1v2h-1zM840 392h1v1h-1zM841 391h1v2h-1zM842 391h1v2h-1zM843 391h1v2h-1zM844 391h1v2h-1zM845 391h1v2h-1zM846 391h1v2h-1zM847 391h1v2h-1zM848 391h1v2h-1zM849 391h1v2h-1zM850 391h1v2h-1z"/><path fill="#000080" d="M252 105h1v6h-1zM257 97h1v2h-1zM259 93h1v1h-1zM259 101h1v1h-1zM260 93h1v1h-1zM260 100h1v1h-1zM261 93h1v1h-1zM261 100h1v3h-1zM262 93h1v1h-1zM262 106h1v3h-1zM266 98h1v1h-1zM269 93h1v1h-1zM270 93h1v1h-1zM271 93h1v1h-1zM272 93h1v2h-1zM274 106h1v3h-1zM278 104h1v3h-1zM279 109h1v3h-1zM280 100h1v3h-1zM284 93h1v2h-1zM285 93h1v2h-1zM286 93h1v3h-1zM287 93h1v1h-1zM287 113h1v3h-1zM288 93h1v1h-1zM298 93h1v4h-1zM299 93h1v4h-1zM312 93h1v3h-1zM319 93h1v1h-1zM320 93h1v2h-1zM321 93h1v1h-1zM322 93h1v1h-1zM323 93h1v2h-1zM329 93h1v4h-1zM330 93h1v3h-1zM331 93h1v3h-1zM332 93h1v5h-1zM333 93h1v3h-1zM337 106h1v3h-1zM338 101h1v1h-1zM338 102h1v1h-1zM339 101h1v1h-1zM339 102h1v1h-1zM340 100h1v5h-1zM340 110h1v2h-1zM343 104h1v3h-1zM345 107h1v2h-1zM346 99h1v6h-1zM346 106h1v3h-1zM347 93h1v3h-1zM347 116h1v6h-1zM348 93h1v1h-1zM348 103h1v3h-1zM349 93h1v1h-1zM349 116h1v1h-1zM350 93h1v1h-1zM351 105h1v3h-1zM351 110h1v3h-1zM352 104h1v3h-1zM353 93h1v4h-1zM354 93h1v3h-1zM355 102h1v3h-1zM357 100h1v1h-1zM357 102h1v2h-1zM357 104h1v2h-1zM358 105h1v3h-1zM359 105h1v2h-1zM360 108h1v1h-1zM363 93h1v1h-1zM363 98h1v9h-1zM363 107h1v3h-1zM367 97h1v2h-1zM370 101h1v1h-1zM370 102h1v3h-1zM371 101h1v1h-1zM371 102h1v3h-1zM372 93h1v1h-1zM373 93h1v1h-1zM374 93h1v3h-1zM380 93h1v2h-1zM381 93h1v3h-1zM382 93h1v4h-1zM383 93h1v3h-1zM384 99h1v3h-1zM386 93h1v2h-1zM386 101h1v2h-1zM387 93h1v1h-1zM387 102h1v4h-1zM389 104h1v1h-1zM390 101h1v3h-1zM390 105h1v1h-1zM391 93h1v1h-1zM393 100h1v2h-1zM394 100h1v2h-1zM397 98h1v3h-1zM398 102h1v2h-1zM400 93h1v2h-1zM401 93h1v2h-1zM402 107h1v3h-1zM416 93h1v3h-1zM417 93h1v2h-1zM438 93h1v4h-1zM439 93h1v4h-1zM442 102h1v2h-1zM443 100h1v1h-1zM446 101h1v2h-1zM447 110h1v2h-1zM448 93h1v1h-1zM449 93h1v1h-1zM450 93h1v2h-1zM450 105h1v2h-1zM451 107h1v1h-1zM452 107h1v2h-1zM453 101h1v1h-1zM454 101h1v3h-1zM455 101h1v3h-1zM455 107h1v3h-1zM456 97h1v8h-1zM456 107h1v1h-1zM457 98h1v1h-1zM459 99h1v10h-1zM460 105h1v3h-1zM461 101h1v4h-1zM462 106h1v1h-1zM463 107h1v1h-1zM463 108h1v2h-1zM464 101h1v1h-1zM464 102h1v2h-1zM464 104h1v1h-1zM465 99h1v3h-1zM466 93h1v5h-1zM466 116h1v1h-1zM467 93h1v3h-1zM467 105h1v5h-1zM467 110h1v3h-1zM468 93h1v5h-1zM468 104h1v10h-1zM468 115h1v2h-1zM468 117h1v1h-1zM468 118h1v3h-1zM469 93h1v5h-1zM469 102h1v2h-1zM470 110h1v1h-1zM471 100h1v8h-1zM471 112h1v1h-1zM473 99h1v3h-1zM475 97h1v4h-1zM476 93h1v4h-1zM476 110h1v1h-1zM477 106h1v3h-1zM478 96h1v9h-1zM479 99h1v8h-1zM480 98h1v4h-1zM480 105h1v1h-1zM483 100h1v6h-1zM484 99h1v5h-1zM485 100h1v2h-1zM486 100h1v3h-1zM487 104h1v2h-1zM489 93h1v3h-1zM489 111h1v3h-1zM489 116h1v3h-1zM490 93h1v4h-1zM490 103h1v7h-1zM490 110h1v2h-1zM491 100h1v2h-1zM492 96h1v8h-1zM493 99h1v9h-1zM493 109h1v2h-1zM493 111h1v1h-1zM494 97h1v3h-1zM495 100h1v3h-1zM496 101h1v3h-1zM496 104h1v3h-1zM498 101h1v2h-1zM499 93h1v2h-1zM500 93h1v1h-1zM501 93h1v1h-1zM501 104h1v1h-1zM501 105h1v3h-1zM508 99h1v1h-1zM512 93h1v3h-1zM513 93h1v3h-1zM526 93h1v3h-1zM527 93h1v3h-1zM528 93h1v3h-1zM529 93h1v3h-1zM530 93h1v3h-1zM544 93h1v1h-1zM545 93h1v2h-1zM546 93h1v1h-1zM547 93h1v3h-1zM547 108h1v3h-1zM548 102h1v1h-1zM551 100h1v3h-1zM553 102h1v3h-1zM555 93h1v3h-1zM556 93h1v1h-1zM557 93h1v3h-1zM560 97h1v2h-1zM564 93h1v2h-1zM565 93h1v3h-1zM566 93h1v2h-1zM567 93h1v1h-1zM569 98h1v2h-1zM570 102h1v3h-1zM571 100h1v7h-1zM571 108h1v1h-1zM572 101h1v8h-1zM572 117h1v3h-1zM573 107h1v2h-1zM573 109h1v2h-1zM573 111h1v3h-1zM574 105h1v2h-1zM576 96h1v1h-1zM576 98h1v1h-1zM577 99h1v3h-1zM577 102h1v2h-1zM581 97h1v1h-1zM581 98h1v1h-1zM581 99h1v2h-1zM583 104h1v2h-1zM584 99h1v1h-1zM585 101h1v2h-1zM586 99h1v1h-1zM586 102h1v2h-1zM587 100h1v1h-1zM587 102h1v2h-1zM588 106h1v1h-1zM589 100h1v1h-1zM590 93h1v3h-1zM591 93h1v2h-1zM592 93h1v2h-1zM593 93h1v3h-1zM604 93h1v2h-1zM605 93h1v2h-1zM606 93h1v3h-1zM607 93h1v2h-1zM608 93h1v4h-1zM611 93h1v5h-1zM624 93h1v2h-1zM625 93h1v3h-1zM626 93h1v3h-1zM627 93h1v2h-1zM628 93h1v3h-1zM638 93h1v2h-1zM639 93h1v3h-1zM640 93h1v3h-1zM644 103h1v2h-1zM649 93h1v1h-1zM650 93h1v2h-1zM651 93h1v2h-1zM652 93h1v3h-1zM653 103h1v3h-1zM660 100h1v3h-1zM668 93h1v2h-1zM669 93h1v3h-1zM670 93h1v3h-1zM671 93h1v2h-1zM671 101h1v2h-1zM671 104h1v1h-1zM673 101h1v3h-1zM675 105h1v3h-1zM675 108h1v1h-1zM684 93h1v1h-1zM685 93h1v2h-1zM688 93h1v2h-1zM696 93h1v4h-1zM700 110h1v9h-1zM702 102h1v4h-1zM703 99h1v3h-1zM703 103h1v2h-1zM704 93h1v4h-1zM704 110h1v1h-1zM705 93h1v2h-1zM705 103h1v2h-1zM706 93h1v3h-1zM706 113h1v3h-1zM707 93h1v2h-1zM707 110h1v10h-1zM707 121h1v2h-1zM707 123h1v1h-1zM708 99h1v9h-1zM708 111h1v1h-1zM709 98h1v3h-1zM710 93h1v2h-1zM711 93h1v1h-1zM711 98h1v2h-1zM711 100h1v1h-1zM711 104h1v2h-1zM712 93h1v2h-1zM712 99h1v1h-1zM713 114h1v3h-1zM715 93h1v1h-1zM715 112h1v3h-1zM716 93h1v2h-1zM716 106h1v2h-1zM716 108h1v2h-1zM717 93h1v1h-1zM717 99h1v7h-1zM717 112h1v3h-1zM718 93h1v2h-1zM718 103h1v8h-1zM718 111h1v2h-1zM719 99h1v3h-1zM719 103h1v1h-1zM719 104h1v3h-1zM720 111h1v9h-1zM724 98h1v2h-1zM725 93h1v1h-1zM726 93h1v2h-1zM727 93h1v1h-1zM730 100h1v1h-1zM740 100h1v1h-1zM741 93h1v1h-1zM741 103h1v2h-1zM742 93h1v2h-1zM743 93h1v1h-1zM743 106h1v2h-1zM747 100h1v2h-1zM750 100h1v3h-1zM754 103h1v3h-1zM755 98h1v3h-1zM757 106h1v2h-1zM759 93h1v1h-1zM760 93h1v3h-1zM762 96h1v2h-1zM763 98h1v3h-1zM763 101h1v8h-1zM764 100h1v3h-1zM773 93h1v3h-1zM774 93h1v1h-1zM775 93h1v3h-1zM776 93h1v3h-1zM791 93h1v1h-1zM792 93h1v2h-1zM793 93h1v3h-1zM794 93h1v2h-1zM795 93h1v1h-1zM802 93h1v2h-1zM803 93h1v2h-1zM817 93h1v3h-1zM830 98h1v9h-1zM832 93h1v3h-1zM834 97h1v9h-1zM836 99h1v10h-1zM836 112h1v3h-1zM836 115h1v3h-1zM838 102h1v1h-1zM838 103h1v1h-1zM839 97h1v8h-1zM840 107h1v4h-1zM841 102h1v2h-1zM841 104h1v3h-1zM841 107h1v1h-1zM842 100h1v5h-1zM843 101h1v3h-1zM844 103h1v10h-1zM844 117h1v3h-1zM846 117h1v1h-1zM846 118h1v1h-1zM847 93h1v1h-1zM847 103h1v3h-1zM847 108h1v1h-1zM848 93h1v1h-1zM848 106h1v2h-1zM849 93h1v1h-1zM849 116h1v3h-1zM850 93h1v1h-1zM850 102h1v1h-1z"/><path fill="#008000" d="M254 229h1v2h-1zM255 221h1v1h-1zM255 223h1v3h-1zM255 226h1v4h-1zM256 223h1v1h-1zM257 223h1v1h-1zM260 236h1v3h-1zM266 236h1v2h-1zM270 229h1v5h-1zM271 234h1v3h-1zM272 223h1v4h-1zM272 228h1v5h-1zM273 221h1v2h-1zM274 227h1v4h-1zM278 225h1v5h-1zM280 232h1v1h-1zM282 224h1v2h-1zM282 227h1v4h-1zM282 231h1v5h-1zM282 236h1v2h-1zM284 238h1v1h-1zM285 103h1v1h-1zM285 236h1v1h-1zM286 109h1v1h-1zM286 226h1v1h-1zM286 227h1v4h-1zM287 225h1v2h-1zM288 227h1v1h-1zM289 102h1v1h-1zM289 221h1v1h-1zM289 230h1v4h-1zM290 107h1v1h-1zM290 109h1v1h-1zM290 235h1v4h-1zM291 104h1v3h-1zM292 98h1v1h-1zM292 102h1v2h-1zM293 103h1v1h-1zM294 99h1v3h-1zM294 233h1v1h-1zM296 217h1v1h-1zM298 236h1v4h-1zM299 109h1v1h-1zM300 103h1v1h-1zM300 241h1v1h-1zM301 111h1v3h-1zM302 113h1v1h-1zM303 101h1v1h-1zM303 103h1v3h-1zM304 103h1v2h-1zM304 239h1v1h-1zM305 104h1v3h-1zM305 107h1v1h-1zM306 104h1v2h-1zM307 102h1v2h-1zM307 237h1v1h-1zM307 242h1v2h-1zM308 116h1v3h-1zM310 101h1v3h-1zM311 232h1v1h-1zM311 241h1v3h-1zM312 108h1v3h-1zM312 111h1v2h-1zM313 240h1v2h-1zM315 231h1v2h-1zM316 234h1v4h-1zM317 109h1v1h-1zM318 109h1v1h-1zM319 231h1v3h-1zM319 234h1v4h-1zM320 104h1v2h-1zM321 105h1v1h-1zM321 109h1v3h-1zM322 103h1v2h-1zM322 110h1v2h-1zM322 113h1v3h-1zM322 241h1v1h-1zM324 103h1v1h-1zM324 229h1v2h-1zM325 101h1v1h-1zM325 103h1v2h-1zM326 106h1v1h-1zM326 107h1v1h-1zM326 108h1v2h-1zM327 103h1v3h-1zM327 111h1v3h-1zM328 110h1v3h-1zM330 107h1v1h-1zM331 230h1v2h-1zM331 239h1v1h-1zM331 240h1v3h-1zM332 109h1v1h-1zM333 234h1v1h-1zM334 233h1v1h-1zM334 234h1v4h-1zM335 107h1v1h-1zM335 230h1v4h-1zM340 233h1v5h-1zM341 232h1v2h-1zM343 232h1v5h-1zM346 234h1v1h-1zM347 227h1v3h-1zM351 225h1v2h-1zM353 226h1v3h-1zM354 223h1v2h-1zM355 225h1v1h-1zM356 234h1v3h-1zM358 232h1v4h-1zM360 230h1v4h-1zM365 222h1v2h-1zM366 232h1v4h-1zM367 225h1v5h-1zM370 227h1v5h-1zM370 236h1v1h-1zM371 233h1v3h-1zM373 233h1v2h-1zM375 229h1v1h-1zM377 232h1v4h-1zM379 229h1v2h-1zM379 231h1v3h-1zM381 220h1v2h-1zM383 227h1v1h-1zM385 239h1v1h-1zM386 231h1v4h-1zM388 227h1v5h-1zM391 223h1v4h-1zM395 222h1v3h-1zM397 235h1v1h-1zM398 233h1v1h-1zM400 223h1v3h-1zM400 230h1v4h-1zM401 226h1v1h-1zM402 103h1v3h-1zM402 231h1v3h-1zM403 101h1v1h-1zM403 103h1v3h-1zM403 223h1v4h-1zM404 105h1v1h-1zM405 104h1v3h-1zM406 109h1v1h-1zM406 111h1v1h-1zM407 107h1v1h-1zM407 221h1v4h-1zM408 226h1v5h-1zM409 106h1v3h-1zM409 115h1v2h-1zM411 103h1v2h-1zM412 227h1v3h-1zM413 102h1v1h-1zM413 103h1v2h-1zM413 105h1v1h-1zM415 111h1v1h-1zM415 223h1v1h-1zM417 105h1v1h-1zM417 106h1v1h-1zM417 108h1v2h-1zM417 219h1v4h-1zM418 103h1v2h-1zM418 105h1v1h-1zM418 217h1v2h-1zM418 227h1v2h-1zM419 111h1v3h-1zM419 229h1v2h-1zM419 231h1v1h-1zM419 232h1v2h-1zM420 102h1v3h-1zM420 226h1v5h-1zM421 213h1v1h-1zM422 230h1v2h-1zM423 234h1v2h-1zM424 99h1v3h-1zM425 102h1v3h-1zM426 105h1v3h-1zM426 220h1v1h-1zM426 235h1v2h-1zM427 100h1v1h-1zM427 101h1v1h-1zM427 104h1v2h-1zM428 99h1v2h-1zM428 103h1v2h-1zM429 107h1v3h-1zM429 113h1v3h-1zM429 223h1v4h-1zM430 103h1v2h-1zM431 105h1v1h-1zM431 109h1v2h-1zM431 225h1v5h-1zM432 103h1v1h-1zM432 105h1v3h-1zM432 236h1v2h-1zM432 238h1v1h-1zM433 224h1v4h-1zM434 237h1v2h-1zM437 231h1v4h-1zM437 236h1v1h-1zM438 227h1v2h-1zM441 225h1v1h-1zM442 235h1v1h-1zM443 237h1v1h-1zM444 226h1v5h-1zM445 227h1v2h-1zM448 238h1v2h-1zM449 235h1v2h-1zM451 232h1v4h-1zM452 220h1v4h-1zM453 238h1v1h-1zM455 231h1v4h-1zM456 230h1v5h-1zM458 218h1v2h-1zM461 229h1v3h-1zM465 229h1v1h-1zM465 230h1v1h-1zM467 233h1v1h-1zM470 231h1v1h-1zM472 237h1v1h-1zM474 226h1v2h-1zM477 227h1v2h-1zM478 237h1v3h-1zM481 229h1v2h-1zM481 235h1v2h-1zM481 237h1v1h-1zM483 222h1v2h-1zM484 222h1v2h-1zM484 224h1v1h-1zM485 225h1v2h-1zM485 234h1v2h-1zM486 222h1v2h-1zM487 232h1v2h-1zM488 229h1v1h-1zM488 231h1v4h-1zM492 231h1v4h-1zM493 227h1v1h-1zM494 231h1v3h-1zM496 230h1v5h-1zM497 232h1v2h-1zM498 221h1v1h-1zM499 221h1v2h-1zM499 224h1v4h-1zM501 222h1v1h-1zM501 223h1v2h-1zM502 221h1v2h-1zM502 225h1v3h-1zM504 231h1v4h-1zM505 217h1v2h-1zM506 216h1v1h-1zM506 235h1v1h-1zM507 228h1v4h-1zM508 229h1v1h-1zM510 225h1v5h-1zM511 221h1v5h-1zM512 236h1v1h-1zM513 222h1v2h-1zM515 228h1v4h-1zM517 224h1v3h-1zM518 224h1v2h-1zM519 211h1v3h-1zM520 103h1v2h-1zM523 117h1v2h-1zM524 111h1v2h-1zM524 113h1v3h-1zM524 219h1v3h-1zM525 228h1v4h-1zM526 103h1v2h-1zM526 107h1v3h-1zM526 110h1v1h-1zM526 222h1v4h-1zM527 219h1v2h-1zM528 108h1v2h-1zM528 211h1v2h-1zM528 217h1v5h-1zM529 112h1v2h-1zM529 114h1v1h-1zM530 231h1v1h-1zM531 221h1v4h-1zM532 101h1v2h-1zM532 226h1v1h-1zM533 103h1v2h-1zM534 99h1v3h-1zM534 229h1v1h-1zM536 101h1v1h-1zM538 100h1v3h-1zM539 236h1v1h-1zM541 98h1v1h-1zM541 102h1v3h-1zM542 235h1v1h-1zM543 100h1v1h-1zM543 101h1v1h-1zM544 226h1v2h-1zM547 236h1v3h-1zM548 232h1v3h-1zM548 235h1v5h-1zM549 242h1v2h-1zM550 234h1v3h-1zM551 244h1v1h-1zM552 225h1v2h-1zM552 233h1v4h-1zM553 237h1v5h-1zM553 242h1v2h-1zM555 231h1v2h-1zM556 243h1v2h-1zM557 239h1v2h-1zM560 234h1v2h-1zM560 236h1v3h-1zM560 242h1v2h-1zM561 225h1v2h-1zM562 226h1v2h-1zM563 241h1v1h-1zM567 232h1v2h-1zM568 240h1v3h-1zM569 232h1v2h-1zM573 227h1v2h-1zM573 229h1v2h-1zM573 237h1v3h-1zM574 227h1v4h-1zM576 217h1v2h-1zM576 237h1v2h-1zM578 232h1v4h-1zM580 227h1v2h-1zM581 236h1v1h-1zM583 235h1v1h-1zM584 219h1v2h-1zM584 232h1v5h-1zM588 221h1v1h-1zM588 231h1v2h-1zM590 102h1v3h-1zM590 110h1v2h-1zM590 222h1v2h-1zM591 104h1v1h-1zM591 227h1v1h-1zM592 105h1v1h-1zM592 106h1v1h-1zM592 109h1v1h-1zM592 232h1v2h-1zM592 237h1v1h-1zM593 109h1v3h-1zM593 112h1v2h-1zM593 223h1v1h-1zM594 232h1v4h-1zM594 236h1v1h-1zM597 97h1v3h-1zM597 101h1v3h-1zM597 106h1v1h-1zM597 227h1v4h-1zM598 231h1v4h-1zM599 101h1v2h-1zM599 103h1v1h-1zM600 106h1v3h-1zM601 99h1v1h-1zM601 218h1v2h-1zM601 225h1v3h-1zM602 221h1v1h-1zM603 102h1v1h-1zM603 106h1v2h-1zM605 104h1v1h-1zM605 223h1v1h-1zM606 119h1v1h-1zM606 122h1v1h-1zM607 106h1v1h-1zM607 107h1v3h-1zM607 231h1v3h-1zM608 103h1v1h-1zM609 100h1v3h-1zM609 223h1v2h-1zM610 98h1v3h-1zM611 116h1v3h-1zM612 102h1v2h-1zM613 105h1v2h-1zM614 99h1v3h-1zM616 104h1v2h-1zM616 224h1v1h-1zM616 225h1v1h-1zM617 108h1v3h-1zM617 112h1v3h-1zM617 229h1v2h-1zM618 101h1v3h-1zM618 106h1v1h-1zM618 237h1v2h-1zM619 221h1v2h-1zM619 231h1v2h-1zM620 99h1v1h-1zM620 103h1v3h-1zM621 106h1v2h-1zM621 108h1v3h-1zM621 111h1v1h-1zM622 107h1v3h-1zM623 223h1v2h-1zM623 234h1v1h-1zM623 235h1v4h-1zM624 109h1v3h-1zM627 237h1v1h-1zM628 224h1v2h-1zM629 106h1v2h-1zM630 229h1v5h-1zM631 230h1v5h-1zM632 103h1v2h-1zM632 227h1v2h-1zM633 100h1v2h-1zM634 104h1v3h-1zM634 233h1v1h-1zM635 112h1v2h-1zM635 237h1v2h-1zM636 100h1v2h-1zM638 102h1v1h-1zM638 105h1v3h-1zM638 108h1v1h-1zM638 112h1v2h-1zM639 117h1v3h-1zM640 111h1v2h-1zM640 229h1v5h-1zM644 237h1v2h-1zM652 223h1v2h-1zM653 224h1v2h-1zM653 231h1v2h-1zM654 226h1v1h-1zM654 227h1v5h-1zM655 236h1v2h-1zM662 238h1v2h-1zM664 221h1v2h-1zM665 239h1v1h-1zM669 228h1v1h-1zM669 233h1v2h-1zM672 230h1v1h-1zM674 228h1v1h-1zM674 238h1v5h-1zM676 239h1v1h-1zM676 240h1v1h-1zM678 235h1v5h-1zM679 237h1v2h-1zM680 236h1v5h-1zM681 106h1v3h-1zM681 226h1v1h-1zM682 104h1v1h-1zM683 101h1v1h-1zM684 110h1v1h-1zM686 100h1v2h-1zM686 102h1v3h-1zM686 107h1v1h-1zM686 225h1v5h-1zM687 106h1v1h-1zM688 106h1v1h-1zM688 230h1v3h-1zM688 233h1v1h-1zM688 235h1v3h-1zM689 116h1v1h-1zM689 120h1v2h-1zM691 108h1v2h-1zM692 103h1v3h-1zM692 107h1v2h-1zM694 222h1v2h-1zM695 101h1v1h-1zM695 224h1v2h-1zM697 97h1v2h-1zM697 225h1v3h-1zM699 101h1v1h-1zM700 120h1v2h-1zM701 236h1v1h-1zM702 223h1v3h-1zM704 225h1v2h-1zM714 225h1v2h-1zM714 235h1v3h-1zM715 228h1v2h-1zM717 225h1v1h-1zM717 234h1v3h-1zM719 234h1v3h-1zM720 218h1v2h-1zM721 229h1v1h-1zM723 231h1v2h-1zM723 233h1v4h-1zM727 221h1v1h-1zM727 222h1v5h-1zM729 234h1v1h-1zM731 218h1v3h-1zM734 225h1v3h-1zM735 229h1v2h-1zM736 225h1v1h-1zM737 231h1v3h-1zM739 218h1v2h-1zM739 230h1v1h-1zM742 222h1v1h-1zM745 225h1v1h-1zM746 226h1v3h-1zM749 227h1v2h-1zM750 231h1v2h-1zM752 229h1v2h-1zM754 230h1v1h-1zM757 226h1v1h-1zM759 226h1v2h-1zM760 227h1v1h-1zM760 228h1v4h-1zM761 228h1v2h-1zM763 229h1v1h-1zM764 218h1v4h-1zM764 222h1v4h-1zM767 224h1v2h-1zM768 223h1v2h-1zM768 225h1v1h-1zM768 226h1v3h-1zM770 96h1v2h-1zM771 97h1v3h-1zM771 102h1v1h-1zM772 98h1v2h-1zM772 100h1v3h-1zM772 103h1v2h-1zM772 105h1v2h-1zM773 236h1v2h-1zM774 100h1v1h-1zM774 101h1v1h-1zM774 230h1v3h-1zM775 104h1v3h-1zM777 104h1v2h-1zM777 234h1v2h-1zM779 235h1v2h-1zM780 99h1v1h-1zM781 105h1v1h-1zM782 101h1v3h-1zM782 104h1v2h-1zM782 230h1v1h-1zM782 231h1v1h-1zM783 232h1v2h-1zM783 234h1v4h-1zM783 238h1v1h-1zM784 102h1v3h-1zM785 101h1v1h-1zM786 100h1v2h-1zM786 105h1v1h-1zM787 106h1v1h-1zM787 110h1v1h-1zM787 227h1v2h-1zM788 101h1v3h-1zM789 224h1v1h-1zM790 106h1v1h-1zM790 107h1v1h-1zM790 230h1v4h-1zM791 106h1v3h-1zM792 107h1v2h-1zM793 115h1v1h-1zM793 233h1v1h-1zM793 237h1v3h-1zM793 240h1v1h-1zM794 115h1v1h-1zM794 116h1v1h-1zM794 221h1v1h-1zM795 116h1v2h-1zM795 242h1v3h-1zM796 110h1v3h-1zM796 234h1v2h-1zM797 104h1v3h-1zM797 227h1v2h-1zM798 107h1v3h-1zM798 234h1v2h-1zM798 236h1v4h-1zM799 103h1v2h-1zM799 241h1v2h-1zM800 101h1v1h-1zM800 103h1v1h-1zM800 224h1v1h-1zM801 104h1v3h-1zM801 239h1v2h-1zM801 241h1v1h-1zM802 230h1v2h-1zM803 232h1v4h-1zM804 102h1v1h-1zM804 231h1v1h-1zM805 101h1v1h-1zM806 98h1v1h-1zM807 106h1v3h-1zM808 99h1v3h-1zM808 104h1v1h-1zM808 230h1v2h-1zM809 98h1v1h-1zM811 98h1v3h-1zM811 242h1v1h-1zM812 229h1v1h-1zM815 99h1v3h-1zM815 102h1v2h-1zM815 105h1v1h-1zM818 109h1v3h-1zM818 229h1v3h-1zM818 236h1v1h-1zM818 237h1v2h-1zM819 229h1v2h-1zM820 114h1v2h-1zM821 107h1v2h-1zM821 114h1v3h-1zM822 99h1v3h-1zM822 106h1v2h-1zM822 230h1v5h-1zM824 97h1v2h-1zM824 104h1v2h-1zM825 99h1v3h-1zM825 102h1v1h-1zM826 107h1v1h-1zM827 106h1v3h-1zM827 220h1v4h-1zM828 100h1v2h-1zM828 105h1v3h-1zM828 228h1v1h-1zM829 100h1v1h-1zM829 101h1v1h-1zM829 226h1v2h-1zM830 109h1v2h-1zM830 115h1v2h-1zM830 226h1v2h-1zM830 230h1v3h-1zM831 104h1v2h-1zM831 225h1v1h-1zM831 235h1v1h-1zM832 102h1v2h-1zM832 111h1v3h-1zM833 106h1v2h-1zM833 231h1v2h-1zM834 114h1v3h-1zM834 117h1v1h-1zM834 231h1v1h-1zM835 99h1v2h-1zM835 101h1v1h-1zM836 224h1v1h-1zM839 228h1v5h-1zM840 220h1v2h-1zM840 222h1v4h-1zM840 233h1v1h-1zM844 224h1v3h-1zM846 217h1v1h-1zM847 226h1v2h-1zM848 231h1v1h-1z"/><path fill="#00ff00" d="M254 233h1v2h-1zM261 228h1v1h-1zM264 226h1v2h-1zM265 229h1v3h-1zM269 222h1v1h-1zM277 231h1v4h-1zM286 106h1v3h-1zM287 100h1v2h-1zM287 107h1v3h-1zM289 103h1v1h-1zM290 106h1v1h-1zM291 101h1v1h-1zM293 106h1v2h-1zM294 102h1v2h-1zM294 106h1v3h-1zM295 105h1v3h-1zM297 108h1v2h-1zM297 114h1v2h-1zM298 116h1v1h-1zM300 100h1v1h-1zM301 228h1v2h-1zM303 102h1v1h-1zM305 101h1v2h-1zM305 234h1v2h-1zM307 106h1v1h-1zM308 104h1v1h-1zM308 105h1v3h-1zM308 113h1v3h-1zM309 105h1v2h-1zM309 107h1v3h-1zM309 112h1v1h-1zM309 228h1v1h-1zM310 100h1v1h-1zM310 104h1v3h-1zM312 115h1v3h-1zM313 101h1v1h-1zM313 108h1v1h-1zM313 222h1v1h-1zM314 103h1v2h-1zM315 98h1v2h-1zM315 105h1v2h-1zM316 111h1v2h-1zM317 102h1v3h-1zM318 110h1v2h-1zM320 106h1v2h-1zM320 108h1v1h-1zM321 106h1v3h-1zM322 108h1v2h-1zM323 105h1v3h-1zM323 111h1v3h-1zM323 114h1v3h-1zM323 238h1v2h-1zM327 110h1v1h-1zM328 104h1v3h-1zM328 108h1v2h-1zM328 236h1v1h-1zM329 104h1v2h-1zM330 103h1v1h-1zM332 108h1v1h-1zM332 110h1v1h-1zM332 114h1v2h-1zM333 107h1v2h-1zM333 109h1v2h-1zM333 228h1v2h-1zM334 112h1v2h-1zM335 105h1v2h-1zM342 221h1v5h-1zM348 240h1v2h-1zM360 226h1v2h-1zM360 234h1v3h-1zM366 220h1v2h-1zM382 234h1v1h-1zM386 230h1v1h-1zM398 212h1v2h-1zM401 101h1v1h-1zM401 102h1v1h-1zM401 103h1v3h-1zM402 218h1v2h-1zM403 102h1v1h-1zM404 103h1v2h-1zM407 103h1v1h-1zM408 100h1v1h-1zM409 103h1v3h-1zM409 111h1v1h-1zM411 105h1v1h-1zM415 110h1v1h-1zM416 105h1v2h-1zM416 109h1v1h-1zM416 225h1v2h-1zM417 218h1v1h-1zM417 223h1v2h-1zM421 102h1v1h-1zM423 107h1v3h-1zM424 216h1v2h-1zM425 217h1v2h-1zM425 230h1v4h-1zM427 232h1v1h-1zM429 102h1v2h-1zM429 104h1v3h-1zM430 109h1v2h-1zM430 230h1v1h-1zM431 101h1v2h-1zM432 102h1v1h-1zM435 230h1v2h-1zM438 235h1v1h-1zM454 226h1v2h-1zM465 231h1v3h-1zM474 229h1v2h-1zM477 231h1v1h-1zM479 233h1v5h-1zM486 224h1v5h-1zM492 235h1v1h-1zM504 229h1v1h-1zM509 223h1v5h-1zM511 220h1v1h-1zM513 228h1v1h-1zM514 235h1v1h-1zM515 226h1v2h-1zM520 99h1v1h-1zM522 101h1v3h-1zM523 116h1v1h-1zM524 108h1v3h-1zM524 227h1v1h-1zM526 105h1v2h-1zM528 232h1v1h-1zM530 105h1v2h-1zM530 109h1v3h-1zM531 105h1v1h-1zM531 106h1v3h-1zM532 111h1v2h-1zM533 101h1v2h-1zM533 105h1v2h-1zM533 108h1v1h-1zM533 229h1v3h-1zM534 102h1v2h-1zM535 104h1v1h-1zM536 98h1v2h-1zM536 100h1v1h-1zM536 242h1v1h-1zM537 101h1v1h-1zM537 109h1v3h-1zM537 112h1v2h-1zM538 97h1v2h-1zM539 103h1v3h-1zM539 109h1v1h-1zM540 107h1v2h-1zM541 240h1v5h-1zM542 103h1v1h-1zM543 102h1v1h-1zM544 100h1v3h-1zM544 105h1v3h-1zM545 241h1v1h-1zM547 234h1v2h-1zM549 239h1v3h-1zM551 230h1v1h-1zM577 226h1v2h-1zM587 223h1v4h-1zM590 105h1v2h-1zM593 114h1v2h-1zM593 116h1v1h-1zM594 96h1v1h-1zM594 99h1v1h-1zM594 227h1v4h-1zM595 97h1v2h-1zM595 101h1v3h-1zM595 104h1v3h-1zM595 107h1v2h-1zM596 105h1v3h-1zM598 103h1v2h-1zM600 101h1v1h-1zM600 102h1v1h-1zM601 233h1v2h-1zM602 101h1v1h-1zM603 212h1v2h-1zM604 226h1v2h-1zM605 105h1v2h-1zM605 107h1v2h-1zM606 115h1v2h-1zM609 97h1v1h-1zM610 104h1v3h-1zM611 103h1v3h-1zM611 106h1v1h-1zM611 224h1v1h-1zM612 100h1v2h-1zM612 105h1v2h-1zM612 107h1v3h-1zM612 231h1v1h-1zM615 104h1v3h-1zM615 225h1v3h-1zM616 109h1v3h-1zM616 112h1v3h-1zM616 221h1v2h-1zM617 107h1v1h-1zM617 115h1v2h-1zM618 104h1v2h-1zM618 107h1v2h-1zM618 109h1v1h-1zM620 100h1v2h-1zM622 236h1v3h-1zM623 98h1v2h-1zM625 102h1v2h-1zM625 105h1v1h-1zM625 106h1v3h-1zM625 109h1v1h-1zM625 229h1v2h-1zM625 234h1v3h-1zM626 102h1v2h-1zM628 104h1v2h-1zM630 228h1v1h-1zM631 107h1v1h-1zM631 108h1v1h-1zM635 114h1v2h-1zM636 108h1v2h-1zM636 233h1v1h-1zM637 115h1v3h-1zM637 118h1v3h-1zM637 121h1v3h-1zM638 103h1v2h-1zM639 112h1v3h-1zM649 230h1v3h-1zM662 230h1v4h-1zM666 235h1v4h-1zM671 234h1v5h-1zM673 237h1v1h-1zM675 227h1v1h-1zM677 222h1v1h-1zM680 102h1v1h-1zM680 106h1v3h-1zM681 103h1v1h-1zM683 99h1v1h-1zM683 229h1v3h-1zM684 103h1v1h-1zM684 229h1v3h-1zM685 113h1v2h-1zM685 115h1v2h-1zM685 117h1v1h-1zM687 102h1v2h-1zM687 105h1v1h-1zM688 103h1v3h-1zM688 113h1v2h-1zM688 223h1v1h-1zM690 103h1v1h-1zM691 101h1v2h-1zM692 106h1v1h-1zM692 109h1v3h-1zM693 102h1v1h-1zM693 103h1v1h-1zM693 109h1v1h-1zM693 110h1v2h-1zM694 102h1v1h-1zM694 103h1v2h-1zM694 107h1v3h-1zM695 103h1v1h-1zM696 107h1v3h-1zM696 110h1v2h-1zM696 220h1v1h-1zM697 103h1v3h-1zM698 104h1v2h-1zM698 106h1v1h-1zM698 107h1v3h-1zM699 105h1v2h-1zM699 229h1v2h-1zM700 122h1v3h-1zM701 231h1v1h-1zM704 218h1v1h-1zM708 223h1v3h-1zM709 230h1v1h-1zM711 227h1v1h-1zM714 224h1v1h-1zM721 223h1v2h-1zM722 229h1v1h-1zM727 229h1v1h-1zM743 230h1v3h-1zM744 224h1v2h-1zM746 219h1v2h-1zM755 218h1v5h-1zM757 220h1v1h-1zM766 233h1v1h-1zM770 103h1v2h-1zM770 105h1v2h-1zM771 103h1v1h-1zM774 228h1v2h-1zM775 107h1v2h-1zM775 240h1v3h-1zM776 102h1v3h-1zM776 105h1v3h-1zM780 103h1v3h-1zM781 102h1v1h-1zM781 103h1v1h-1zM781 104h1v1h-1zM783 99h1v1h-1zM783 239h1v5h-1zM784 99h1v1h-1zM784 105h1v1h-1zM786 109h1v3h-1zM786 112h1v2h-1zM786 239h1v2h-1zM787 107h1v2h-1zM788 104h1v1h-1zM788 106h1v3h-1zM789 100h1v1h-1zM789 105h1v2h-1zM789 107h1v2h-1zM789 229h1v1h-1zM791 103h1v3h-1zM791 109h1v1h-1zM792 103h1v2h-1zM794 117h1v2h-1zM794 234h1v1h-1zM795 109h1v1h-1zM795 115h1v1h-1zM795 234h1v1h-1zM796 106h1v1h-1zM796 107h1v3h-1zM798 242h1v2h-1zM801 108h1v1h-1zM802 109h1v3h-1zM802 239h1v1h-1zM803 120h1v3h-1zM804 98h1v1h-1zM805 99h1v2h-1zM805 103h1v1h-1zM805 236h1v1h-1zM807 104h1v2h-1zM807 233h1v2h-1zM808 105h1v1h-1zM808 109h1v3h-1zM809 96h1v1h-1zM809 97h1v1h-1zM810 97h1v1h-1zM811 101h1v1h-1zM812 98h1v1h-1zM812 100h1v1h-1zM813 107h1v1h-1zM814 101h1v2h-1zM814 109h1v3h-1zM815 97h1v1h-1zM815 104h1v1h-1zM817 103h1v1h-1zM818 115h1v3h-1zM819 98h1v2h-1zM819 110h1v2h-1zM819 225h1v1h-1zM820 112h1v1h-1zM820 228h1v2h-1zM821 112h1v2h-1zM823 105h1v2h-1zM823 110h1v1h-1zM823 114h1v2h-1zM826 104h1v3h-1zM826 111h1v3h-1zM827 103h1v3h-1zM828 223h1v1h-1zM829 103h1v1h-1zM830 224h1v2h-1zM831 106h1v3h-1zM831 220h1v2h-1zM832 108h1v3h-1zM833 108h1v2h-1zM834 222h1v1h-1zM835 98h1v1h-1zM841 222h1v2h-1zM841 232h1v3h-1zM846 218h1v4h-1z"/><path fill="#0000ff" d="M337 104h1v2h-1zM340 105h1v2h-1zM342 102h1v3h-1zM344 98h1v1h-1zM349 113h1v3h-1zM353 105h1v2h-1zM356 103h1v3h-1zM359 99h1v2h-1zM359 101h1v2h-1zM359 103h1v2h-1zM360 104h1v1h-1zM361 103h1v3h-1zM450 102h1v3h-1zM451 102h1v2h-1zM452 110h1v2h-1zM452 112h1v2h-1zM454 98h1v3h-1zM458 106h1v3h-1zM458 112h1v1h-1zM459 110h1v3h-1zM462 99h1v2h-1zM462 103h1v3h-1zM465 104h1v1h-1zM467 113h1v1h-1zM471 108h1v2h-1zM472 99h1v3h-1zM472 102h1v1h-1zM475 101h1v2h-1zM477 109h1v1h-1zM478 109h1v2h-1zM478 111h1v1h-1zM480 104h1v1h-1zM482 98h1v3h-1zM482 101h1v2h-1zM483 106h1v2h-1zM484 104h1v2h-1zM484 106h1v2h-1zM485 98h1v2h-1zM495 99h1v1h-1zM495 103h1v2h-1zM571 110h1v1h-1zM572 111h1v3h-1zM575 107h1v1h-1zM579 104h1v2h-1zM582 97h1v3h-1zM583 101h1v3h-1zM586 101h1v1h-1zM701 99h1v2h-1zM702 115h1v3h-1zM706 116h1v1h-1zM709 101h1v1h-1zM709 102h1v3h-1zM710 102h1v2h-1zM719 107h1v1h-1zM720 102h1v3h-1zM720 107h1v3h-1zM836 109h1v3h-1zM836 118h1v2h-1zM839 107h1v1h-1zM840 101h1v3h-1zM840 104h1v1h-1zM841 100h1v2h-1zM842 105h1v1h-1zM842 109h1v3h-1zM843 104h1v1h-1z"/><path fill="#800080" d="M430 93h1v2h-1zM571 93h1v2h-1zM572 93h1v3h-1zM573 93h1v3h-1zM574 93h1v1h-1zM575 93h1v3h-1z"/><rect x="250" y="93" width="1" height="300" fill="#fff"/></svg>
<div id="status"><svg class="abs" style="left:0;top:0" width="633" height="16"><defs><linearGradient id="sg" x1="0" y1="0" x2="0" y2="1"><stop offset="0" stop-color="#bcbcbc"/><stop offset="1" stop-color="#cbcbcb"/></linearGradient></defs><path d="M7 0.5H625L632 8L625 15.5H7L0.5 8Z" fill="url(#sg)"/><path d="M0.5 8L7 0.5H625L632 8" fill="none" stroke="#7a7a7a"/><path d="M0.5 8L7 15.5H625L632 8" fill="none" stroke="#fafafa"/></svg><span>Data Rate (y-Axis): 38.22 MBit/s - Timestamp (x-Axis): 00:00:00.418670 - Evaluated Time Frame: 5 s</span></div>
</body></html>
